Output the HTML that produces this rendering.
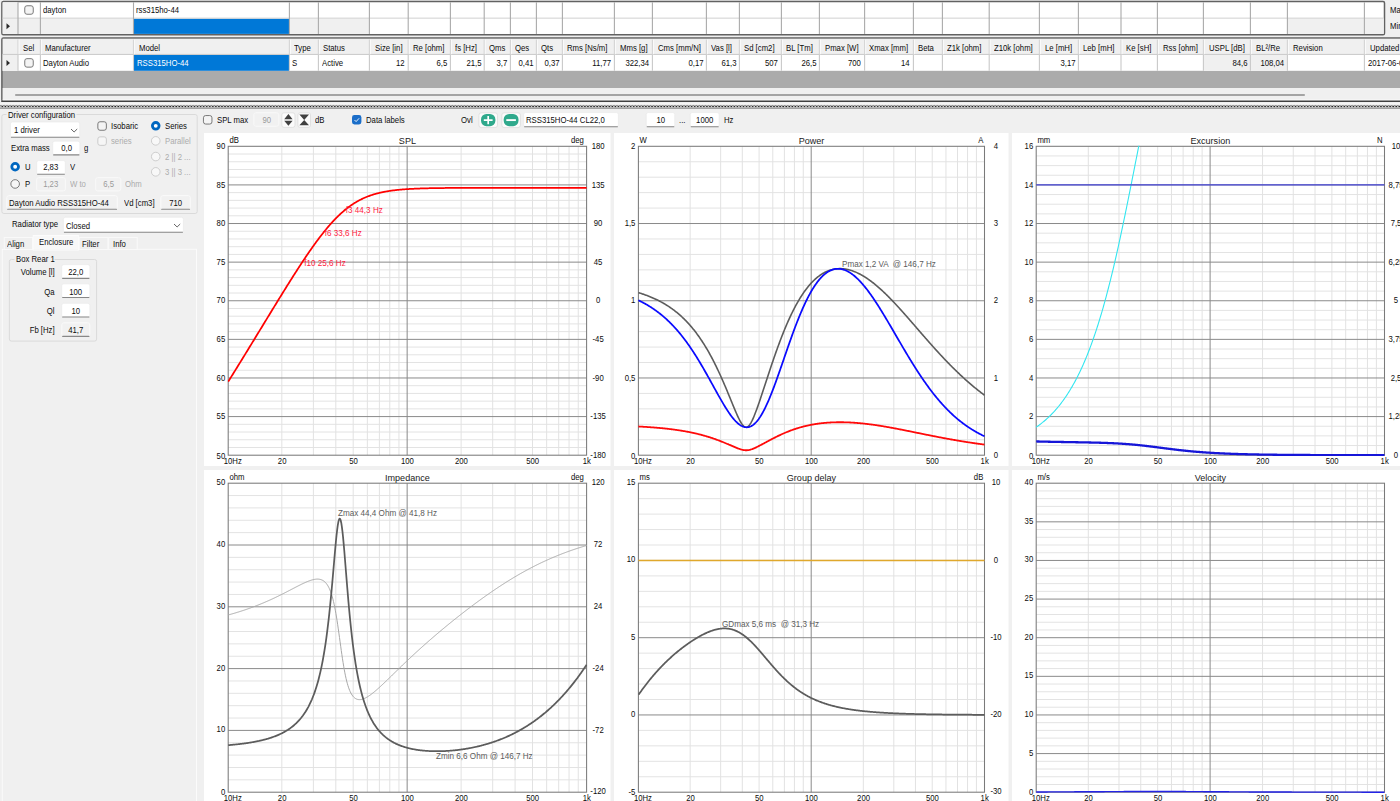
<!DOCTYPE html><html><head><meta charset="utf-8"><title>Loudspeaker enclosure simulation</title><style>
html,body{margin:0;padding:0;}
body{width:1400px;height:801px;overflow:hidden;background:#f0f0f0;position:relative;font-family:"Liberation Sans",sans-serif;font-size:9.5px;color:#0c0c0c;}
div,span,svg{position:absolute;box-sizing:border-box;}
.t{white-space:nowrap;line-height:10px;height:10px;transform:scaleX(0.815);transform-origin:0 0;}
.tr{transform-origin:100% 0;}
</style></head><body>
<svg style="left:0;top:0" width="1400" height="801"><rect x="1.9" y="1.5" width="1382.6" height="33.2" fill="#fff" rx="1.5" stroke="#626262" stroke-width="1.5"/><rect x="2.65" y="18.2" width="1381.1" height="15.7" fill="#f0f0f0"/><rect x="369.9" y="18.2" width="917.5" height="15.7" fill="#fff"/><rect x="2.65" y="2.25" width="15.4" height="16" fill="#f0f0f0"/><rect x="134" y="18.7" width="155" height="15.2" fill="#0078d7"/><rect x="2.65" y="17.6" width="1381.1" height="1.1" fill="#d4d4d4"/><rect x="17.45" y="2.25" width="1.1" height="31.7" fill="#aaaaaa"/><rect x="39.85" y="2.25" width="1.1" height="31.7" fill="#aaaaaa"/><rect x="132.95" y="2.25" width="1.1" height="31.7" fill="#aaaaaa"/><rect x="288.85" y="2.25" width="1.1" height="31.7" fill="#aaaaaa"/><rect x="317.85" y="2.25" width="1.1" height="31.7" fill="#aaaaaa"/><rect x="368.85" y="2.25" width="1.1" height="31.7" fill="#aaaaaa"/><rect x="407.65" y="2.25" width="1.1" height="31.7" fill="#aaaaaa"/><rect x="449.85" y="2.25" width="1.1" height="31.7" fill="#aaaaaa"/><rect x="483.65" y="2.25" width="1.1" height="31.7" fill="#aaaaaa"/><rect x="509.85" y="2.25" width="1.1" height="31.7" fill="#aaaaaa"/><rect x="535.85" y="2.25" width="1.1" height="31.7" fill="#aaaaaa"/><rect x="561.85" y="2.25" width="1.1" height="31.7" fill="#aaaaaa"/><rect x="613.85" y="2.25" width="1.1" height="31.7" fill="#aaaaaa"/><rect x="651.85" y="2.25" width="1.1" height="31.7" fill="#aaaaaa"/><rect x="705.85" y="2.25" width="1.1" height="31.7" fill="#aaaaaa"/><rect x="738.85" y="2.25" width="1.1" height="31.7" fill="#aaaaaa"/><rect x="780.85" y="2.25" width="1.1" height="31.7" fill="#aaaaaa"/><rect x="818.85" y="2.25" width="1.1" height="31.7" fill="#aaaaaa"/><rect x="864.05" y="2.25" width="1.1" height="31.7" fill="#aaaaaa"/><rect x="912.85" y="2.25" width="1.1" height="31.7" fill="#aaaaaa"/><rect x="941.85" y="2.25" width="1.1" height="31.7" fill="#aaaaaa"/><rect x="988.65" y="2.25" width="1.1" height="31.7" fill="#aaaaaa"/><rect x="1038.85" y="2.25" width="1.1" height="31.7" fill="#aaaaaa"/><rect x="1077.85" y="2.25" width="1.1" height="31.7" fill="#aaaaaa"/><rect x="1120.45" y="2.25" width="1.1" height="31.7" fill="#aaaaaa"/><rect x="1156.85" y="2.25" width="1.1" height="31.7" fill="#aaaaaa"/><rect x="1202.85" y="2.25" width="1.1" height="31.7" fill="#aaaaaa"/><rect x="1249.85" y="2.25" width="1.1" height="31.7" fill="#aaaaaa"/><rect x="1286.85" y="2.25" width="1.1" height="31.7" fill="#aaaaaa"/><rect x="1363.85" y="2.25" width="1.1" height="31.7" fill="#aaaaaa"/><rect x="24.75" y="5.75" width="8.5" height="8.5" fill="#f4f4f4" rx="2.2" stroke="#6c6c6c" stroke-width="0.9"/><path d="M6.5 23.2 L10 26.2 L6.5 29.2 Z" fill="#2b2b2b"/><rect x="1.9" y="38" width="1420" height="63.3" fill="#ababab" rx="1.5" stroke="#626262" stroke-width="1.5"/><rect x="2.65" y="38.75" width="1400" height="15.7" fill="#f0f0f0"/><rect x="2.65" y="54.4" width="1400" height="16.4" fill="#fff"/><rect x="2.65" y="54.4" width="15.4" height="16.4" fill="#f0f0f0"/><rect x="134" y="55" width="155" height="15.8" fill="#0078d7"/><rect x="1203.9" y="55" width="83" height="15.8" fill="#f0f0f0"/><rect x="2.65" y="88" width="1400" height="12.6" fill="#f0f0f0"/><rect x="2.65" y="99.6" width="1400" height="0.9" fill="#fdfdfd"/><rect x="1.2" y="100.6" width="1400" height="1.3" fill="#3e3e3e"/><rect x="15" y="94.3" width="1290" height="1.4" fill="#8b8b8b" rx="0.7"/><rect x="2.65" y="53.9" width="1400" height="1.1" fill="#cdcdcd"/><rect x="17.4" y="39.6" width="1.2" height="14.6" fill="#d6d6d6"/><rect x="18.6" y="39.6" width="0.9" height="14.6" fill="#fbfbfb"/><rect x="17.45" y="55" width="1.1" height="15.8" fill="#c9c9c9"/><rect x="39.8" y="39.6" width="1.2" height="14.6" fill="#d6d6d6"/><rect x="41" y="39.6" width="0.9" height="14.6" fill="#fbfbfb"/><rect x="39.85" y="55" width="1.1" height="15.8" fill="#c9c9c9"/><rect x="132.9" y="39.6" width="1.2" height="14.6" fill="#d6d6d6"/><rect x="134.1" y="39.6" width="0.9" height="14.6" fill="#fbfbfb"/><rect x="132.95" y="55" width="1.1" height="15.8" fill="#c9c9c9"/><rect x="288.8" y="39.6" width="1.2" height="14.6" fill="#d6d6d6"/><rect x="290" y="39.6" width="0.9" height="14.6" fill="#fbfbfb"/><rect x="288.85" y="55" width="1.1" height="15.8" fill="#c9c9c9"/><rect x="317.8" y="39.6" width="1.2" height="14.6" fill="#d6d6d6"/><rect x="319" y="39.6" width="0.9" height="14.6" fill="#fbfbfb"/><rect x="317.85" y="55" width="1.1" height="15.8" fill="#c9c9c9"/><rect x="368.8" y="39.6" width="1.2" height="14.6" fill="#d6d6d6"/><rect x="370" y="39.6" width="0.9" height="14.6" fill="#fbfbfb"/><rect x="368.85" y="55" width="1.1" height="15.8" fill="#c9c9c9"/><rect x="407.6" y="39.6" width="1.2" height="14.6" fill="#d6d6d6"/><rect x="408.8" y="39.6" width="0.9" height="14.6" fill="#fbfbfb"/><rect x="407.65" y="55" width="1.1" height="15.8" fill="#c9c9c9"/><rect x="449.8" y="39.6" width="1.2" height="14.6" fill="#d6d6d6"/><rect x="451" y="39.6" width="0.9" height="14.6" fill="#fbfbfb"/><rect x="449.85" y="55" width="1.1" height="15.8" fill="#c9c9c9"/><rect x="483.6" y="39.6" width="1.2" height="14.6" fill="#d6d6d6"/><rect x="484.8" y="39.6" width="0.9" height="14.6" fill="#fbfbfb"/><rect x="483.65" y="55" width="1.1" height="15.8" fill="#c9c9c9"/><rect x="509.8" y="39.6" width="1.2" height="14.6" fill="#d6d6d6"/><rect x="511" y="39.6" width="0.9" height="14.6" fill="#fbfbfb"/><rect x="509.85" y="55" width="1.1" height="15.8" fill="#c9c9c9"/><rect x="535.8" y="39.6" width="1.2" height="14.6" fill="#d6d6d6"/><rect x="537" y="39.6" width="0.9" height="14.6" fill="#fbfbfb"/><rect x="535.85" y="55" width="1.1" height="15.8" fill="#c9c9c9"/><rect x="561.8" y="39.6" width="1.2" height="14.6" fill="#d6d6d6"/><rect x="563" y="39.6" width="0.9" height="14.6" fill="#fbfbfb"/><rect x="561.85" y="55" width="1.1" height="15.8" fill="#c9c9c9"/><rect x="613.8" y="39.6" width="1.2" height="14.6" fill="#d6d6d6"/><rect x="615" y="39.6" width="0.9" height="14.6" fill="#fbfbfb"/><rect x="613.85" y="55" width="1.1" height="15.8" fill="#c9c9c9"/><rect x="651.8" y="39.6" width="1.2" height="14.6" fill="#d6d6d6"/><rect x="653" y="39.6" width="0.9" height="14.6" fill="#fbfbfb"/><rect x="651.85" y="55" width="1.1" height="15.8" fill="#c9c9c9"/><rect x="705.8" y="39.6" width="1.2" height="14.6" fill="#d6d6d6"/><rect x="707" y="39.6" width="0.9" height="14.6" fill="#fbfbfb"/><rect x="705.85" y="55" width="1.1" height="15.8" fill="#c9c9c9"/><rect x="738.8" y="39.6" width="1.2" height="14.6" fill="#d6d6d6"/><rect x="740" y="39.6" width="0.9" height="14.6" fill="#fbfbfb"/><rect x="738.85" y="55" width="1.1" height="15.8" fill="#c9c9c9"/><rect x="780.8" y="39.6" width="1.2" height="14.6" fill="#d6d6d6"/><rect x="782" y="39.6" width="0.9" height="14.6" fill="#fbfbfb"/><rect x="780.85" y="55" width="1.1" height="15.8" fill="#c9c9c9"/><rect x="818.8" y="39.6" width="1.2" height="14.6" fill="#d6d6d6"/><rect x="820" y="39.6" width="0.9" height="14.6" fill="#fbfbfb"/><rect x="818.85" y="55" width="1.1" height="15.8" fill="#c9c9c9"/><rect x="864" y="39.6" width="1.2" height="14.6" fill="#d6d6d6"/><rect x="865.2" y="39.6" width="0.9" height="14.6" fill="#fbfbfb"/><rect x="864.05" y="55" width="1.1" height="15.8" fill="#c9c9c9"/><rect x="912.8" y="39.6" width="1.2" height="14.6" fill="#d6d6d6"/><rect x="914" y="39.6" width="0.9" height="14.6" fill="#fbfbfb"/><rect x="912.85" y="55" width="1.1" height="15.8" fill="#c9c9c9"/><rect x="941.8" y="39.6" width="1.2" height="14.6" fill="#d6d6d6"/><rect x="943" y="39.6" width="0.9" height="14.6" fill="#fbfbfb"/><rect x="941.85" y="55" width="1.1" height="15.8" fill="#c9c9c9"/><rect x="988.6" y="39.6" width="1.2" height="14.6" fill="#d6d6d6"/><rect x="989.8" y="39.6" width="0.9" height="14.6" fill="#fbfbfb"/><rect x="988.65" y="55" width="1.1" height="15.8" fill="#c9c9c9"/><rect x="1038.8" y="39.6" width="1.2" height="14.6" fill="#d6d6d6"/><rect x="1040" y="39.6" width="0.9" height="14.6" fill="#fbfbfb"/><rect x="1038.85" y="55" width="1.1" height="15.8" fill="#c9c9c9"/><rect x="1077.8" y="39.6" width="1.2" height="14.6" fill="#d6d6d6"/><rect x="1079" y="39.6" width="0.9" height="14.6" fill="#fbfbfb"/><rect x="1077.85" y="55" width="1.1" height="15.8" fill="#c9c9c9"/><rect x="1120.4" y="39.6" width="1.2" height="14.6" fill="#d6d6d6"/><rect x="1121.6" y="39.6" width="0.9" height="14.6" fill="#fbfbfb"/><rect x="1120.45" y="55" width="1.1" height="15.8" fill="#c9c9c9"/><rect x="1156.8" y="39.6" width="1.2" height="14.6" fill="#d6d6d6"/><rect x="1158" y="39.6" width="0.9" height="14.6" fill="#fbfbfb"/><rect x="1156.85" y="55" width="1.1" height="15.8" fill="#c9c9c9"/><rect x="1202.8" y="39.6" width="1.2" height="14.6" fill="#d6d6d6"/><rect x="1204" y="39.6" width="0.9" height="14.6" fill="#fbfbfb"/><rect x="1202.85" y="55" width="1.1" height="15.8" fill="#c9c9c9"/><rect x="1249.8" y="39.6" width="1.2" height="14.6" fill="#d6d6d6"/><rect x="1251" y="39.6" width="0.9" height="14.6" fill="#fbfbfb"/><rect x="1249.85" y="55" width="1.1" height="15.8" fill="#c9c9c9"/><rect x="1286.8" y="39.6" width="1.2" height="14.6" fill="#d6d6d6"/><rect x="1288" y="39.6" width="0.9" height="14.6" fill="#fbfbfb"/><rect x="1286.85" y="55" width="1.1" height="15.8" fill="#c9c9c9"/><rect x="1363.8" y="39.6" width="1.2" height="14.6" fill="#d6d6d6"/><rect x="1365" y="39.6" width="0.9" height="14.6" fill="#fbfbfb"/><rect x="1363.85" y="55" width="1.1" height="15.8" fill="#c9c9c9"/><path d="M6.5 60 L10 63 L6.5 66 Z" fill="#2b2b2b"/><rect x="24.75" y="58.65" width="8.5" height="8.5" fill="#f4f4f4" rx="2.2" stroke="#6c6c6c" stroke-width="0.9"/><rect x="1.9" y="114.5" width="195.3" height="99" fill="none" rx="2" stroke="#dadada" stroke-width="1"/><rect x="6.5" y="110" width="70" height="9" fill="#f0f0f0"/><rect x="10.4" y="121.95" width="69.4" height="15.4" fill="#fff" rx="2" stroke="#e9e9e9" stroke-width="0.7"/><rect x="10.85" y="136.65" width="68.5" height="1.05" fill="#888888" rx="0.5"/><path d="M71 129 L74.1 132 L77.2 129" fill="none" stroke="#555" stroke-width="0.9"/><rect x="97.85" y="121.75" width="8.5" height="8.5" fill="#f4f4f4" rx="2.2" stroke="#6c6c6c" stroke-width="0.9"/><rect x="97.85" y="136.85" width="8.5" height="8.5" fill="#f6f6f6" rx="2.2" stroke="#c6c6c6" stroke-width="0.9"/><circle cx="155.75" cy="125.85" r="3.35" fill="#fff" stroke="#0067c0" stroke-width="2.8"/><circle cx="155.75" cy="140.85" r="4.3" fill="#f8f8f8" stroke="#c8c8c8" stroke-width="0.9"/><circle cx="155.75" cy="156.55" r="4.3" fill="#f8f8f8" stroke="#c8c8c8" stroke-width="0.9"/><circle cx="155.75" cy="171.85" r="4.3" fill="#f8f8f8" stroke="#c8c8c8" stroke-width="0.9"/><rect x="52.7" y="141.15" width="27.2" height="13.9" fill="#fff" rx="2" stroke="#e9e9e9" stroke-width="0.7"/><rect x="53.15" y="154.35" width="26.3" height="1.05" fill="#888888" rx="0.5"/><circle cx="15.15" cy="166.75" r="3.35" fill="#fff" stroke="#0067c0" stroke-width="2.8"/><rect x="36.7" y="160.55" width="28.6" height="13.9" fill="#fff" rx="2" stroke="#e9e9e9" stroke-width="0.7"/><rect x="37.15" y="173.75" width="27.7" height="1.05" fill="#888888" rx="0.5"/><circle cx="15.15" cy="183.95" r="4.3" fill="#f6f6f6" stroke="#6c6c6c" stroke-width="0.9"/><rect x="36.65" y="177.7" width="28.7" height="13.2" fill="#f1f1f1" rx="2" stroke="#f9f9f9" stroke-width="1"/><rect x="95.65" y="177.7" width="25.1" height="13.2" fill="#f1f1f1" rx="2" stroke="#f9f9f9" stroke-width="1"/><rect x="6.85" y="195.7" width="110.5" height="13.6" fill="#f1f1f1" rx="2" stroke="#fafafa" stroke-width="1"/><rect x="7.15" y="208.75" width="109.9" height="1.05" fill="#888888" rx="0.5"/><rect x="160.85" y="195.7" width="29.5" height="13.6" fill="#f1f1f1" rx="2" stroke="#fafafa" stroke-width="1"/><rect x="161.15" y="208.75" width="28.9" height="1.05" fill="#888888" rx="0.5"/><rect x="63.4" y="217.25" width="120" height="15.1" fill="#fff" rx="2" stroke="#e9e9e9" stroke-width="0.7"/><rect x="63.85" y="231.65" width="119.1" height="1.05" fill="#888888" rx="0.5"/><path d="M174 224 L177.1 227 L180.2 224" fill="none" stroke="#555" stroke-width="0.9"/><rect x="2.3" y="249.3" width="194.2" height="560" fill="#f0f0f0" stroke="#fbfbfb" stroke-width="1"/><rect x="4.3" y="237.5" width="28.2" height="12" fill="#efefef" stroke="#f9f9f9" stroke-width="1"/><rect x="79.3" y="237.5" width="28.6" height="12" fill="#efefef" stroke="#f9f9f9" stroke-width="1"/><rect x="108.6" y="237.5" width="28.6" height="12" fill="#efefef" stroke="#f9f9f9" stroke-width="1"/><rect x="33.2" y="235.5" width="45.2" height="14.6" fill="#f8f8f8" stroke="#fcfcfc" stroke-width="1"/><rect x="33.8" y="249" width="44" height="1.6" fill="#f6f6f6"/><rect x="9.4" y="259.5" width="87.2" height="81.6" fill="none" rx="2" stroke="#dadada" stroke-width="1"/><rect x="14.5" y="255" width="40" height="9" fill="#f0f0f0"/><rect x="61.7" y="264.65" width="28.2" height="13.9" fill="#fff" rx="2" stroke="#e9e9e9" stroke-width="0.7"/><rect x="62.15" y="277.85" width="27.3" height="1.05" fill="#888888" rx="0.5"/><rect x="61.7" y="283.85" width="28.2" height="13.9" fill="#fff" rx="2" stroke="#e9e9e9" stroke-width="0.7"/><rect x="62.15" y="297.05" width="27.3" height="1.05" fill="#888888" rx="0.5"/><rect x="61.7" y="303.35" width="28.2" height="13.9" fill="#fff" rx="2" stroke="#e9e9e9" stroke-width="0.7"/><rect x="62.15" y="316.55" width="27.3" height="1.05" fill="#888888" rx="0.5"/><rect x="61.85" y="322.8" width="27.9" height="13.6" fill="#f1f1f1" rx="2" stroke="#fafafa" stroke-width="1"/><rect x="62.15" y="335.85" width="27.3" height="1.05" fill="#888888" rx="0.5"/><rect x="203.45" y="115.55" width="8.5" height="8.5" fill="#f4f4f4" rx="2.2" stroke="#6c6c6c" stroke-width="0.9"/><rect x="253.85" y="112.8" width="24.9" height="13.4" fill="#f1f1f1" rx="2" stroke="#f9f9f9" stroke-width="1"/><rect x="281.8" y="112.8" width="13.2" height="14.6" fill="#fbfbfb" rx="2.2" stroke="#dcdcdc" stroke-width="0.8"/><path d="M284.2 119.2 L288.4 114.1 L292.6 119.2 Z M284.2 120.7 L288.4 125.8 L292.6 120.7 Z" fill="#404040"/><rect x="297.9" y="112.8" width="12.6" height="14.6" fill="#fbfbfb" rx="2.2" stroke="#dcdcdc" stroke-width="0.8"/><path d="M299.4 114.6 L309 114.6 L304.2 119.9 L309 125.2 L299.4 125.2 L304.2 119.9 Z" fill="#404040"/><rect x="352" y="115.1" width="9.4" height="9.4" fill="#1b6ec9" rx="2.4"/><path d="M354.5 120 L356.1 121.6 L359.1 118.3" fill="none" stroke="#fff" stroke-width="0.9"/><rect x="478.9" y="112.8" width="18.6" height="14.8" fill="#fbfbfb" rx="2.4" stroke="#dcdcdc" stroke-width="0.8"/><rect x="481" y="114" width="14.4" height="12.2" fill="#2fa98c" rx="5.4"/><path d="M488.2 116 V124.2 M483.8 120.1 H492.6" fill="none" stroke="#fff" stroke-width="1.7"/><rect x="501.8" y="112.8" width="18.6" height="14.8" fill="#fbfbfb" rx="2.4" stroke="#dcdcdc" stroke-width="0.8"/><rect x="503.7" y="114" width="14.8" height="12.2" fill="#2fa98c" rx="5.4"/><path d="M506.3 120.1 H515.9" fill="none" stroke="#fff" stroke-width="1.9"/><rect x="523.6" y="112.55" width="94.8" height="14.3" fill="#fff" rx="2" stroke="#e9e9e9" stroke-width="0.7"/><rect x="524.05" y="126.15" width="93.9" height="1.05" fill="#888888" rx="0.5"/><rect x="646.2" y="112.55" width="28.6" height="14.3" fill="#fff" rx="2" stroke="#e9e9e9" stroke-width="0.7"/><rect x="646.65" y="126.15" width="27.7" height="1.05" fill="#888888" rx="0.5"/><rect x="690.2" y="112.55" width="29" height="14.3" fill="#fff" rx="2" stroke="#e9e9e9" stroke-width="0.7"/><rect x="690.65" y="126.15" width="28.1" height="1.05" fill="#888888" rx="0.5"/></svg>
<span class="t" style="top:5.2px;left:43px;">dayton</span>
<span class="t" style="top:5.2px;left:136px;">rss315ho-44</span>
<span class="t" style="top:5px;left:1389.5px;">Max</span>
<span class="t" style="top:20.5px;left:1389.5px;">Min</span>
<span class="t" style="top:43.0px;left:23px;">Sel</span>
<span class="t" style="top:43.0px;left:45px;">Manufacturer</span>
<span class="t" style="top:43.0px;left:138.5px;">Model</span>
<span class="t" style="top:43.0px;left:294px;">Type</span>
<span class="t" style="top:43.0px;left:323px;">Status</span>
<span class="t" style="top:43.0px;left:374.5px;">Size [in]</span>
<span class="t" style="top:43.0px;left:413px;">Re [ohm]</span>
<span class="t" style="top:43.0px;left:455px;">fs [Hz]</span>
<span class="t" style="top:43.0px;left:488.5px;">Qms</span>
<span class="t" style="top:43.0px;left:515px;">Qes</span>
<span class="t" style="top:43.0px;left:541px;">Qts</span>
<span class="t" style="top:43.0px;left:567px;">Rms [Ns/m]</span>
<span class="t" style="top:43.0px;left:619.5px;">Mms [g]</span>
<span class="t" style="top:43.0px;left:657.5px;">Cms [mm/N]</span>
<span class="t" style="top:43.0px;left:711px;">Vas [l]</span>
<span class="t" style="top:43.0px;left:744px;">Sd [cm2]</span>
<span class="t" style="top:43.0px;left:786px;">BL [Tm]</span>
<span class="t" style="top:43.0px;left:824.5px;">Pmax [W]</span>
<span class="t" style="top:43.0px;left:869px;">Xmax [mm]</span>
<span class="t" style="top:43.0px;left:918px;">Beta</span>
<span class="t" style="top:43.0px;left:947px;">Z1k [ohm]</span>
<span class="t" style="top:43.0px;left:994px;">Z10k [ohm]</span>
<span class="t" style="top:43.0px;left:1044.5px;">Le [mH]</span>
<span class="t" style="top:43.0px;left:1083px;">Leb [mH]</span>
<span class="t" style="top:43.0px;left:1125.5px;">Ke [sH]</span>
<span class="t" style="top:43.0px;left:1162.5px;">Rss [ohm]</span>
<span class="t" style="top:43.0px;left:1208.5px;">USPL [dB]</span>
<span class="t" style="top:43.0px;left:1255.5px;">BL²/Re</span>
<span class="t" style="top:43.0px;left:1292.5px;">Revision</span>
<span class="t" style="top:43.0px;left:1369.5px;">Updated</span>
<span class="t" style="top:58px;left:43px;">Dayton Audio</span>
<span class="t" style="top:58px;color:#fff;left:136.5px;">RSS315HO-44</span>
<span class="t" style="top:58px;left:292px;">S</span>
<span class="t" style="top:58px;left:321.5px;">Active</span>
<span class="t tr" style="top:58px;right:995px;">12</span>
<span class="t tr" style="top:58px;right:953px;">6,5</span>
<span class="t tr" style="top:58px;right:919px;">21,5</span>
<span class="t tr" style="top:58px;right:893px;">3,7</span>
<span class="t tr" style="top:58px;right:867px;">0,41</span>
<span class="t tr" style="top:58px;right:841px;">0,37</span>
<span class="t tr" style="top:58px;right:789px;">11,77</span>
<span class="t tr" style="top:58px;right:751px;">322,34</span>
<span class="t tr" style="top:58px;right:697px;">0,17</span>
<span class="t tr" style="top:58px;right:664px;">61,3</span>
<span class="t tr" style="top:58px;right:622px;">507</span>
<span class="t tr" style="top:58px;right:584px;">26,5</span>
<span class="t tr" style="top:58px;right:539px;">700</span>
<span class="t tr" style="top:58px;right:490px;">14</span>
<span class="t tr" style="top:58px;right:325px;">3,17</span>
<span class="t tr" style="top:58px;right:153px;">84,6</span>
<span class="t tr" style="top:58px;right:116px;">108,04</span>
<span class="t" style="top:58px;left:1367.5px;">2017-06-08</span>
<svg style="left:0;top:103px" width="1400" height="7"><defs><pattern id="sp" x="0" y="0" width="3.05" height="7" patternUnits="userSpaceOnUse"><path d="M-0.65 3.6 L0.875 2.35 L2.4 3.6 L3.925 2.35" fill="none" stroke="#6a6a6a" stroke-width="0.75"/><circle cx="2.4" cy="3.55" r="0.7" fill="#161616"/></pattern><linearGradient id="sg" x1="0" y1="0" x2="0" y2="1"><stop offset="0" stop-color="#e4e4e4"/><stop offset="0.7" stop-color="#d0d0d0"/><stop offset="1" stop-color="#b8b8b8"/></linearGradient></defs><rect x="0" y="0.6" width="1400" height="1" fill="#fcfcfc"/><rect x="0" y="1.6" width="1400" height="3.2" fill="url(#sg)"/><rect x="0" y="0" width="1400" height="7" fill="url(#sp)"/><rect x="0" y="4.7" width="1400" height="1.1" fill="#8e8e8e"/></svg>
<span class="t" style="top:109.6px;left:8px;">Driver configuration</span>
<span class="t" style="top:125.4px;left:14px;">1 driver</span>
<span class="t" style="top:121.3px;left:111px;">Isobaric</span>
<span class="t" style="top:136.3px;color:#acacac;left:111px;">series</span>
<span class="t" style="top:121.3px;left:165px;">Series</span>
<span class="t" style="top:136.3px;color:#acacac;left:165px;">Parallel</span>
<span class="t" style="top:152px;color:#acacac;left:165px;">2 || 2 ...</span>
<span class="t" style="top:167.3px;color:#acacac;left:165px;">3 || 3 ...</span>
<span class="t" style="top:142.9px;left:10.5px;">Extra mass</span>
<span class="t" style="top:143.2px;left:-56.30px;width:245.40px;text-align:center;transform-origin:122.70px 0;">0,0</span>
<span class="t" style="top:143.2px;left:84px;">g</span>
<span class="t" style="top:162.3px;left:25px;">U</span>
<span class="t" style="top:162.4px;left:-71.70px;width:245.40px;text-align:center;transform-origin:122.70px 0;">2,83</span>
<span class="t" style="top:162.3px;left:70px;">V</span>
<span class="t" style="top:178.8px;left:25px;">P</span>
<span class="t" style="top:178.9px;color:#9a9a9a;left:-71.70px;width:245.40px;text-align:center;transform-origin:122.70px 0;">1,23</span>
<span class="t" style="top:178.6px;color:#acacac;left:70px;">W to</span>
<span class="t" style="top:178.9px;color:#9a9a9a;left:-14.40px;width:245.40px;text-align:center;transform-origin:122.70px 0;">6,5</span>
<span class="t" style="top:178.6px;color:#acacac;left:125px;">Ohm</span>
<span class="t" style="top:198.2px;left:9px;">Dayton Audio RSS315HO-44</span>
<span class="t" style="top:198.2px;left:124px;">Vd [cm3]</span>
<span class="t" style="top:198.2px;left:53.00px;width:245.40px;text-align:center;transform-origin:122.70px 0;">710</span>
<span class="t" style="top:219.2px;left:12px;">Radiator type</span>
<span class="t" style="top:220.5px;left:66px;">Closed</span>
<span class="t" style="top:239.2px;left:7px;">Align</span>
<span class="t" style="top:236.6px;left:39px;">Enclosure</span>
<span class="t" style="top:239.2px;left:82px;">Filter</span>
<span class="t" style="top:239.2px;left:113px;">Info</span>
<span class="t" style="top:254.2px;left:16px;">Box Rear 1</span>
<span class="t tr" style="top:267.3px;right:1345.5px;">Volume [l]</span>
<span class="t" style="top:267.3px;left:-46.90px;width:245.40px;text-align:center;transform-origin:122.70px 0;">22,0</span>
<span class="t tr" style="top:286.5px;right:1345.5px;">Qa</span>
<span class="t" style="top:286.5px;left:-46.90px;width:245.40px;text-align:center;transform-origin:122.70px 0;">100</span>
<span class="t tr" style="top:306px;right:1345.5px;">Ql</span>
<span class="t" style="top:306px;left:-46.90px;width:245.40px;text-align:center;transform-origin:122.70px 0;">10</span>
<span class="t tr" style="top:325.3px;right:1345.5px;">Fb [Hz]</span>
<span class="t" style="top:325.3px;left:-46.90px;width:245.40px;text-align:center;transform-origin:122.70px 0;">41,7</span>
<span class="t" style="top:115.3px;left:217px;">SPL max</span>
<span class="t" style="top:115.3px;color:#9a9a9a;left:143.50px;width:245.40px;text-align:center;transform-origin:122.70px 0;">90</span>
<span class="t" style="top:115.3px;left:315px;">dB</span>
<span class="t" style="top:115.3px;left:366px;">Data labels</span>
<span class="t" style="top:115.3px;left:461px;">Ovl</span>
<span class="t" style="top:115.3px;left:526px;">RSS315HO-44 CL22,0</span>
<span class="t" style="top:115.3px;left:538.30px;width:245.40px;text-align:center;transform-origin:122.70px 0;">10</span>
<span class="t" style="top:115.3px;left:679px;">...</span>
<span class="t" style="top:115.3px;left:582.00px;width:245.40px;text-align:center;transform-origin:122.70px 0;">1000</span>
<span class="t" style="top:115.3px;left:724px;">Hz</span>
<svg style="left:204px;top:133px" width="406.5" height="333" viewBox="204 133 406.5 333" font-family="Liberation Sans, sans-serif" font-size="9.5"><rect x="204" y="133" width="406.5" height="333" fill="#fff"/><path d="M228.2 447.48H586.6M228.2 439.75H586.6M228.2 432.03H586.6M228.2 424.31H586.6M228.2 408.87H586.6M228.2 401.14H586.6M228.2 393.42H586.6M228.2 385.70H586.6M228.2 370.25H586.6M228.2 362.53H586.6M228.2 354.81H586.6M228.2 347.09H586.6M228.2 331.64H586.6M228.2 323.92H586.6M228.2 316.19H586.6M228.2 308.47H586.6M228.2 293.03H586.6M228.2 285.30H586.6M228.2 277.58H586.6M228.2 269.86H586.6M228.2 254.41H586.6M228.2 246.69H586.6M228.2 238.97H586.6M228.2 231.25H586.6M228.2 215.80H586.6M228.2 208.08H586.6M228.2 200.36H586.6M228.2 192.63H586.6M228.2 177.19H586.6M228.2 169.47H586.6M228.2 161.75H586.6M228.2 154.02H586.6" stroke="#e3e3e3" stroke-width="1" fill="none"/><path d="M281.82 146.3V455.2M313.40 146.3V455.2M335.80 146.3V455.2M353.18 146.3V455.2M367.37 146.3V455.2M379.38 146.3V455.2M389.77 146.3V455.2M398.95 146.3V455.2M461.12 146.3V455.2M492.70 146.3V455.2M515.10 146.3V455.2M532.48 146.3V455.2M546.67 146.3V455.2M558.68 146.3V455.2M569.07 146.3V455.2M578.25 146.3V455.2" stroke="#e2e2e2" stroke-width="1" fill="none"/><path d="M228.2 416.59H586.6M228.2 377.98H586.6M228.2 339.36H586.6M228.2 300.75H586.6M228.2 262.14H586.6M228.2 223.53H586.6M228.2 184.91H586.6" stroke="#8a8a8a" stroke-width="1" fill="none"/><path d="M407.15 146.3V455.2" stroke="#8a8a8a" stroke-width="1" fill="none"/><rect x="228.2" y="146.3" width="358.40000000000003" height="308.9" fill="none" stroke="#7a7a7a" stroke-width="1.05"/><clipPath id="c204_133"><rect x="227.7" y="145.8" width="359.40000000000003" height="310.09999999999997"/></clipPath><g clip-path="url(#c204_133)" fill="none" stroke-linejoin="round"><polyline points="228.20,381.66 228.80,380.70 229.40,379.75 229.99,378.79 230.59,377.83 231.19,376.87 231.79,375.91 232.39,374.95 232.99,373.99 233.58,373.02 234.18,372.06 234.78,371.09 235.38,370.13 235.98,369.16 236.58,368.20 237.17,367.23 237.77,366.26 238.37,365.29 238.97,364.33 239.57,363.36 240.17,362.39 240.76,361.42 241.36,360.44 241.96,359.47 242.56,358.50 243.16,357.53 243.76,356.55 244.35,355.58 244.95,354.61 245.55,353.63 246.15,352.66 246.75,351.68 247.35,350.70 247.94,349.73 248.54,348.75 249.14,347.77 249.74,346.80 250.34,345.82 250.94,344.84 251.53,343.86 252.13,342.88 252.73,341.90 253.33,340.92 253.93,339.94 254.53,338.96 255.12,337.98 255.72,337.00 256.32,336.02 256.92,335.04 257.52,334.06 258.12,333.08 258.71,332.10 259.31,331.12 259.91,330.14 260.51,329.16 261.11,328.18 261.71,327.19 262.30,326.21 262.90,325.23 263.50,324.25 264.10,323.27 264.70,322.29 265.30,321.31 265.89,320.33 266.49,319.35 267.09,318.36 267.69,317.38 268.29,316.40 268.89,315.42 269.48,314.44 270.08,313.47 270.68,312.49 271.28,311.51 271.88,310.53 272.48,309.55 273.07,308.57 273.67,307.60 274.27,306.62 274.87,305.64 275.47,304.67 276.07,303.69 276.66,302.72 277.26,301.75 277.86,300.77 278.46,299.80 279.06,298.83 279.66,297.86 280.25,296.89 280.85,295.92 281.45,294.95 282.05,293.99 282.65,293.02 283.25,292.05 283.84,291.09 284.44,290.13 285.04,289.17 285.64,288.20 286.24,287.24 286.84,286.29 287.43,285.33 288.03,284.37 288.63,283.42 289.23,282.47 289.83,281.52 290.43,280.57 291.02,279.62 291.62,278.67 292.22,277.73 292.82,276.78 293.42,275.84 294.02,274.90 294.61,273.97 295.21,273.03 295.81,272.10 296.41,271.17 297.01,270.24 297.61,269.31 298.20,268.39 298.80,267.46 299.40,266.54 300.00,265.63 300.60,264.71 301.20,263.80 301.79,262.89 302.39,261.98 302.99,261.08 303.59,260.18 304.19,259.28 304.79,258.39 305.38,257.50 305.98,256.61 306.58,255.72 307.18,254.84 307.78,253.97 308.38,253.09 308.97,252.22 309.57,251.35 310.17,250.49 310.77,249.63 311.37,248.78 311.97,247.93 312.56,247.08 313.16,246.24 313.76,245.40 314.36,244.57 314.96,243.74 315.56,242.92 316.15,242.10 316.75,241.28 317.35,240.47 317.95,239.67 318.55,238.87 319.15,238.07 319.74,237.29 320.34,236.50 320.94,235.72 321.54,234.95 322.14,234.19 322.74,233.43 323.33,232.67 323.93,231.92 324.53,231.18 325.13,230.44 325.73,229.71 326.33,228.99 326.92,228.27 327.52,227.56 328.12,226.85 328.72,226.16 329.32,225.46 329.92,224.78 330.51,224.10 331.11,223.43 331.71,222.77 332.31,222.11 332.91,221.46 333.51,220.82 334.10,220.18 334.70,219.56 335.30,218.94 335.90,218.32 336.50,217.72 337.10,217.12 337.69,216.53 338.29,215.95 338.89,215.37 339.49,214.80 340.09,214.24 340.69,213.69 341.28,213.15 341.88,212.61 342.48,212.08 343.08,211.56 343.68,211.05 344.28,210.54 344.87,210.04 345.47,209.55 346.07,209.07 346.67,208.59 347.27,208.13 347.87,207.67 348.46,207.22 349.06,206.77 349.66,206.34 350.26,205.91 350.86,205.48 351.46,205.07 352.05,204.66 352.65,204.27 353.25,203.87 353.85,203.49 354.45,203.11 355.05,202.74 355.64,202.38 356.24,202.03 356.84,201.68 357.44,201.34 358.04,201.00 358.64,200.67 359.23,200.35 359.83,200.04 360.43,199.73 361.03,199.43 361.63,199.13 362.23,198.84 362.82,198.56 363.42,198.29 364.02,198.02 364.62,197.75 365.22,197.49 365.82,197.24 366.41,197.00 367.01,196.75 367.61,196.52 368.21,196.29 368.81,196.06 369.41,195.84 370.00,195.63 370.60,195.42 371.20,195.22 371.80,195.02 372.40,194.82 373.00,194.63 373.59,194.45 374.19,194.27 374.79,194.09 375.39,193.92 375.99,193.75 376.59,193.59 377.18,193.43 377.78,193.28 378.38,193.13 378.98,192.98 379.58,192.84 380.18,192.70 380.77,192.56 381.37,192.43 381.97,192.30 382.57,192.17 383.17,192.05 383.77,191.93 384.36,191.82 384.96,191.70 385.56,191.59 386.16,191.49 386.76,191.38 387.36,191.28 387.95,191.18 388.55,191.09 389.15,190.99 389.75,190.90 390.35,190.82 390.95,190.73 391.54,190.65 392.14,190.57 392.74,190.49 393.34,190.41 393.94,190.34 394.54,190.26 395.13,190.19 395.73,190.12 396.33,190.06 396.93,189.99 397.53,189.93 398.13,189.87 398.72,189.81 399.32,189.75 399.92,189.69 400.52,189.64 401.12,189.59 401.72,189.53 402.31,189.48 402.91,189.44 403.51,189.39 404.11,189.34 404.71,189.30 405.31,189.25 405.90,189.21 406.50,189.17 407.10,189.13 407.70,189.09 408.30,189.05 408.90,189.02 409.49,188.98 410.09,188.95 410.69,188.91 411.29,188.88 411.89,188.85 412.49,188.82 413.08,188.79 413.68,188.76 414.28,188.73 414.88,188.70 415.48,188.68 416.08,188.65 416.67,188.63 417.27,188.60 417.87,188.58 418.47,188.56 419.07,188.53 419.67,188.51 420.26,188.49 420.86,188.47 421.46,188.45 422.06,188.43 422.66,188.41 423.26,188.40 423.85,188.38 424.45,188.36 425.05,188.34 425.65,188.33 426.25,188.31 426.85,188.30 427.44,188.28 428.04,188.27 428.64,188.25 429.24,188.24 429.84,188.23 430.44,188.21 431.03,188.20 431.63,188.19 432.23,188.18 432.83,188.17 433.43,188.16 434.03,188.15 434.62,188.13 435.22,188.12 435.82,188.11 436.42,188.11 437.02,188.10 437.62,188.09 438.21,188.08 438.81,188.07 439.41,188.06 440.01,188.05 440.61,188.05 441.21,188.04 441.80,188.03 442.40,188.02 443.00,188.02 443.60,188.01 444.20,188.00 444.80,188.00 445.39,187.99 445.99,187.98 446.59,187.98 447.19,187.97 447.79,187.97 448.39,187.96 448.98,187.96 449.58,187.95 450.18,187.95 450.78,187.94 451.38,187.94 451.98,187.93 452.57,187.93 453.17,187.92 453.77,187.92 454.37,187.92 454.97,187.91 455.57,187.91 456.16,187.91 456.76,187.90 457.36,187.90 457.96,187.90 458.56,187.89 459.16,187.89 459.75,187.89 460.35,187.88 460.95,187.88 461.55,187.88 462.15,187.87 462.75,187.87 463.34,187.87 463.94,187.87 464.54,187.86 465.14,187.86 465.74,187.86 466.34,187.86 466.93,187.85 467.53,187.85 468.13,187.85 468.73,187.85 469.33,187.85 469.93,187.84 470.52,187.84 471.12,187.84 471.72,187.84 472.32,187.84 472.92,187.84 473.52,187.83 474.11,187.83 474.71,187.83 475.31,187.83 475.91,187.83 476.51,187.83 477.11,187.83 477.70,187.82 478.30,187.82 478.90,187.82 479.50,187.82 480.10,187.82 480.70,187.82 481.29,187.82 481.89,187.82 482.49,187.81 483.09,187.81 483.69,187.81 484.29,187.81 484.88,187.81 485.48,187.81 486.08,187.81 486.68,187.81 487.28,187.81 487.88,187.81 488.47,187.81 489.07,187.80 489.67,187.80 490.27,187.80 490.87,187.80 491.47,187.80 492.06,187.80 492.66,187.80 493.26,187.80 493.86,187.80 494.46,187.80 495.06,187.80 495.65,187.80 496.25,187.80 496.85,187.80 497.45,187.80 498.05,187.79 498.65,187.79 499.24,187.79 499.84,187.79 500.44,187.79 501.04,187.79 501.64,187.79 502.24,187.79 502.83,187.79 503.43,187.79 504.03,187.79 504.63,187.79 505.23,187.79 505.83,187.79 506.42,187.79 507.02,187.79 507.62,187.79 508.22,187.79 508.82,187.79 509.42,187.79 510.01,187.79 510.61,187.79 511.21,187.79 511.81,187.79 512.41,187.79 513.01,187.78 513.60,187.78 514.20,187.78 514.80,187.78 515.40,187.78 516.00,187.78 516.60,187.78 517.19,187.78 517.79,187.78 518.39,187.78 518.99,187.78 519.59,187.78 520.19,187.78 520.78,187.78 521.38,187.78 521.98,187.78 522.58,187.78 523.18,187.78 523.78,187.78 524.37,187.78 524.97,187.78 525.57,187.78 526.17,187.78 526.77,187.78 527.37,187.78 527.96,187.78 528.56,187.78 529.16,187.78 529.76,187.78 530.36,187.78 530.96,187.78 531.55,187.78 532.15,187.78 532.75,187.78 533.35,187.78 533.95,187.78 534.55,187.78 535.14,187.78 535.74,187.78 536.34,187.78 536.94,187.78 537.54,187.78 538.14,187.78 538.73,187.78 539.33,187.78 539.93,187.78 540.53,187.78 541.13,187.78 541.73,187.78 542.32,187.78 542.92,187.78 543.52,187.78 544.12,187.78 544.72,187.78 545.32,187.78 545.91,187.78 546.51,187.78 547.11,187.78 547.71,187.78 548.31,187.78 548.91,187.78 549.50,187.78 550.10,187.78 550.70,187.78 551.30,187.78 551.90,187.78 552.50,187.78 553.09,187.78 553.69,187.78 554.29,187.78 554.89,187.78 555.49,187.78 556.09,187.78 556.68,187.78 557.28,187.78 557.88,187.77 558.48,187.77 559.08,187.77 559.68,187.77 560.27,187.77 560.87,187.77 561.47,187.77 562.07,187.77 562.67,187.77 563.27,187.77 563.86,187.77 564.46,187.77 565.06,187.77 565.66,187.77 566.26,187.77 566.86,187.77 567.45,187.77 568.05,187.77 568.65,187.77 569.25,187.77 569.85,187.77 570.45,187.77 571.04,187.77 571.64,187.77 572.24,187.77 572.84,187.77 573.44,187.77 574.04,187.77 574.63,187.77 575.23,187.77 575.83,187.77 576.43,187.77 577.03,187.77 577.63,187.77 578.22,187.77 578.82,187.77 579.42,187.77 580.02,187.77 580.62,187.77 581.22,187.77 581.81,187.77 582.41,187.77 583.01,187.77 583.61,187.77 584.21,187.77 584.81,187.77 585.40,187.77 586.00,187.77 586.60,187.77" stroke="#ff0000" stroke-width="1.75"/></g><text transform="translate(225.20,458.50) scale(0.815,1)" text-anchor="end" fill="#0c0c0c">50</text><text transform="translate(225.20,419.19) scale(0.815,1)" text-anchor="end" fill="#0c0c0c">55</text><text transform="translate(225.20,380.58) scale(0.815,1)" text-anchor="end" fill="#0c0c0c">60</text><text transform="translate(225.20,341.96) scale(0.815,1)" text-anchor="end" fill="#0c0c0c">65</text><text transform="translate(225.20,303.35) scale(0.815,1)" text-anchor="end" fill="#0c0c0c">70</text><text transform="translate(225.20,264.74) scale(0.815,1)" text-anchor="end" fill="#0c0c0c">75</text><text transform="translate(225.20,226.12) scale(0.815,1)" text-anchor="end" fill="#0c0c0c">80</text><text transform="translate(225.20,187.51) scale(0.815,1)" text-anchor="end" fill="#0c0c0c">85</text><text transform="translate(225.20,148.90) scale(0.815,1)" text-anchor="end" fill="#0c0c0c">90</text><text transform="translate(598.10,457.80) scale(0.815,1)" text-anchor="middle" fill="#0c0c0c">-180</text><text transform="translate(598.10,419.19) scale(0.815,1)" text-anchor="middle" fill="#0c0c0c">-135</text><text transform="translate(598.10,380.58) scale(0.815,1)" text-anchor="middle" fill="#0c0c0c">-90</text><text transform="translate(598.10,341.96) scale(0.815,1)" text-anchor="middle" fill="#0c0c0c">-45</text><text transform="translate(598.10,303.35) scale(0.815,1)" text-anchor="middle" fill="#0c0c0c">0</text><text transform="translate(598.10,264.74) scale(0.815,1)" text-anchor="middle" fill="#0c0c0c">45</text><text transform="translate(598.10,226.12) scale(0.815,1)" text-anchor="middle" fill="#0c0c0c">90</text><text transform="translate(598.10,187.51) scale(0.815,1)" text-anchor="middle" fill="#0c0c0c">135</text><text transform="translate(598.10,148.90) scale(0.815,1)" text-anchor="middle" fill="#0c0c0c">180</text><text transform="translate(282.14,464.00) scale(0.815,1)" text-anchor="middle" fill="#0c0c0c">20</text><text transform="translate(353.46,464.00) scale(0.815,1)" text-anchor="middle" fill="#0c0c0c">50</text><text transform="translate(407.40,464.00) scale(0.815,1)" text-anchor="middle" fill="#0c0c0c">100</text><text transform="translate(461.34,464.00) scale(0.815,1)" text-anchor="middle" fill="#0c0c0c">200</text><text transform="translate(532.66,464.00) scale(0.815,1)" text-anchor="middle" fill="#0c0c0c">500</text><text transform="translate(223.70,464.00) scale(0.815,1)" text-anchor="start" fill="#0c0c0c">10Hz</text><text transform="translate(590.90,464.00) scale(0.815,1)" text-anchor="end" fill="#0c0c0c">1k</text><text transform="translate(407.40,143.70) scale(0.954,1)" text-anchor="middle" fill="#1a1a1a">SPL</text><text transform="translate(229.40,142.90) scale(0.815,1)" text-anchor="start" fill="#0c0c0c">dB</text><text transform="translate(583.90,142.90) scale(0.815,1)" text-anchor="end" fill="#0c0c0c">deg</text><text transform="translate(345.80,213.30) scale(0.856,1)" text-anchor="start" fill="#ff2040">f3 44,3 Hz</text><text transform="translate(324.70,235.80) scale(0.856,1)" text-anchor="start" fill="#ff2040">f6 33,6 Hz</text><text transform="translate(304.20,266.00) scale(0.856,1)" text-anchor="start" fill="#ff2040">f10 25,6 Hz</text></svg>
<svg style="left:614px;top:133px" width="394.5" height="333" viewBox="614 133 394.5 333" font-family="Liberation Sans, sans-serif" font-size="9.5"><rect x="614" y="133" width="394.5" height="333" fill="#fff"/><path d="M638.4 439.75H984.5M638.4 424.31H984.5M638.4 408.87H984.5M638.4 393.42H984.5M638.4 362.53H984.5M638.4 347.08H984.5M638.4 331.64H984.5M638.4 316.19H984.5M638.4 285.30H984.5M638.4 269.86H984.5M638.4 254.41H984.5M638.4 238.97H984.5M638.4 208.08H984.5M638.4 192.63H984.5M638.4 177.19H984.5M638.4 161.75H984.5" stroke="#e3e3e3" stroke-width="1" fill="none"/><path d="M690.17 146.3V455.2M720.66 146.3V455.2M742.30 146.3V455.2M759.08 146.3V455.2M772.79 146.3V455.2M784.38 146.3V455.2M794.42 146.3V455.2M803.28 146.3V455.2M863.32 146.3V455.2M893.81 146.3V455.2M915.45 146.3V455.2M932.23 146.3V455.2M945.94 146.3V455.2M957.53 146.3V455.2M967.57 146.3V455.2M976.43 146.3V455.2" stroke="#e2e2e2" stroke-width="1" fill="none"/><path d="M638.4 377.98H984.5M638.4 300.75H984.5M638.4 223.53H984.5" stroke="#8a8a8a" stroke-width="1" fill="none"/><path d="M811.20 146.3V455.2" stroke="#8a8a8a" stroke-width="1" fill="none"/><rect x="638.4" y="146.3" width="346.1" height="308.9" fill="none" stroke="#7a7a7a" stroke-width="1.05"/><clipPath id="c614_133"><rect x="637.9" y="145.8" width="347.1" height="310.09999999999997"/></clipPath><g clip-path="url(#c614_133)" fill="none" stroke-linejoin="round"><polyline points="638.40,426.48 638.98,426.51 639.56,426.54 640.13,426.57 640.71,426.61 641.29,426.64 641.87,426.67 642.44,426.71 643.02,426.74 643.60,426.78 644.18,426.81 644.76,426.85 645.33,426.88 645.91,426.92 646.49,426.96 647.07,427.00 647.64,427.03 648.22,427.07 648.80,427.11 649.38,427.15 649.96,427.19 650.53,427.24 651.11,427.28 651.69,427.32 652.27,427.37 652.84,427.41 653.42,427.45 654.00,427.50 654.58,427.55 655.16,427.59 655.73,427.64 656.31,427.69 656.89,427.74 657.47,427.79 658.05,427.84 658.62,427.89 659.20,427.94 659.78,428.00 660.36,428.05 660.93,428.10 661.51,428.16 662.09,428.22 662.67,428.27 663.25,428.33 663.82,428.39 664.40,428.45 664.98,428.51 665.56,428.57 666.13,428.64 666.71,428.70 667.29,428.76 667.87,428.83 668.45,428.90 669.02,428.96 669.60,429.03 670.18,429.10 670.76,429.17 671.33,429.24 671.91,429.32 672.49,429.39 673.07,429.47 673.65,429.54 674.22,429.62 674.80,429.70 675.38,429.78 675.96,429.86 676.53,429.94 677.11,430.02 677.69,430.11 678.27,430.19 678.85,430.28 679.42,430.37 680.00,430.46 680.58,430.55 681.16,430.64 681.73,430.74 682.31,430.83 682.89,430.93 683.47,431.03 684.05,431.13 684.62,431.23 685.20,431.33 685.78,431.43 686.36,431.54 686.93,431.65 687.51,431.75 688.09,431.86 688.67,431.98 689.25,432.09 689.82,432.20 690.40,432.32 690.98,432.44 691.56,432.56 692.14,432.68 692.71,432.80 693.29,432.93 693.87,433.06 694.45,433.19 695.02,433.32 695.60,433.45 696.18,433.58 696.76,433.72 697.34,433.86 697.91,434.00 698.49,434.14 699.07,434.28 699.65,434.43 700.22,434.58 700.80,434.73 701.38,434.88 701.96,435.03 702.54,435.19 703.11,435.35 703.69,435.51 704.27,435.67 704.85,435.84 705.42,436.00 706.00,436.17 706.58,436.34 707.16,436.52 707.74,436.69 708.31,436.87 708.89,437.05 709.47,437.23 710.05,437.42 710.62,437.60 711.20,437.79 711.78,437.98 712.36,438.18 712.94,438.37 713.51,438.57 714.09,438.77 714.67,438.97 715.25,439.18 715.82,439.38 716.40,439.59 716.98,439.81 717.56,440.02 718.14,440.23 718.71,440.45 719.29,440.67 719.87,440.90 720.45,441.12 721.02,441.35 721.60,441.57 722.18,441.80 722.76,442.04 723.34,442.27 723.91,442.51 724.49,442.74 725.07,442.98 725.65,443.22 726.23,443.47 726.80,443.71 727.38,443.96 727.96,444.20 728.54,444.45 729.11,444.70 729.69,444.94 730.27,445.19 730.85,445.44 731.43,445.69 732.00,445.94 732.58,446.19 733.16,446.44 733.74,446.68 734.31,446.93 734.89,447.17 735.47,447.41 736.05,447.65 736.63,447.88 737.20,448.11 737.78,448.33 738.36,448.55 738.94,448.76 739.51,448.96 740.09,449.16 740.67,449.34 741.25,449.51 741.83,449.67 742.40,449.81 742.98,449.93 743.56,450.04 744.14,450.13 744.71,450.20 745.29,450.24 745.87,450.26 746.45,450.26 747.03,450.23 747.60,450.18 748.18,450.11 748.76,450.02 749.34,449.90 749.91,449.76 750.49,449.61 751.07,449.43 751.65,449.24 752.23,449.04 752.80,448.82 753.38,448.59 753.96,448.35 754.54,448.11 755.11,447.85 755.69,447.58 756.27,447.31 756.85,447.03 757.43,446.75 758.00,446.46 758.58,446.17 759.16,445.87 759.74,445.57 760.32,445.27 760.89,444.97 761.47,444.66 762.05,444.35 762.63,444.05 763.20,443.74 763.78,443.42 764.36,443.11 764.94,442.80 765.52,442.49 766.09,442.18 766.67,441.87 767.25,441.55 767.83,441.24 768.40,440.93 768.98,440.63 769.56,440.32 770.14,440.01 770.72,439.71 771.29,439.40 771.87,439.10 772.45,438.80 773.03,438.50 773.60,438.20 774.18,437.91 774.76,437.61 775.34,437.32 775.92,437.03 776.49,436.75 777.07,436.46 777.65,436.18 778.23,435.90 778.80,435.62 779.38,435.35 779.96,435.08 780.54,434.81 781.12,434.54 781.69,434.28 782.27,434.02 782.85,433.76 783.43,433.50 784.00,433.25 784.58,433.00 785.16,432.75 785.74,432.51 786.32,432.27 786.89,432.03 787.47,431.80 788.05,431.56 788.63,431.34 789.20,431.11 789.78,430.89 790.36,430.67 790.94,430.45 791.52,430.24 792.09,430.03 792.67,429.82 793.25,429.62 793.83,429.42 794.41,429.22 794.98,429.03 795.56,428.83 796.14,428.65 796.72,428.46 797.29,428.28 797.87,428.10 798.45,427.92 799.03,427.75 799.61,427.58 800.18,427.41 800.76,427.25 801.34,427.09 801.92,426.93 802.49,426.78 803.07,426.63 803.65,426.48 804.23,426.33 804.81,426.19 805.38,426.05 805.96,425.91 806.54,425.78 807.12,425.65 807.69,425.52 808.27,425.39 808.85,425.27 809.43,425.15 810.01,425.03 810.58,424.92 811.16,424.80 811.74,424.70 812.32,424.59 812.89,424.49 813.47,424.38 814.05,424.29 814.63,424.19 815.21,424.10 815.78,424.01 816.36,423.92 816.94,423.83 817.52,423.75 818.09,423.67 818.67,423.59 819.25,423.51 819.83,423.44 820.41,423.37 820.98,423.30 821.56,423.23 822.14,423.17 822.72,423.11 823.29,423.05 823.87,422.99 824.45,422.94 825.03,422.88 825.61,422.83 826.18,422.78 826.76,422.74 827.34,422.69 827.92,422.65 828.49,422.61 829.07,422.58 829.65,422.54 830.23,422.51 830.81,422.48 831.38,422.45 831.96,422.42 832.54,422.39 833.12,422.37 833.70,422.35 834.27,422.33 834.85,422.31 835.43,422.30 836.01,422.28 836.58,422.27 837.16,422.26 837.74,422.25 838.32,422.25 838.90,422.24 839.47,422.24 840.05,422.24 840.63,422.24 841.21,422.24 841.78,422.25 842.36,422.26 842.94,422.26 843.52,422.27 844.10,422.29 844.67,422.30 845.25,422.31 845.83,422.33 846.41,422.35 846.98,422.37 847.56,422.39 848.14,422.41 848.72,422.44 849.30,422.46 849.87,422.49 850.45,422.52 851.03,422.55 851.61,422.58 852.18,422.62 852.76,422.65 853.34,422.69 853.92,422.73 854.50,422.77 855.07,422.81 855.65,422.85 856.23,422.90 856.81,422.94 857.38,422.99 857.96,423.04 858.54,423.09 859.12,423.14 859.70,423.19 860.27,423.24 860.85,423.30 861.43,423.35 862.01,423.41 862.58,423.47 863.16,423.53 863.74,423.59 864.32,423.65 864.90,423.72 865.47,423.78 866.05,423.85 866.63,423.92 867.21,423.99 867.79,424.05 868.36,424.13 868.94,424.20 869.52,424.27 870.10,424.34 870.67,424.42 871.25,424.50 871.83,424.57 872.41,424.65 872.99,424.73 873.56,424.81 874.14,424.89 874.72,424.98 875.30,425.06 875.87,425.14 876.45,425.23 877.03,425.32 877.61,425.40 878.19,425.49 878.76,425.58 879.34,425.67 879.92,425.76 880.50,425.85 881.07,425.95 881.65,426.04 882.23,426.13 882.81,426.23 883.39,426.33 883.96,426.42 884.54,426.52 885.12,426.62 885.70,426.72 886.27,426.82 886.85,426.92 887.43,427.02 888.01,427.12 888.59,427.22 889.16,427.32 889.74,427.43 890.32,427.53 890.90,427.64 891.47,427.74 892.05,427.85 892.63,427.96 893.21,428.06 893.79,428.17 894.36,428.28 894.94,428.39 895.52,428.50 896.10,428.61 896.67,428.72 897.25,428.83 897.83,428.94 898.41,429.05 898.99,429.16 899.56,429.27 900.14,429.39 900.72,429.50 901.30,429.61 901.88,429.73 902.45,429.84 903.03,429.96 903.61,430.07 904.19,430.18 904.76,430.30 905.34,430.42 905.92,430.53 906.50,430.65 907.08,430.76 907.65,430.88 908.23,431.00 908.81,431.11 909.39,431.23 909.96,431.35 910.54,431.46 911.12,431.58 911.70,431.70 912.28,431.82 912.85,431.93 913.43,432.05 914.01,432.17 914.59,432.29 915.16,432.41 915.74,432.52 916.32,432.64 916.90,432.76 917.48,432.88 918.05,433.00 918.63,433.11 919.21,433.23 919.79,433.35 920.36,433.47 920.94,433.58 921.52,433.70 922.10,433.82 922.68,433.94 923.25,434.05 923.83,434.17 924.41,434.29 924.99,434.41 925.56,434.52 926.14,434.64 926.72,434.76 927.30,434.87 927.88,434.99 928.45,435.10 929.03,435.22 929.61,435.34 930.19,435.45 930.76,435.57 931.34,435.68 931.92,435.80 932.50,435.91 933.08,436.02 933.65,436.14 934.23,436.25 934.81,436.37 935.39,436.48 935.97,436.59 936.54,436.70 937.12,436.82 937.70,436.93 938.28,437.04 938.85,437.15 939.43,437.26 940.01,437.37 940.59,437.48 941.17,437.59 941.74,437.70 942.32,437.81 942.90,437.92 943.48,438.03 944.05,438.14 944.63,438.24 945.21,438.35 945.79,438.46 946.37,438.56 946.94,438.67 947.52,438.78 948.10,438.88 948.68,438.99 949.25,439.09 949.83,439.19 950.41,439.30 950.99,439.40 951.57,439.50 952.14,439.61 952.72,439.71 953.30,439.81 953.88,439.91 954.45,440.01 955.03,440.11 955.61,440.21 956.19,440.31 956.77,440.41 957.34,440.51 957.92,440.61 958.50,440.70 959.08,440.80 959.65,440.90 960.23,440.99 960.81,441.09 961.39,441.18 961.97,441.28 962.54,441.37 963.12,441.47 963.70,441.56 964.28,441.65 964.85,441.75 965.43,441.84 966.01,441.93 966.59,442.02 967.17,442.11 967.74,442.20 968.32,442.29 968.90,442.38 969.48,442.47 970.06,442.56 970.63,442.64 971.21,442.73 971.79,442.82 972.37,442.90 972.94,442.99 973.52,443.07 974.10,443.16 974.68,443.24 975.26,443.33 975.83,443.41 976.41,443.49 976.99,443.57 977.57,443.66 978.14,443.74 978.72,443.82 979.30,443.90 979.88,443.98 980.46,444.06 981.03,444.14 981.61,444.22 982.19,444.29 982.77,444.37 983.34,444.45 983.92,444.53 984.50,444.60" stroke="#ff0a0a" stroke-width="1.8"/><polyline points="638.40,292.65 638.98,292.82 639.56,293.00 640.13,293.18 640.71,293.36 641.29,293.55 641.87,293.73 642.44,293.93 643.02,294.12 643.60,294.32 644.18,294.52 644.76,294.72 645.33,294.92 645.91,295.13 646.49,295.35 647.07,295.56 647.64,295.78 648.22,296.00 648.80,296.23 649.38,296.46 649.96,296.69 650.53,296.92 651.11,297.16 651.69,297.41 652.27,297.65 652.84,297.90 653.42,298.16 654.00,298.42 654.58,298.68 655.16,298.95 655.73,299.22 656.31,299.49 656.89,299.77 657.47,300.05 658.05,300.34 658.62,300.63 659.20,300.93 659.78,301.23 660.36,301.53 660.93,301.84 661.51,302.15 662.09,302.47 662.67,302.80 663.25,303.13 663.82,303.46 664.40,303.80 664.98,304.14 665.56,304.49 666.13,304.85 666.71,305.21 667.29,305.57 667.87,305.94 668.45,306.32 669.02,306.70 669.60,307.09 670.18,307.48 670.76,307.88 671.33,308.29 671.91,308.70 672.49,309.12 673.07,309.54 673.65,309.98 674.22,310.41 674.80,310.86 675.38,311.31 675.96,311.77 676.53,312.23 677.11,312.70 677.69,313.18 678.27,313.67 678.85,314.16 679.42,314.66 680.00,315.17 680.58,315.68 681.16,316.21 681.73,316.74 682.31,317.27 682.89,317.82 683.47,318.38 684.05,318.94 684.62,319.51 685.20,320.09 685.78,320.68 686.36,321.28 686.93,321.88 687.51,322.50 688.09,323.12 688.67,323.75 689.25,324.39 689.82,325.04 690.40,325.70 690.98,326.37 691.56,327.05 692.14,327.74 692.71,328.44 693.29,329.15 693.87,329.87 694.45,330.60 695.02,331.34 695.60,332.09 696.18,332.85 696.76,333.62 697.34,334.41 697.91,335.20 698.49,336.00 699.07,336.82 699.65,337.64 700.22,338.48 700.80,339.33 701.38,340.19 701.96,341.06 702.54,341.95 703.11,342.84 703.69,343.75 704.27,344.67 704.85,345.60 705.42,346.55 706.00,347.50 706.58,348.47 707.16,349.45 707.74,350.45 708.31,351.45 708.89,352.47 709.47,353.50 710.05,354.55 710.62,355.60 711.20,356.67 711.78,357.75 712.36,358.85 712.94,359.96 713.51,361.08 714.09,362.21 714.67,363.36 715.25,364.52 715.82,365.69 716.40,366.87 716.98,368.07 717.56,369.28 718.14,370.50 718.71,371.73 719.29,372.98 719.87,374.23 720.45,375.50 721.02,376.79 721.60,378.08 722.18,379.38 722.76,380.70 723.34,382.02 723.91,383.36 724.49,384.70 725.07,386.06 725.65,387.42 726.23,388.79 726.80,390.17 727.38,391.56 727.96,392.95 728.54,394.35 729.11,395.75 729.69,397.16 730.27,398.56 730.85,399.98 731.43,401.39 732.00,402.80 732.58,404.20 733.16,405.60 733.74,407.00 734.31,408.38 734.89,409.76 735.47,411.12 736.05,412.46 736.63,413.78 737.20,415.08 737.78,416.34 738.36,417.57 738.94,418.76 739.51,419.91 740.09,421.00 740.67,422.03 741.25,423.00 741.83,423.89 742.40,424.69 742.98,425.40 743.56,426.01 744.14,426.50 744.71,426.88 745.29,427.13 745.87,427.25 746.45,427.24 747.03,427.09 747.60,426.81 748.18,426.40 748.76,425.86 749.34,425.19 749.91,424.42 750.49,423.53 751.07,422.55 751.65,421.48 752.23,420.33 752.80,419.10 753.38,417.81 753.96,416.45 754.54,415.04 755.11,413.58 755.69,412.08 756.27,410.54 756.85,408.97 757.43,407.37 758.00,405.74 758.58,404.08 759.16,402.41 759.74,400.72 760.32,399.01 760.89,397.29 761.47,395.56 762.05,393.81 762.63,392.06 763.20,390.31 763.78,388.55 764.36,386.79 764.94,385.02 765.52,383.26 766.09,381.49 766.67,379.73 767.25,377.97 767.83,376.21 768.40,374.46 768.98,372.71 769.56,370.97 770.14,369.23 770.72,367.51 771.29,365.78 771.87,364.07 772.45,362.37 773.03,360.68 773.60,359.00 774.18,357.33 774.76,355.67 775.34,354.02 775.92,352.38 776.49,350.76 777.07,349.15 777.65,347.55 778.23,345.97 778.80,344.40 779.38,342.85 779.96,341.31 780.54,339.78 781.12,338.27 781.69,336.78 782.27,335.30 782.85,333.84 783.43,332.39 784.00,330.96 784.58,329.55 785.16,328.15 785.74,326.77 786.32,325.41 786.89,324.06 787.47,322.73 788.05,321.42 788.63,320.13 789.20,318.85 789.78,317.59 790.36,316.35 790.94,315.13 791.52,313.92 792.09,312.73 792.67,311.56 793.25,310.41 793.83,309.27 794.41,308.15 794.98,307.05 795.56,305.97 796.14,304.90 796.72,303.85 797.29,302.82 797.87,301.81 798.45,300.82 799.03,299.84 799.61,298.88 800.18,297.93 800.76,297.01 801.34,296.10 801.92,295.20 802.49,294.33 803.07,293.47 803.65,292.63 804.23,291.80 804.81,290.99 805.38,290.20 805.96,289.43 806.54,288.67 807.12,287.92 807.69,287.20 808.27,286.49 808.85,285.79 809.43,285.11 810.01,284.45 810.58,283.80 811.16,283.16 811.74,282.55 812.32,281.94 812.89,281.35 813.47,280.78 814.05,280.22 814.63,279.68 815.21,279.15 815.78,278.64 816.36,278.14 816.94,277.65 817.52,277.18 818.09,276.72 818.67,276.28 819.25,275.85 819.83,275.43 820.41,275.03 820.98,274.64 821.56,274.27 822.14,273.90 822.72,273.55 823.29,273.22 823.87,272.89 824.45,272.58 825.03,272.29 825.61,272.00 826.18,271.73 826.76,271.47 827.34,271.22 827.92,270.98 828.49,270.76 829.07,270.54 829.65,270.34 830.23,270.15 830.81,269.98 831.38,269.81 831.96,269.66 832.54,269.52 833.12,269.38 833.70,269.26 834.27,269.15 834.85,269.06 835.43,268.97 836.01,268.89 836.58,268.83 837.16,268.77 837.74,268.73 838.32,268.69 838.90,268.67 839.47,268.65 840.05,268.65 840.63,268.66 841.21,268.67 841.78,268.70 842.36,268.74 842.94,268.78 843.52,268.84 844.10,268.90 844.67,268.98 845.25,269.06 845.83,269.16 846.41,269.26 846.98,269.37 847.56,269.49 848.14,269.62 848.72,269.76 849.30,269.91 849.87,270.07 850.45,270.23 851.03,270.41 851.61,270.59 852.18,270.78 852.76,270.98 853.34,271.19 853.92,271.41 854.50,271.63 855.07,271.87 855.65,272.11 856.23,272.36 856.81,272.62 857.38,272.88 857.96,273.15 858.54,273.44 859.12,273.72 859.70,274.02 860.27,274.32 860.85,274.63 861.43,274.95 862.01,275.28 862.58,275.61 863.16,275.95 863.74,276.30 864.32,276.65 864.90,277.01 865.47,277.38 866.05,277.75 866.63,278.14 867.21,278.52 867.79,278.92 868.36,279.32 868.94,279.73 869.52,280.14 870.10,280.56 870.67,280.99 871.25,281.42 871.83,281.86 872.41,282.30 872.99,282.75 873.56,283.21 874.14,283.67 874.72,284.14 875.30,284.61 875.87,285.09 876.45,285.57 877.03,286.06 877.61,286.55 878.19,287.05 878.76,287.56 879.34,288.07 879.92,288.58 880.50,289.10 881.07,289.63 881.65,290.16 882.23,290.69 882.81,291.23 883.39,291.77 883.96,292.32 884.54,292.87 885.12,293.42 885.70,293.98 886.27,294.55 886.85,295.12 887.43,295.69 888.01,296.26 888.59,296.84 889.16,297.43 889.74,298.01 890.32,298.60 890.90,299.20 891.47,299.79 892.05,300.39 892.63,301.00 893.21,301.60 893.79,302.21 894.36,302.83 894.94,303.44 895.52,304.06 896.10,304.68 896.67,305.30 897.25,305.93 897.83,306.56 898.41,307.19 898.99,307.82 899.56,308.46 900.14,309.10 900.72,309.74 901.30,310.38 901.88,311.02 902.45,311.67 903.03,312.32 903.61,312.96 904.19,313.61 904.76,314.27 905.34,314.92 905.92,315.58 906.50,316.23 907.08,316.89 907.65,317.55 908.23,318.21 908.81,318.87 909.39,319.53 909.96,320.19 910.54,320.86 911.12,321.52 911.70,322.19 912.28,322.85 912.85,323.52 913.43,324.18 914.01,324.85 914.59,325.52 915.16,326.18 915.74,326.85 916.32,327.52 916.90,328.19 917.48,328.85 918.05,329.52 918.63,330.19 919.21,330.86 919.79,331.52 920.36,332.19 920.94,332.86 921.52,333.52 922.10,334.19 922.68,334.85 923.25,335.52 923.83,336.18 924.41,336.84 924.99,337.51 925.56,338.17 926.14,338.83 926.72,339.49 927.30,340.15 927.88,340.80 928.45,341.46 929.03,342.11 929.61,342.77 930.19,343.42 930.76,344.07 931.34,344.72 931.92,345.37 932.50,346.02 933.08,346.67 933.65,347.31 934.23,347.95 934.81,348.60 935.39,349.24 935.97,349.87 936.54,350.51 937.12,351.14 937.70,351.78 938.28,352.41 938.85,353.04 939.43,353.67 940.01,354.29 940.59,354.92 941.17,355.54 941.74,356.16 942.32,356.77 942.90,357.39 943.48,358.00 944.05,358.62 944.63,359.22 945.21,359.83 945.79,360.44 946.37,361.04 946.94,361.64 947.52,362.24 948.10,362.83 948.68,363.43 949.25,364.02 949.83,364.61 950.41,365.20 950.99,365.78 951.57,366.36 952.14,366.94 952.72,367.52 953.30,368.09 953.88,368.67 954.45,369.23 955.03,369.80 955.61,370.37 956.19,370.93 956.77,371.49 957.34,372.04 957.92,372.60 958.50,373.15 959.08,373.70 959.65,374.25 960.23,374.79 960.81,375.33 961.39,375.87 961.97,376.41 962.54,376.94 963.12,377.47 963.70,378.00 964.28,378.52 964.85,379.05 965.43,379.57 966.01,380.08 966.59,380.60 967.17,381.11 967.74,381.62 968.32,382.13 968.90,382.63 969.48,383.13 970.06,383.63 970.63,384.13 971.21,384.62 971.79,385.11 972.37,385.60 972.94,386.08 973.52,386.57 974.10,387.05 974.68,387.52 975.26,388.00 975.83,388.47 976.41,388.94 976.99,389.40 977.57,389.87 978.14,390.33 978.72,390.78 979.30,391.24 979.88,391.69 980.46,392.14 981.03,392.59 981.61,393.03 982.19,393.48 982.77,393.92 983.34,394.35 983.92,394.79 984.50,395.22" stroke="#5c5c5c" stroke-width="1.6"/><polyline points="638.40,300.29 638.98,300.57 639.56,300.85 640.13,301.13 640.71,301.42 641.29,301.71 641.87,302.01 642.44,302.31 643.02,302.61 643.60,302.92 644.18,303.24 644.76,303.55 645.33,303.88 645.91,304.20 646.49,304.53 647.07,304.87 647.64,305.21 648.22,305.55 648.80,305.90 649.38,306.26 649.96,306.62 650.53,306.98 651.11,307.35 651.69,307.73 652.27,308.11 652.84,308.49 653.42,308.88 654.00,309.28 654.58,309.68 655.16,310.09 655.73,310.50 656.31,310.91 656.89,311.34 657.47,311.77 658.05,312.20 658.62,312.64 659.20,313.09 659.78,313.54 660.36,314.00 660.93,314.46 661.51,314.94 662.09,315.41 662.67,315.90 663.25,316.39 663.82,316.88 664.40,317.38 664.98,317.89 665.56,318.41 666.13,318.93 666.71,319.46 667.29,320.00 667.87,320.54 668.45,321.09 669.02,321.64 669.60,322.21 670.18,322.78 670.76,323.36 671.33,323.94 671.91,324.53 672.49,325.13 673.07,325.74 673.65,326.35 674.22,326.97 674.80,327.60 675.38,328.24 675.96,328.88 676.53,329.54 677.11,330.20 677.69,330.86 678.27,331.54 678.85,332.22 679.42,332.91 680.00,333.61 680.58,334.32 681.16,335.03 681.73,335.75 682.31,336.48 682.89,337.22 683.47,337.97 684.05,338.72 684.62,339.48 685.20,340.25 685.78,341.03 686.36,341.82 686.93,342.61 687.51,343.41 688.09,344.22 688.67,345.04 689.25,345.87 689.82,346.70 690.40,347.55 690.98,348.40 691.56,349.25 692.14,350.12 692.71,350.99 693.29,351.87 693.87,352.76 694.45,353.66 695.02,354.56 695.60,355.47 696.18,356.39 696.76,357.31 697.34,358.25 697.91,359.19 698.49,360.13 699.07,361.09 699.65,362.04 700.22,363.01 700.80,363.98 701.38,364.96 701.96,365.94 702.54,366.93 703.11,367.93 703.69,368.93 704.27,369.94 704.85,370.95 705.42,371.96 706.00,372.98 706.58,374.01 707.16,375.03 707.74,376.06 708.31,377.10 708.89,378.14 709.47,379.18 710.05,380.22 710.62,381.26 711.20,382.31 711.78,383.36 712.36,384.40 712.94,385.45 713.51,386.50 714.09,387.55 714.67,388.60 715.25,389.64 715.82,390.69 716.40,391.73 716.98,392.77 717.56,393.81 718.14,394.84 718.71,395.87 719.29,396.89 719.87,397.91 720.45,398.93 721.02,399.93 721.60,400.93 722.18,401.92 722.76,402.90 723.34,403.88 723.91,404.84 724.49,405.80 725.07,406.74 725.65,407.67 726.23,408.59 726.80,409.50 727.38,410.39 727.96,411.27 728.54,412.13 729.11,412.97 729.69,413.80 730.27,414.62 730.85,415.41 731.43,416.19 732.00,416.94 732.58,417.68 733.16,418.39 733.74,419.08 734.31,419.75 734.89,420.40 735.47,421.02 736.05,421.61 736.63,422.18 737.20,422.73 737.78,423.25 738.36,423.73 738.94,424.19 739.51,424.63 740.09,425.03 740.67,425.40 741.25,425.74 741.83,426.04 742.40,426.32 742.98,426.56 743.56,426.77 744.14,426.94 744.71,427.08 745.29,427.18 745.87,427.25 746.45,427.28 747.03,427.28 747.60,427.24 748.18,427.16 748.76,427.04 749.34,426.88 749.91,426.69 750.49,426.46 751.07,426.19 751.65,425.88 752.23,425.53 752.80,425.15 753.38,424.72 753.96,424.26 754.54,423.76 755.11,423.21 755.69,422.63 756.27,422.01 756.85,421.36 757.43,420.66 758.00,419.93 758.58,419.16 759.16,418.35 759.74,417.51 760.32,416.63 760.89,415.71 761.47,414.76 762.05,413.77 762.63,412.75 763.20,411.70 763.78,410.61 764.36,409.49 764.94,408.34 765.52,407.16 766.09,405.95 766.67,404.71 767.25,403.44 767.83,402.15 768.40,400.82 768.98,399.48 769.56,398.10 770.14,396.71 770.72,395.29 771.29,393.84 771.87,392.38 772.45,390.90 773.03,389.39 773.60,387.87 774.18,386.33 774.76,384.78 775.34,383.21 775.92,381.62 776.49,380.03 777.07,378.42 777.65,376.80 778.23,375.16 778.80,373.52 779.38,371.88 779.96,370.22 780.54,368.56 781.12,366.89 781.69,365.22 782.27,363.54 782.85,361.87 783.43,360.19 784.00,358.51 784.58,356.83 785.16,355.15 785.74,353.47 786.32,351.80 786.89,350.13 787.47,348.47 788.05,346.81 788.63,345.15 789.20,343.51 789.78,341.87 790.36,340.24 790.94,338.61 791.52,337.00 792.09,335.40 792.67,333.81 793.25,332.23 793.83,330.66 794.41,329.11 794.98,327.57 795.56,326.04 796.14,324.52 796.72,323.03 797.29,321.54 797.87,320.08 798.45,318.63 799.03,317.19 799.61,315.78 800.18,314.38 800.76,313.00 801.34,311.63 801.92,310.29 802.49,308.96 803.07,307.66 803.65,306.37 804.23,305.10 804.81,303.86 805.38,302.63 805.96,301.42 806.54,300.24 807.12,299.07 807.69,297.93 808.27,296.81 808.85,295.71 809.43,294.63 810.01,293.57 810.58,292.54 811.16,291.52 811.74,290.53 812.32,289.56 812.89,288.61 813.47,287.69 814.05,286.79 814.63,285.91 815.21,285.05 815.78,284.21 816.36,283.40 816.94,282.61 817.52,281.84 818.09,281.10 818.67,280.37 819.25,279.67 819.83,279.00 820.41,278.34 820.98,277.71 821.56,277.10 822.14,276.51 822.72,275.94 823.29,275.40 823.87,274.88 824.45,274.38 825.03,273.90 825.61,273.45 826.18,273.01 826.76,272.60 827.34,272.21 827.92,271.84 828.49,271.50 829.07,271.17 829.65,270.87 830.23,270.58 830.81,270.32 831.38,270.08 831.96,269.86 832.54,269.66 833.12,269.48 833.70,269.32 834.27,269.19 834.85,269.07 835.43,268.97 836.01,268.89 836.58,268.83 837.16,268.80 837.74,268.78 838.32,268.78 838.90,268.80 839.47,268.84 840.05,268.89 840.63,268.97 841.21,269.07 841.78,269.18 842.36,269.31 842.94,269.46 843.52,269.63 844.10,269.82 844.67,270.02 845.25,270.24 845.83,270.48 846.41,270.73 846.98,271.01 847.56,271.30 848.14,271.60 848.72,271.93 849.30,272.26 849.87,272.62 850.45,272.99 851.03,273.38 851.61,273.78 852.18,274.20 852.76,274.63 853.34,275.08 853.92,275.54 854.50,276.02 855.07,276.51 855.65,277.02 856.23,277.54 856.81,278.07 857.38,278.62 857.96,279.18 858.54,279.75 859.12,280.34 859.70,280.94 860.27,281.56 860.85,282.18 861.43,282.82 862.01,283.47 862.58,284.13 863.16,284.81 863.74,285.49 864.32,286.19 864.90,286.90 865.47,287.61 866.05,288.34 866.63,289.08 867.21,289.83 867.79,290.59 868.36,291.36 868.94,292.14 869.52,292.93 870.10,293.73 870.67,294.54 871.25,295.35 871.83,296.18 872.41,297.01 872.99,297.85 873.56,298.70 874.14,299.55 874.72,300.42 875.30,301.29 875.87,302.17 876.45,303.05 877.03,303.94 877.61,304.84 878.19,305.75 878.76,306.66 879.34,307.57 879.92,308.49 880.50,309.42 881.07,310.35 881.65,311.29 882.23,312.23 882.81,313.18 883.39,314.13 883.96,315.08 884.54,316.04 885.12,317.00 885.70,317.97 886.27,318.94 886.85,319.91 887.43,320.89 888.01,321.86 888.59,322.84 889.16,323.83 889.74,324.81 890.32,325.80 890.90,326.78 891.47,327.77 892.05,328.76 892.63,329.76 893.21,330.75 893.79,331.74 894.36,332.74 894.94,333.73 895.52,334.73 896.10,335.72 896.67,336.72 897.25,337.71 897.83,338.70 898.41,339.70 898.99,340.69 899.56,341.68 900.14,342.67 900.72,343.66 901.30,344.65 901.88,345.63 902.45,346.62 903.03,347.60 903.61,348.58 904.19,349.56 904.76,350.53 905.34,351.51 905.92,352.48 906.50,353.45 907.08,354.41 907.65,355.37 908.23,356.33 908.81,357.29 909.39,358.24 909.96,359.19 910.54,360.13 911.12,361.07 911.70,362.01 912.28,362.94 912.85,363.87 913.43,364.80 914.01,365.72 914.59,366.64 915.16,367.55 915.74,368.46 916.32,369.36 916.90,370.26 917.48,371.15 918.05,372.04 918.63,372.92 919.21,373.80 919.79,374.67 920.36,375.54 920.94,376.41 921.52,377.26 922.10,378.12 922.68,378.96 923.25,379.80 923.83,380.64 924.41,381.47 924.99,382.29 925.56,383.11 926.14,383.93 926.72,384.73 927.30,385.53 927.88,386.33 928.45,387.12 929.03,387.90 929.61,388.68 930.19,389.45 930.76,390.22 931.34,390.98 931.92,391.73 932.50,392.48 933.08,393.22 933.65,393.96 934.23,394.68 934.81,395.41 935.39,396.12 935.97,396.83 936.54,397.54 937.12,398.24 937.70,398.93 938.28,399.62 938.85,400.29 939.43,400.97 940.01,401.64 940.59,402.30 941.17,402.95 941.74,403.60 942.32,404.24 942.90,404.88 943.48,405.51 944.05,406.13 944.63,406.75 945.21,407.36 945.79,407.97 946.37,408.57 946.94,409.16 947.52,409.75 948.10,410.33 948.68,410.91 949.25,411.48 949.83,412.04 950.41,412.60 950.99,413.15 951.57,413.70 952.14,414.24 952.72,414.77 953.30,415.30 953.88,415.82 954.45,416.34 955.03,416.85 955.61,417.36 956.19,417.86 956.77,418.35 957.34,418.84 957.92,419.32 958.50,419.80 959.08,420.27 959.65,420.74 960.23,421.20 960.81,421.66 961.39,422.11 961.97,422.56 962.54,423.00 963.12,423.43 963.70,423.86 964.28,424.29 964.85,424.71 965.43,425.12 966.01,425.54 966.59,425.94 967.17,426.34 967.74,426.74 968.32,427.13 968.90,427.51 969.48,427.89 970.06,428.27 970.63,428.64 971.21,429.01 971.79,429.37 972.37,429.73 972.94,430.09 973.52,430.44 974.10,430.78 974.68,431.12 975.26,431.46 975.83,431.79 976.41,432.12 976.99,432.44 977.57,432.76 978.14,433.08 978.72,433.39 979.30,433.70 979.88,434.00 980.46,434.30 981.03,434.59 981.61,434.89 982.19,435.17 982.77,435.46 983.34,435.74 983.92,436.01 984.50,436.29" stroke="#0a0aff" stroke-width="1.75"/></g><text transform="translate(635.40,458.50) scale(0.815,1)" text-anchor="end" fill="#0c0c0c">0</text><text transform="translate(635.40,380.58) scale(0.815,1)" text-anchor="end" fill="#0c0c0c">0,5</text><text transform="translate(635.40,303.35) scale(0.815,1)" text-anchor="end" fill="#0c0c0c">1</text><text transform="translate(635.40,226.12) scale(0.815,1)" text-anchor="end" fill="#0c0c0c">1,5</text><text transform="translate(635.40,148.90) scale(0.815,1)" text-anchor="end" fill="#0c0c0c">2</text><text transform="translate(996.00,457.80) scale(0.815,1)" text-anchor="middle" fill="#0c0c0c">0</text><text transform="translate(996.00,380.58) scale(0.815,1)" text-anchor="middle" fill="#0c0c0c">1</text><text transform="translate(996.00,303.35) scale(0.815,1)" text-anchor="middle" fill="#0c0c0c">2</text><text transform="translate(996.00,226.12) scale(0.815,1)" text-anchor="middle" fill="#0c0c0c">3</text><text transform="translate(996.00,148.90) scale(0.815,1)" text-anchor="middle" fill="#0c0c0c">4</text><text transform="translate(690.49,464.00) scale(0.815,1)" text-anchor="middle" fill="#0c0c0c">20</text><text transform="translate(759.36,464.00) scale(0.815,1)" text-anchor="middle" fill="#0c0c0c">50</text><text transform="translate(811.45,464.00) scale(0.815,1)" text-anchor="middle" fill="#0c0c0c">100</text><text transform="translate(863.54,464.00) scale(0.815,1)" text-anchor="middle" fill="#0c0c0c">200</text><text transform="translate(932.41,464.00) scale(0.815,1)" text-anchor="middle" fill="#0c0c0c">500</text><text transform="translate(633.90,464.00) scale(0.815,1)" text-anchor="start" fill="#0c0c0c">10Hz</text><text transform="translate(988.80,464.00) scale(0.815,1)" text-anchor="end" fill="#0c0c0c">1k</text><text transform="translate(811.45,143.70) scale(0.954,1)" text-anchor="middle" fill="#1a1a1a">Power</text><text transform="translate(639.60,142.90) scale(0.815,1)" text-anchor="start" fill="#0c0c0c">W</text><text transform="translate(983.30,142.90) scale(0.815,1)" text-anchor="end" fill="#0c0c0c">A</text><text transform="translate(842.00,267.00) scale(0.856,1)" text-anchor="start" fill="#5c5c5c">Pmax 1,2 VA  @ 146,7 Hz</text></svg>
<svg style="left:1012px;top:133px" width="400" height="333" viewBox="1012 133 400 333" font-family="Liberation Sans, sans-serif" font-size="9.5"><rect x="1012" y="133" width="400" height="333" fill="#fff"/><path d="M1036.2 445.55H1384.5M1036.2 435.89H1384.5M1036.2 426.24H1384.5M1036.2 406.93H1384.5M1036.2 397.28H1384.5M1036.2 387.63H1384.5M1036.2 368.32H1384.5M1036.2 358.67H1384.5M1036.2 349.02H1384.5M1036.2 329.71H1384.5M1036.2 320.06H1384.5M1036.2 310.40H1384.5M1036.2 291.10H1384.5M1036.2 281.44H1384.5M1036.2 271.79H1384.5M1036.2 252.48H1384.5M1036.2 242.83H1384.5M1036.2 233.18H1384.5M1036.2 213.87H1384.5M1036.2 204.22H1384.5M1036.2 194.57H1384.5M1036.2 175.26H1384.5M1036.2 165.61H1384.5M1036.2 155.95H1384.5" stroke="#e3e3e3" stroke-width="1" fill="none"/><path d="M1088.30 146.3V455.2M1118.99 146.3V455.2M1140.76 146.3V455.2M1157.65 146.3V455.2M1171.44 146.3V455.2M1183.11 146.3V455.2M1193.21 146.3V455.2M1202.13 146.3V455.2M1262.55 146.3V455.2M1293.24 146.3V455.2M1315.01 146.3V455.2M1331.90 146.3V455.2M1345.69 146.3V455.2M1357.36 146.3V455.2M1367.46 146.3V455.2M1376.38 146.3V455.2" stroke="#e2e2e2" stroke-width="1" fill="none"/><path d="M1036.2 416.59H1384.5M1036.2 377.98H1384.5M1036.2 339.36H1384.5M1036.2 300.75H1384.5M1036.2 262.14H1384.5M1036.2 223.53H1384.5M1036.2 184.91H1384.5" stroke="#8a8a8a" stroke-width="1" fill="none"/><path d="M1210.10 146.3V455.2" stroke="#8a8a8a" stroke-width="1" fill="none"/><rect x="1036.2" y="146.3" width="348.29999999999995" height="308.9" fill="none" stroke="#7a7a7a" stroke-width="1.05"/><clipPath id="c1012_133"><rect x="1035.7" y="145.8" width="349.29999999999995" height="310.09999999999997"/></clipPath><g clip-path="url(#c1012_133)" fill="none" stroke-linejoin="round"><polyline points="1036.20,427.20 1036.78,426.80 1037.36,426.39 1037.94,425.98 1038.53,425.56 1039.11,425.13 1039.69,424.70 1040.27,424.26 1040.85,423.81 1041.43,423.36 1042.01,422.89 1042.60,422.43 1043.18,421.95 1043.76,421.47 1044.34,420.98 1044.92,420.48 1045.50,419.98 1046.08,419.47 1046.67,418.95 1047.25,418.42 1047.83,417.88 1048.41,417.34 1048.99,416.79 1049.57,416.23 1050.16,415.66 1050.74,415.08 1051.32,414.49 1051.90,413.90 1052.48,413.29 1053.06,412.68 1053.64,412.06 1054.23,411.43 1054.81,410.78 1055.39,410.13 1055.97,409.47 1056.55,408.80 1057.13,408.12 1057.71,407.43 1058.30,406.73 1058.88,406.01 1059.46,405.29 1060.04,404.56 1060.62,403.81 1061.20,403.06 1061.78,402.29 1062.37,401.51 1062.95,400.72 1063.53,399.92 1064.11,399.10 1064.69,398.28 1065.27,397.44 1065.85,396.59 1066.44,395.72 1067.02,394.85 1067.60,393.96 1068.18,393.06 1068.76,392.14 1069.34,391.21 1069.93,390.27 1070.51,389.31 1071.09,388.34 1071.67,387.35 1072.25,386.36 1072.83,385.34 1073.41,384.31 1074.00,383.27 1074.58,382.21 1075.16,381.13 1075.74,380.05 1076.32,378.94 1076.90,377.82 1077.48,376.68 1078.07,375.53 1078.65,374.36 1079.23,373.17 1079.81,371.96 1080.39,370.74 1080.97,369.50 1081.55,368.25 1082.14,366.98 1082.72,365.68 1083.30,364.37 1083.88,363.05 1084.46,361.70 1085.04,360.33 1085.62,358.95 1086.21,357.55 1086.79,356.13 1087.37,354.68 1087.95,353.22 1088.53,351.74 1089.11,350.24 1089.70,348.72 1090.28,347.18 1090.86,345.62 1091.44,344.03 1092.02,342.43 1092.60,340.80 1093.18,339.16 1093.77,337.49 1094.35,335.80 1094.93,334.09 1095.51,332.36 1096.09,330.60 1096.67,328.83 1097.25,327.03 1097.84,325.21 1098.42,323.36 1099.00,321.50 1099.58,319.61 1100.16,317.70 1100.74,315.76 1101.32,313.80 1101.91,311.82 1102.49,309.82 1103.07,307.79 1103.65,305.74 1104.23,303.66 1104.81,301.57 1105.39,299.45 1105.98,297.30 1106.56,295.13 1107.14,292.94 1107.72,290.73 1108.30,288.49 1108.88,286.23 1109.47,283.95 1110.05,281.64 1110.63,279.31 1111.21,276.96 1111.79,274.58 1112.37,272.18 1112.95,269.76 1113.54,267.32 1114.12,264.86 1114.70,262.37 1115.28,259.86 1115.86,257.34 1116.44,254.79 1117.02,252.22 1117.61,249.63 1118.19,247.01 1118.77,244.38 1119.35,241.73 1119.93,239.07 1120.51,236.38 1121.09,233.67 1121.68,230.95 1122.26,228.21 1122.84,225.46 1123.42,222.69 1124.00,219.90 1124.58,217.10 1125.16,214.28 1125.75,211.45 1126.33,208.61 1126.91,205.75 1127.49,202.89 1128.07,200.01 1128.65,197.12 1129.24,194.22 1129.82,191.32 1130.40,188.40 1130.98,185.48 1131.56,182.55 1132.14,179.62 1132.72,176.68 1133.31,173.74 1133.89,170.80 1134.47,167.85 1135.05,164.90 1135.63,161.95 1136.21,159.01 1136.79,156.06 1137.38,153.12 1137.96,150.18 1138.54,147.24 1139.12,144.32 1139.70,141.39 1140.28,138.48 1140.86,135.57 1141.45,132.67 1142.03,129.78 1142.61,126.90 1143.19,124.04 1143.77,121.19 1144.35,118.35 1144.93,115.52 1145.52,112.71 1146.10,109.92 1146.68,107.15 1147.26,104.39 1147.84,101.66 1148.42,98.94 1149.01,96.24 1149.59,93.57 1150.17,90.91 1150.75,88.28 1151.33,85.68 1151.91,83.10 1152.49,80.54 1153.08,78.01 1153.66,75.50 1154.24,73.02 1154.82,70.57 1155.40,68.15 1155.98,65.75 1156.56,63.39 1157.15,61.05 1157.73,58.74 1158.31,56.47 1158.89,54.22 1159.47,52.00 1160.05,49.82 1160.63,47.66 1161.22,45.54 1161.80,43.45 1162.38,41.39 1162.96,39.36 1163.54,37.37 1164.12,35.40 1164.70,33.47 1165.29,31.57 1165.87,29.71 1166.45,27.87 1167.03,26.07 1167.61,24.30 1168.19,22.56 1168.77,20.85 1169.36,19.18 1169.94,17.54 1170.52,15.92 1171.10,14.34 1171.68,12.79 1172.26,11.27 1172.85,9.79 1173.43,8.33 1174.01,6.90 1174.59,5.50 1175.17,4.13 1175.75,2.79 1176.33,1.48 1176.92,0.19 1177.50,-1.06 1178.08,-2.29 1178.66,-3.49 1179.24,-4.67 1179.82,-5.82 1180.40,-6.94 1180.99,-8.03 1181.57,-9.10 1182.15,-10.15 1182.73,-11.17 1183.31,-12.17 1183.89,-13.14 1184.47,-14.09 1185.06,-15.02 1185.64,-15.92 1186.22,-16.81 1186.80,-17.67 1187.38,-18.51 1187.96,-19.33 1188.54,-20.13 1189.13,-20.91 1189.71,-21.66 1190.29,-22.40 1190.87,-23.13 1191.45,-23.83 1192.03,-24.51 1192.62,-25.18 1193.20,-25.83 1193.78,-26.46 1194.36,-27.08 1194.94,-27.68 1195.52,-28.27 1196.10,-28.84 1196.69,-29.39 1197.27,-29.93 1197.85,-30.45 1198.43,-30.97 1199.01,-31.46 1199.59,-31.95 1200.17,-32.42 1200.76,-32.88 1201.34,-33.32 1201.92,-33.76 1202.50,-34.18 1203.08,-34.59 1203.66,-34.99 1204.24,-35.38 1204.83,-35.76 1205.41,-36.12 1205.99,-36.48 1206.57,-36.83 1207.15,-37.17 1207.73,-37.50 1208.31,-37.82 1208.90,-38.13 1209.48,-38.43 1210.06,-38.72 1210.64,-39.01 1211.22,-39.28 1211.80,-39.55 1212.39,-39.82 1212.97,-40.07 1213.55,-40.32 1214.13,-40.56 1214.71,-40.79 1215.29,-41.02 1215.87,-41.24 1216.46,-41.45 1217.04,-41.66 1217.62,-41.86 1218.20,-42.06 1218.78,-42.25 1219.36,-42.44 1219.94,-42.62 1220.53,-42.79 1221.11,-42.96 1221.69,-43.13 1222.27,-43.29 1222.85,-43.45 1223.43,-43.60 1224.01,-43.75 1224.60,-43.89 1225.18,-44.03 1225.76,-44.16 1226.34,-44.29 1226.92,-44.42 1227.50,-44.55 1228.08,-44.67 1228.67,-44.78 1229.25,-44.90 1229.83,-45.01 1230.41,-45.11 1230.99,-45.22 1231.57,-45.32 1232.16,-45.42 1232.74,-45.51 1233.32,-45.61 1233.90,-45.70 1234.48,-45.78 1235.06,-45.87 1235.64,-45.95 1236.23,-46.03 1236.81,-46.11 1237.39,-46.18 1237.97,-46.26 1238.55,-46.33 1239.13,-46.40 1239.71,-46.47 1240.30,-46.53 1240.88,-46.59 1241.46,-46.66 1242.04,-46.72 1242.62,-46.77 1243.20,-46.83 1243.78,-46.89 1244.37,-46.94 1244.95,-46.99 1245.53,-47.04 1246.11,-47.09 1246.69,-47.14 1247.27,-47.18 1247.85,-47.23 1248.44,-47.27 1249.02,-47.32 1249.60,-47.36 1250.18,-47.40 1250.76,-47.44 1251.34,-47.47 1251.93,-47.51 1252.51,-47.55 1253.09,-47.58 1253.67,-47.61 1254.25,-47.65 1254.83,-47.68 1255.41,-47.71 1256.00,-47.74 1256.58,-47.77 1257.16,-47.80 1257.74,-47.82 1258.32,-47.85 1258.90,-47.88 1259.48,-47.90 1260.07,-47.93 1260.65,-47.95 1261.23,-47.97 1261.81,-48.00 1262.39,-48.02 1262.97,-48.04 1263.55,-48.06 1264.14,-48.08 1264.72,-48.10 1265.30,-48.12 1265.88,-48.14 1266.46,-48.15 1267.04,-48.17 1267.62,-48.19 1268.21,-48.21 1268.79,-48.22 1269.37,-48.24 1269.95,-48.25 1270.53,-48.27 1271.11,-48.28 1271.69,-48.30 1272.28,-48.31 1272.86,-48.32 1273.44,-48.34 1274.02,-48.35 1274.60,-48.36 1275.18,-48.37 1275.77,-48.38 1276.35,-48.39 1276.93,-48.41 1277.51,-48.42 1278.09,-48.43 1278.67,-48.44 1279.25,-48.45 1279.84,-48.46 1280.42,-48.46 1281.00,-48.47 1281.58,-48.48 1282.16,-48.49 1282.74,-48.50 1283.32,-48.51 1283.91,-48.52 1284.49,-48.52 1285.07,-48.53 1285.65,-48.54 1286.23,-48.54 1286.81,-48.55 1287.39,-48.56 1287.98,-48.56 1288.56,-48.57 1289.14,-48.58 1289.72,-48.58 1290.30,-48.59 1290.88,-48.59 1291.46,-48.60 1292.05,-48.61 1292.63,-48.61 1293.21,-48.62 1293.79,-48.62 1294.37,-48.63 1294.95,-48.63 1295.54,-48.63 1296.12,-48.64 1296.70,-48.64 1297.28,-48.65 1297.86,-48.65 1298.44,-48.66 1299.02,-48.66 1299.61,-48.66 1300.19,-48.67 1300.77,-48.67 1301.35,-48.67 1301.93,-48.68 1302.51,-48.68 1303.09,-48.68 1303.68,-48.69 1304.26,-48.69 1304.84,-48.69 1305.42,-48.70 1306.00,-48.70 1306.58,-48.70 1307.16,-48.71 1307.75,-48.71 1308.33,-48.71 1308.91,-48.71 1309.49,-48.72 1310.07,-48.72 1310.65,-48.72 1311.23,-48.72 1311.82,-48.72 1312.40,-48.73 1312.98,-48.73 1313.56,-48.73 1314.14,-48.73 1314.72,-48.74 1315.31,-48.74 1315.89,-48.74 1316.47,-48.74 1317.05,-48.74 1317.63,-48.74 1318.21,-48.75 1318.79,-48.75 1319.38,-48.75 1319.96,-48.75 1320.54,-48.75 1321.12,-48.75 1321.70,-48.76 1322.28,-48.76 1322.86,-48.76 1323.45,-48.76 1324.03,-48.76 1324.61,-48.76 1325.19,-48.76 1325.77,-48.77 1326.35,-48.77 1326.93,-48.77 1327.52,-48.77 1328.10,-48.77 1328.68,-48.77 1329.26,-48.77 1329.84,-48.77 1330.42,-48.77 1331.00,-48.78 1331.59,-48.78 1332.17,-48.78 1332.75,-48.78 1333.33,-48.78 1333.91,-48.78 1334.49,-48.78 1335.08,-48.78 1335.66,-48.78 1336.24,-48.78 1336.82,-48.78 1337.40,-48.79 1337.98,-48.79 1338.56,-48.79 1339.15,-48.79 1339.73,-48.79 1340.31,-48.79 1340.89,-48.79 1341.47,-48.79 1342.05,-48.79 1342.63,-48.79 1343.22,-48.79 1343.80,-48.79 1344.38,-48.79 1344.96,-48.79 1345.54,-48.79 1346.12,-48.80 1346.70,-48.80 1347.29,-48.80 1347.87,-48.80 1348.45,-48.80 1349.03,-48.80 1349.61,-48.80 1350.19,-48.80 1350.77,-48.80 1351.36,-48.80 1351.94,-48.80 1352.52,-48.80 1353.10,-48.80 1353.68,-48.80 1354.26,-48.80 1354.85,-48.80 1355.43,-48.80 1356.01,-48.80 1356.59,-48.80 1357.17,-48.80 1357.75,-48.80 1358.33,-48.80 1358.92,-48.81 1359.50,-48.81 1360.08,-48.81 1360.66,-48.81 1361.24,-48.81 1361.82,-48.81 1362.40,-48.81 1362.99,-48.81 1363.57,-48.81 1364.15,-48.81 1364.73,-48.81 1365.31,-48.81 1365.89,-48.81 1366.47,-48.81 1367.06,-48.81 1367.64,-48.81 1368.22,-48.81 1368.80,-48.81 1369.38,-48.81 1369.96,-48.81 1370.54,-48.81 1371.13,-48.81 1371.71,-48.81 1372.29,-48.81 1372.87,-48.81 1373.45,-48.81 1374.03,-48.81 1374.62,-48.81 1375.20,-48.81 1375.78,-48.81 1376.36,-48.81 1376.94,-48.81 1377.52,-48.81 1378.10,-48.81 1378.69,-48.81 1379.27,-48.81 1379.85,-48.81 1380.43,-48.81 1381.01,-48.81 1381.59,-48.81 1382.17,-48.82 1382.76,-48.82 1383.34,-48.82 1383.92,-48.82 1384.50,-48.82" stroke="#32e6f0" stroke-width="1.1"/><polyline points="1036.20,184.91 1036.78,184.91 1037.36,184.91 1037.94,184.91 1038.53,184.91 1039.11,184.91 1039.69,184.91 1040.27,184.91 1040.85,184.91 1041.43,184.91 1042.01,184.91 1042.60,184.91 1043.18,184.91 1043.76,184.91 1044.34,184.91 1044.92,184.91 1045.50,184.91 1046.08,184.91 1046.67,184.91 1047.25,184.91 1047.83,184.91 1048.41,184.91 1048.99,184.91 1049.57,184.91 1050.16,184.91 1050.74,184.91 1051.32,184.91 1051.90,184.91 1052.48,184.91 1053.06,184.91 1053.64,184.91 1054.23,184.91 1054.81,184.91 1055.39,184.91 1055.97,184.91 1056.55,184.91 1057.13,184.91 1057.71,184.91 1058.30,184.91 1058.88,184.91 1059.46,184.91 1060.04,184.91 1060.62,184.91 1061.20,184.91 1061.78,184.91 1062.37,184.91 1062.95,184.91 1063.53,184.91 1064.11,184.91 1064.69,184.91 1065.27,184.91 1065.85,184.91 1066.44,184.91 1067.02,184.91 1067.60,184.91 1068.18,184.91 1068.76,184.91 1069.34,184.91 1069.93,184.91 1070.51,184.91 1071.09,184.91 1071.67,184.91 1072.25,184.91 1072.83,184.91 1073.41,184.91 1074.00,184.91 1074.58,184.91 1075.16,184.91 1075.74,184.91 1076.32,184.91 1076.90,184.91 1077.48,184.91 1078.07,184.91 1078.65,184.91 1079.23,184.91 1079.81,184.91 1080.39,184.91 1080.97,184.91 1081.55,184.91 1082.14,184.91 1082.72,184.91 1083.30,184.91 1083.88,184.91 1084.46,184.91 1085.04,184.91 1085.62,184.91 1086.21,184.91 1086.79,184.91 1087.37,184.91 1087.95,184.91 1088.53,184.91 1089.11,184.91 1089.70,184.91 1090.28,184.91 1090.86,184.91 1091.44,184.91 1092.02,184.91 1092.60,184.91 1093.18,184.91 1093.77,184.91 1094.35,184.91 1094.93,184.91 1095.51,184.91 1096.09,184.91 1096.67,184.91 1097.25,184.91 1097.84,184.91 1098.42,184.91 1099.00,184.91 1099.58,184.91 1100.16,184.91 1100.74,184.91 1101.32,184.91 1101.91,184.91 1102.49,184.91 1103.07,184.91 1103.65,184.91 1104.23,184.91 1104.81,184.91 1105.39,184.91 1105.98,184.91 1106.56,184.91 1107.14,184.91 1107.72,184.91 1108.30,184.91 1108.88,184.91 1109.47,184.91 1110.05,184.91 1110.63,184.91 1111.21,184.91 1111.79,184.91 1112.37,184.91 1112.95,184.91 1113.54,184.91 1114.12,184.91 1114.70,184.91 1115.28,184.91 1115.86,184.91 1116.44,184.91 1117.02,184.91 1117.61,184.91 1118.19,184.91 1118.77,184.91 1119.35,184.91 1119.93,184.91 1120.51,184.91 1121.09,184.91 1121.68,184.91 1122.26,184.91 1122.84,184.91 1123.42,184.91 1124.00,184.91 1124.58,184.91 1125.16,184.91 1125.75,184.91 1126.33,184.91 1126.91,184.91 1127.49,184.91 1128.07,184.91 1128.65,184.91 1129.24,184.91 1129.82,184.91 1130.40,184.91 1130.98,184.91 1131.56,184.91 1132.14,184.91 1132.72,184.91 1133.31,184.91 1133.89,184.91 1134.47,184.91 1135.05,184.91 1135.63,184.91 1136.21,184.91 1136.79,184.91 1137.38,184.91 1137.96,184.91 1138.54,184.91 1139.12,184.91 1139.70,184.91 1140.28,184.91 1140.86,184.91 1141.45,184.91 1142.03,184.91 1142.61,184.91 1143.19,184.91 1143.77,184.91 1144.35,184.91 1144.93,184.91 1145.52,184.91 1146.10,184.91 1146.68,184.91 1147.26,184.91 1147.84,184.91 1148.42,184.91 1149.01,184.91 1149.59,184.91 1150.17,184.91 1150.75,184.91 1151.33,184.91 1151.91,184.91 1152.49,184.91 1153.08,184.91 1153.66,184.91 1154.24,184.91 1154.82,184.91 1155.40,184.91 1155.98,184.91 1156.56,184.91 1157.15,184.91 1157.73,184.91 1158.31,184.91 1158.89,184.91 1159.47,184.91 1160.05,184.91 1160.63,184.91 1161.22,184.91 1161.80,184.91 1162.38,184.91 1162.96,184.91 1163.54,184.91 1164.12,184.91 1164.70,184.91 1165.29,184.91 1165.87,184.91 1166.45,184.91 1167.03,184.91 1167.61,184.91 1168.19,184.91 1168.77,184.91 1169.36,184.91 1169.94,184.91 1170.52,184.91 1171.10,184.91 1171.68,184.91 1172.26,184.91 1172.85,184.91 1173.43,184.91 1174.01,184.91 1174.59,184.91 1175.17,184.91 1175.75,184.91 1176.33,184.91 1176.92,184.91 1177.50,184.91 1178.08,184.91 1178.66,184.91 1179.24,184.91 1179.82,184.91 1180.40,184.91 1180.99,184.91 1181.57,184.91 1182.15,184.91 1182.73,184.91 1183.31,184.91 1183.89,184.91 1184.47,184.91 1185.06,184.91 1185.64,184.91 1186.22,184.91 1186.80,184.91 1187.38,184.91 1187.96,184.91 1188.54,184.91 1189.13,184.91 1189.71,184.91 1190.29,184.91 1190.87,184.91 1191.45,184.91 1192.03,184.91 1192.62,184.91 1193.20,184.91 1193.78,184.91 1194.36,184.91 1194.94,184.91 1195.52,184.91 1196.10,184.91 1196.69,184.91 1197.27,184.91 1197.85,184.91 1198.43,184.91 1199.01,184.91 1199.59,184.91 1200.17,184.91 1200.76,184.91 1201.34,184.91 1201.92,184.91 1202.50,184.91 1203.08,184.91 1203.66,184.91 1204.24,184.91 1204.83,184.91 1205.41,184.91 1205.99,184.91 1206.57,184.91 1207.15,184.91 1207.73,184.91 1208.31,184.91 1208.90,184.91 1209.48,184.91 1210.06,184.91 1210.64,184.91 1211.22,184.91 1211.80,184.91 1212.39,184.91 1212.97,184.91 1213.55,184.91 1214.13,184.91 1214.71,184.91 1215.29,184.91 1215.87,184.91 1216.46,184.91 1217.04,184.91 1217.62,184.91 1218.20,184.91 1218.78,184.91 1219.36,184.91 1219.94,184.91 1220.53,184.91 1221.11,184.91 1221.69,184.91 1222.27,184.91 1222.85,184.91 1223.43,184.91 1224.01,184.91 1224.60,184.91 1225.18,184.91 1225.76,184.91 1226.34,184.91 1226.92,184.91 1227.50,184.91 1228.08,184.91 1228.67,184.91 1229.25,184.91 1229.83,184.91 1230.41,184.91 1230.99,184.91 1231.57,184.91 1232.16,184.91 1232.74,184.91 1233.32,184.91 1233.90,184.91 1234.48,184.91 1235.06,184.91 1235.64,184.91 1236.23,184.91 1236.81,184.91 1237.39,184.91 1237.97,184.91 1238.55,184.91 1239.13,184.91 1239.71,184.91 1240.30,184.91 1240.88,184.91 1241.46,184.91 1242.04,184.91 1242.62,184.91 1243.20,184.91 1243.78,184.91 1244.37,184.91 1244.95,184.91 1245.53,184.91 1246.11,184.91 1246.69,184.91 1247.27,184.91 1247.85,184.91 1248.44,184.91 1249.02,184.91 1249.60,184.91 1250.18,184.91 1250.76,184.91 1251.34,184.91 1251.93,184.91 1252.51,184.91 1253.09,184.91 1253.67,184.91 1254.25,184.91 1254.83,184.91 1255.41,184.91 1256.00,184.91 1256.58,184.91 1257.16,184.91 1257.74,184.91 1258.32,184.91 1258.90,184.91 1259.48,184.91 1260.07,184.91 1260.65,184.91 1261.23,184.91 1261.81,184.91 1262.39,184.91 1262.97,184.91 1263.55,184.91 1264.14,184.91 1264.72,184.91 1265.30,184.91 1265.88,184.91 1266.46,184.91 1267.04,184.91 1267.62,184.91 1268.21,184.91 1268.79,184.91 1269.37,184.91 1269.95,184.91 1270.53,184.91 1271.11,184.91 1271.69,184.91 1272.28,184.91 1272.86,184.91 1273.44,184.91 1274.02,184.91 1274.60,184.91 1275.18,184.91 1275.77,184.91 1276.35,184.91 1276.93,184.91 1277.51,184.91 1278.09,184.91 1278.67,184.91 1279.25,184.91 1279.84,184.91 1280.42,184.91 1281.00,184.91 1281.58,184.91 1282.16,184.91 1282.74,184.91 1283.32,184.91 1283.91,184.91 1284.49,184.91 1285.07,184.91 1285.65,184.91 1286.23,184.91 1286.81,184.91 1287.39,184.91 1287.98,184.91 1288.56,184.91 1289.14,184.91 1289.72,184.91 1290.30,184.91 1290.88,184.91 1291.46,184.91 1292.05,184.91 1292.63,184.91 1293.21,184.91 1293.79,184.91 1294.37,184.91 1294.95,184.91 1295.54,184.91 1296.12,184.91 1296.70,184.91 1297.28,184.91 1297.86,184.91 1298.44,184.91 1299.02,184.91 1299.61,184.91 1300.19,184.91 1300.77,184.91 1301.35,184.91 1301.93,184.91 1302.51,184.91 1303.09,184.91 1303.68,184.91 1304.26,184.91 1304.84,184.91 1305.42,184.91 1306.00,184.91 1306.58,184.91 1307.16,184.91 1307.75,184.91 1308.33,184.91 1308.91,184.91 1309.49,184.91 1310.07,184.91 1310.65,184.91 1311.23,184.91 1311.82,184.91 1312.40,184.91 1312.98,184.91 1313.56,184.91 1314.14,184.91 1314.72,184.91 1315.31,184.91 1315.89,184.91 1316.47,184.91 1317.05,184.91 1317.63,184.91 1318.21,184.91 1318.79,184.91 1319.38,184.91 1319.96,184.91 1320.54,184.91 1321.12,184.91 1321.70,184.91 1322.28,184.91 1322.86,184.91 1323.45,184.91 1324.03,184.91 1324.61,184.91 1325.19,184.91 1325.77,184.91 1326.35,184.91 1326.93,184.91 1327.52,184.91 1328.10,184.91 1328.68,184.91 1329.26,184.91 1329.84,184.91 1330.42,184.91 1331.00,184.91 1331.59,184.91 1332.17,184.91 1332.75,184.91 1333.33,184.91 1333.91,184.91 1334.49,184.91 1335.08,184.91 1335.66,184.91 1336.24,184.91 1336.82,184.91 1337.40,184.91 1337.98,184.91 1338.56,184.91 1339.15,184.91 1339.73,184.91 1340.31,184.91 1340.89,184.91 1341.47,184.91 1342.05,184.91 1342.63,184.91 1343.22,184.91 1343.80,184.91 1344.38,184.91 1344.96,184.91 1345.54,184.91 1346.12,184.91 1346.70,184.91 1347.29,184.91 1347.87,184.91 1348.45,184.91 1349.03,184.91 1349.61,184.91 1350.19,184.91 1350.77,184.91 1351.36,184.91 1351.94,184.91 1352.52,184.91 1353.10,184.91 1353.68,184.91 1354.26,184.91 1354.85,184.91 1355.43,184.91 1356.01,184.91 1356.59,184.91 1357.17,184.91 1357.75,184.91 1358.33,184.91 1358.92,184.91 1359.50,184.91 1360.08,184.91 1360.66,184.91 1361.24,184.91 1361.82,184.91 1362.40,184.91 1362.99,184.91 1363.57,184.91 1364.15,184.91 1364.73,184.91 1365.31,184.91 1365.89,184.91 1366.47,184.91 1367.06,184.91 1367.64,184.91 1368.22,184.91 1368.80,184.91 1369.38,184.91 1369.96,184.91 1370.54,184.91 1371.13,184.91 1371.71,184.91 1372.29,184.91 1372.87,184.91 1373.45,184.91 1374.03,184.91 1374.62,184.91 1375.20,184.91 1375.78,184.91 1376.36,184.91 1376.94,184.91 1377.52,184.91 1378.10,184.91 1378.69,184.91 1379.27,184.91 1379.85,184.91 1380.43,184.91 1381.01,184.91 1381.59,184.91 1382.17,184.91 1382.76,184.91 1383.34,184.91 1383.92,184.91 1384.50,184.91" stroke="#4444d8" stroke-width="1.4"/><polyline points="1036.20,441.45 1036.78,441.47 1037.36,441.48 1037.94,441.50 1038.53,441.51 1039.11,441.52 1039.69,441.54 1040.27,441.55 1040.85,441.57 1041.43,441.58 1042.01,441.59 1042.60,441.61 1043.18,441.62 1043.76,441.64 1044.34,441.65 1044.92,441.66 1045.50,441.67 1046.08,441.69 1046.67,441.70 1047.25,441.71 1047.83,441.72 1048.41,441.74 1048.99,441.75 1049.57,441.76 1050.16,441.77 1050.74,441.78 1051.32,441.80 1051.90,441.81 1052.48,441.82 1053.06,441.83 1053.64,441.84 1054.23,441.85 1054.81,441.86 1055.39,441.87 1055.97,441.89 1056.55,441.90 1057.13,441.91 1057.71,441.92 1058.30,441.93 1058.88,441.94 1059.46,441.95 1060.04,441.96 1060.62,441.97 1061.20,441.98 1061.78,441.99 1062.37,442.00 1062.95,442.01 1063.53,442.02 1064.11,442.03 1064.69,442.04 1065.27,442.05 1065.85,442.06 1066.44,442.07 1067.02,442.08 1067.60,442.09 1068.18,442.10 1068.76,442.11 1069.34,442.12 1069.93,442.13 1070.51,442.14 1071.09,442.15 1071.67,442.16 1072.25,442.17 1072.83,442.18 1073.41,442.19 1074.00,442.20 1074.58,442.21 1075.16,442.22 1075.74,442.23 1076.32,442.24 1076.90,442.25 1077.48,442.26 1078.07,442.27 1078.65,442.28 1079.23,442.29 1079.81,442.30 1080.39,442.31 1080.97,442.32 1081.55,442.33 1082.14,442.34 1082.72,442.35 1083.30,442.36 1083.88,442.37 1084.46,442.38 1085.04,442.40 1085.62,442.41 1086.21,442.42 1086.79,442.43 1087.37,442.44 1087.95,442.45 1088.53,442.47 1089.11,442.48 1089.70,442.49 1090.28,442.50 1090.86,442.52 1091.44,442.53 1092.02,442.54 1092.60,442.56 1093.18,442.57 1093.77,442.58 1094.35,442.60 1094.93,442.61 1095.51,442.63 1096.09,442.64 1096.67,442.66 1097.25,442.67 1097.84,442.69 1098.42,442.71 1099.00,442.72 1099.58,442.74 1100.16,442.76 1100.74,442.77 1101.32,442.79 1101.91,442.81 1102.49,442.83 1103.07,442.85 1103.65,442.87 1104.23,442.89 1104.81,442.91 1105.39,442.93 1105.98,442.95 1106.56,442.97 1107.14,442.99 1107.72,443.01 1108.30,443.03 1108.88,443.06 1109.47,443.08 1110.05,443.11 1110.63,443.13 1111.21,443.16 1111.79,443.18 1112.37,443.21 1112.95,443.23 1113.54,443.26 1114.12,443.29 1114.70,443.32 1115.28,443.35 1115.86,443.38 1116.44,443.41 1117.02,443.44 1117.61,443.47 1118.19,443.50 1118.77,443.54 1119.35,443.57 1119.93,443.60 1120.51,443.64 1121.09,443.67 1121.68,443.71 1122.26,443.75 1122.84,443.79 1123.42,443.82 1124.00,443.86 1124.58,443.90 1125.16,443.94 1125.75,443.99 1126.33,444.03 1126.91,444.07 1127.49,444.12 1128.07,444.16 1128.65,444.21 1129.24,444.25 1129.82,444.30 1130.40,444.35 1130.98,444.39 1131.56,444.44 1132.14,444.49 1132.72,444.55 1133.31,444.60 1133.89,444.65 1134.47,444.70 1135.05,444.76 1135.63,444.81 1136.21,444.87 1136.79,444.92 1137.38,444.98 1137.96,445.04 1138.54,445.10 1139.12,445.16 1139.70,445.22 1140.28,445.28 1140.86,445.34 1141.45,445.40 1142.03,445.47 1142.61,445.53 1143.19,445.59 1143.77,445.66 1144.35,445.73 1144.93,445.79 1145.52,445.86 1146.10,445.93 1146.68,445.99 1147.26,446.06 1147.84,446.13 1148.42,446.20 1149.01,446.27 1149.59,446.34 1150.17,446.41 1150.75,446.49 1151.33,446.56 1151.91,446.63 1152.49,446.70 1153.08,446.78 1153.66,446.85 1154.24,446.92 1154.82,447.00 1155.40,447.07 1155.98,447.15 1156.56,447.22 1157.15,447.30 1157.73,447.37 1158.31,447.45 1158.89,447.52 1159.47,447.60 1160.05,447.67 1160.63,447.75 1161.22,447.82 1161.80,447.90 1162.38,447.97 1162.96,448.05 1163.54,448.12 1164.12,448.20 1164.70,448.27 1165.29,448.35 1165.87,448.42 1166.45,448.50 1167.03,448.57 1167.61,448.65 1168.19,448.72 1168.77,448.80 1169.36,448.87 1169.94,448.94 1170.52,449.01 1171.10,449.09 1171.68,449.16 1172.26,449.23 1172.85,449.30 1173.43,449.37 1174.01,449.44 1174.59,449.51 1175.17,449.58 1175.75,449.65 1176.33,449.72 1176.92,449.79 1177.50,449.86 1178.08,449.93 1178.66,449.99 1179.24,450.06 1179.82,450.12 1180.40,450.19 1180.99,450.25 1181.57,450.32 1182.15,450.38 1182.73,450.45 1183.31,450.51 1183.89,450.57 1184.47,450.63 1185.06,450.69 1185.64,450.75 1186.22,450.81 1186.80,450.87 1187.38,450.93 1187.96,450.99 1188.54,451.04 1189.13,451.10 1189.71,451.16 1190.29,451.21 1190.87,451.27 1191.45,451.32 1192.03,451.38 1192.62,451.43 1193.20,451.48 1193.78,451.53 1194.36,451.58 1194.94,451.64 1195.52,451.69 1196.10,451.74 1196.69,451.78 1197.27,451.83 1197.85,451.88 1198.43,451.93 1199.01,451.97 1199.59,452.02 1200.17,452.07 1200.76,452.11 1201.34,452.15 1201.92,452.20 1202.50,452.24 1203.08,452.28 1203.66,452.33 1204.24,452.37 1204.83,452.41 1205.41,452.45 1205.99,452.49 1206.57,452.53 1207.15,452.57 1207.73,452.61 1208.31,452.64 1208.90,452.68 1209.48,452.72 1210.06,452.76 1210.64,452.79 1211.22,452.83 1211.80,452.86 1212.39,452.90 1212.97,452.93 1213.55,452.96 1214.13,453.00 1214.71,453.03 1215.29,453.06 1215.87,453.09 1216.46,453.12 1217.04,453.16 1217.62,453.19 1218.20,453.22 1218.78,453.25 1219.36,453.27 1219.94,453.30 1220.53,453.33 1221.11,453.36 1221.69,453.39 1222.27,453.41 1222.85,453.44 1223.43,453.47 1224.01,453.49 1224.60,453.52 1225.18,453.54 1225.76,453.57 1226.34,453.59 1226.92,453.62 1227.50,453.64 1228.08,453.66 1228.67,453.69 1229.25,453.71 1229.83,453.73 1230.41,453.75 1230.99,453.78 1231.57,453.80 1232.16,453.82 1232.74,453.84 1233.32,453.86 1233.90,453.88 1234.48,453.90 1235.06,453.92 1235.64,453.94 1236.23,453.96 1236.81,453.98 1237.39,454.00 1237.97,454.01 1238.55,454.03 1239.13,454.05 1239.71,454.07 1240.30,454.08 1240.88,454.10 1241.46,454.12 1242.04,454.13 1242.62,454.15 1243.20,454.17 1243.78,454.18 1244.37,454.20 1244.95,454.21 1245.53,454.23 1246.11,454.24 1246.69,454.26 1247.27,454.27 1247.85,454.28 1248.44,454.30 1249.02,454.31 1249.60,454.33 1250.18,454.34 1250.76,454.35 1251.34,454.36 1251.93,454.38 1252.51,454.39 1253.09,454.40 1253.67,454.41 1254.25,454.43 1254.83,454.44 1255.41,454.45 1256.00,454.46 1256.58,454.47 1257.16,454.48 1257.74,454.49 1258.32,454.51 1258.90,454.52 1259.48,454.53 1260.07,454.54 1260.65,454.55 1261.23,454.56 1261.81,454.57 1262.39,454.58 1262.97,454.59 1263.55,454.59 1264.14,454.60 1264.72,454.61 1265.30,454.62 1265.88,454.63 1266.46,454.64 1267.04,454.65 1267.62,454.66 1268.21,454.66 1268.79,454.67 1269.37,454.68 1269.95,454.69 1270.53,454.70 1271.11,454.70 1271.69,454.71 1272.28,454.72 1272.86,454.73 1273.44,454.73 1274.02,454.74 1274.60,454.75 1275.18,454.75 1275.77,454.76 1276.35,454.77 1276.93,454.77 1277.51,454.78 1278.09,454.79 1278.67,454.79 1279.25,454.80 1279.84,454.81 1280.42,454.81 1281.00,454.82 1281.58,454.82 1282.16,454.83 1282.74,454.84 1283.32,454.84 1283.91,454.85 1284.49,454.85 1285.07,454.86 1285.65,454.86 1286.23,454.87 1286.81,454.87 1287.39,454.88 1287.98,454.88 1288.56,454.89 1289.14,454.89 1289.72,454.90 1290.30,454.90 1290.88,454.91 1291.46,454.91 1292.05,454.91 1292.63,454.92 1293.21,454.92 1293.79,454.93 1294.37,454.93 1294.95,454.94 1295.54,454.94 1296.12,454.94 1296.70,454.95 1297.28,454.95 1297.86,454.96 1298.44,454.96 1299.02,454.96 1299.61,454.97 1300.19,454.97 1300.77,454.97 1301.35,454.98 1301.93,454.98 1302.51,454.98 1303.09,454.99 1303.68,454.99 1304.26,454.99 1304.84,455.00 1305.42,455.00 1306.00,455.00 1306.58,455.01 1307.16,455.01 1307.75,455.01 1308.33,455.01 1308.91,455.02 1309.49,455.02 1310.07,455.02 1310.65,455.03 1311.23,455.03 1311.82,455.03 1312.40,455.03 1312.98,455.04 1313.56,455.04 1314.14,455.04 1314.72,455.04 1315.31,455.05 1315.89,455.05 1316.47,455.05 1317.05,455.05 1317.63,455.05 1318.21,455.06 1318.79,455.06 1319.38,455.06 1319.96,455.06 1320.54,455.07 1321.12,455.07 1321.70,455.07 1322.28,455.07 1322.86,455.07 1323.45,455.08 1324.03,455.08 1324.61,455.08 1325.19,455.08 1325.77,455.08 1326.35,455.08 1326.93,455.09 1327.52,455.09 1328.10,455.09 1328.68,455.09 1329.26,455.09 1329.84,455.09 1330.42,455.10 1331.00,455.10 1331.59,455.10 1332.17,455.10 1332.75,455.10 1333.33,455.10 1333.91,455.11 1334.49,455.11 1335.08,455.11 1335.66,455.11 1336.24,455.11 1336.82,455.11 1337.40,455.11 1337.98,455.12 1338.56,455.12 1339.15,455.12 1339.73,455.12 1340.31,455.12 1340.89,455.12 1341.47,455.12 1342.05,455.12 1342.63,455.13 1343.22,455.13 1343.80,455.13 1344.38,455.13 1344.96,455.13 1345.54,455.13 1346.12,455.13 1346.70,455.13 1347.29,455.13 1347.87,455.13 1348.45,455.14 1349.03,455.14 1349.61,455.14 1350.19,455.14 1350.77,455.14 1351.36,455.14 1351.94,455.14 1352.52,455.14 1353.10,455.14 1353.68,455.14 1354.26,455.14 1354.85,455.15 1355.43,455.15 1356.01,455.15 1356.59,455.15 1357.17,455.15 1357.75,455.15 1358.33,455.15 1358.92,455.15 1359.50,455.15 1360.08,455.15 1360.66,455.15 1361.24,455.15 1361.82,455.15 1362.40,455.16 1362.99,455.16 1363.57,455.16 1364.15,455.16 1364.73,455.16 1365.31,455.16 1365.89,455.16 1366.47,455.16 1367.06,455.16 1367.64,455.16 1368.22,455.16 1368.80,455.16 1369.38,455.16 1369.96,455.16 1370.54,455.16 1371.13,455.16 1371.71,455.17 1372.29,455.17 1372.87,455.17 1373.45,455.17 1374.03,455.17 1374.62,455.17 1375.20,455.17 1375.78,455.17 1376.36,455.17 1376.94,455.17 1377.52,455.17 1378.10,455.17 1378.69,455.17 1379.27,455.17 1379.85,455.17 1380.43,455.17 1381.01,455.17 1381.59,455.17 1382.17,455.17 1382.76,455.17 1383.34,455.17 1383.92,455.17 1384.50,455.18" stroke="#1616d8" stroke-width="2.3"/></g><text transform="translate(1033.20,458.50) scale(0.815,1)" text-anchor="end" fill="#0c0c0c">0</text><text transform="translate(1033.20,419.19) scale(0.815,1)" text-anchor="end" fill="#0c0c0c">2</text><text transform="translate(1033.20,380.58) scale(0.815,1)" text-anchor="end" fill="#0c0c0c">4</text><text transform="translate(1033.20,341.96) scale(0.815,1)" text-anchor="end" fill="#0c0c0c">6</text><text transform="translate(1033.20,303.35) scale(0.815,1)" text-anchor="end" fill="#0c0c0c">8</text><text transform="translate(1033.20,264.74) scale(0.815,1)" text-anchor="end" fill="#0c0c0c">10</text><text transform="translate(1033.20,226.12) scale(0.815,1)" text-anchor="end" fill="#0c0c0c">12</text><text transform="translate(1033.20,187.51) scale(0.815,1)" text-anchor="end" fill="#0c0c0c">14</text><text transform="translate(1033.20,148.90) scale(0.815,1)" text-anchor="end" fill="#0c0c0c">16</text><text transform="translate(1396.00,457.80) scale(0.815,1)" text-anchor="middle" fill="#0c0c0c">0</text><text transform="translate(1396.00,419.19) scale(0.815,1)" text-anchor="middle" fill="#0c0c0c">1,25</text><text transform="translate(1396.00,380.58) scale(0.815,1)" text-anchor="middle" fill="#0c0c0c">2,5</text><text transform="translate(1396.00,341.96) scale(0.815,1)" text-anchor="middle" fill="#0c0c0c">3,75</text><text transform="translate(1396.00,303.35) scale(0.815,1)" text-anchor="middle" fill="#0c0c0c">5</text><text transform="translate(1396.00,264.74) scale(0.815,1)" text-anchor="middle" fill="#0c0c0c">6,25</text><text transform="translate(1396.00,226.12) scale(0.815,1)" text-anchor="middle" fill="#0c0c0c">7,5</text><text transform="translate(1396.00,187.51) scale(0.815,1)" text-anchor="middle" fill="#0c0c0c">8,75</text><text transform="translate(1396.00,148.90) scale(0.815,1)" text-anchor="middle" fill="#0c0c0c">10</text><text transform="translate(1088.62,464.00) scale(0.815,1)" text-anchor="middle" fill="#0c0c0c">20</text><text transform="translate(1157.93,464.00) scale(0.815,1)" text-anchor="middle" fill="#0c0c0c">50</text><text transform="translate(1210.35,464.00) scale(0.815,1)" text-anchor="middle" fill="#0c0c0c">100</text><text transform="translate(1262.77,464.00) scale(0.815,1)" text-anchor="middle" fill="#0c0c0c">200</text><text transform="translate(1332.08,464.00) scale(0.815,1)" text-anchor="middle" fill="#0c0c0c">500</text><text transform="translate(1031.70,464.00) scale(0.815,1)" text-anchor="start" fill="#0c0c0c">10Hz</text><text transform="translate(1388.80,464.00) scale(0.815,1)" text-anchor="end" fill="#0c0c0c">1k</text><text transform="translate(1210.35,143.70) scale(0.954,1)" text-anchor="middle" fill="#1a1a1a">Excursion</text><text transform="translate(1037.40,142.90) scale(0.815,1)" text-anchor="start" fill="#0c0c0c">mm</text><text transform="translate(1382.50,142.90) scale(0.815,1)" text-anchor="end" fill="#0c0c0c">N</text></svg>
<svg style="left:204px;top:470px" width="406.5" height="340" viewBox="204 470 406.5 340" font-family="Liberation Sans, sans-serif" font-size="9.5"><rect x="204" y="470" width="406.5" height="340" fill="#fff"/><path d="M228.2 779.84H586.6M228.2 767.48H586.6M228.2 755.12H586.6M228.2 742.76H586.6M228.2 718.04H586.6M228.2 705.68H586.6M228.2 693.32H586.6M228.2 680.96H586.6M228.2 656.24H586.6M228.2 643.88H586.6M228.2 631.52H586.6M228.2 619.16H586.6M228.2 594.44H586.6M228.2 582.08H586.6M228.2 569.72H586.6M228.2 557.36H586.6M228.2 532.64H586.6M228.2 520.28H586.6M228.2 507.92H586.6M228.2 495.56H586.6" stroke="#e3e3e3" stroke-width="1" fill="none"/><path d="M281.82 483.2V792.2M313.40 483.2V792.2M335.80 483.2V792.2M353.18 483.2V792.2M367.37 483.2V792.2M379.38 483.2V792.2M389.77 483.2V792.2M398.95 483.2V792.2M461.12 483.2V792.2M492.70 483.2V792.2M515.10 483.2V792.2M532.48 483.2V792.2M546.67 483.2V792.2M558.68 483.2V792.2M569.07 483.2V792.2M578.25 483.2V792.2" stroke="#e2e2e2" stroke-width="1" fill="none"/><path d="M228.2 730.40H586.6M228.2 668.60H586.6M228.2 606.80H586.6M228.2 545.00H586.6" stroke="#8a8a8a" stroke-width="1" fill="none"/><path d="M407.15 483.2V792.2" stroke="#8a8a8a" stroke-width="1" fill="none"/><rect x="228.2" y="483.2" width="358.40000000000003" height="309.00000000000006" fill="none" stroke="#7a7a7a" stroke-width="1.05"/><clipPath id="c204_470"><rect x="227.7" y="482.7" width="359.40000000000003" height="310.20000000000005"/></clipPath><g clip-path="url(#c204_470)" fill="none" stroke-linejoin="round"><polyline points="228.20,614.98 228.80,614.82 229.40,614.65 229.99,614.49 230.59,614.32 231.19,614.15 231.79,613.98 232.39,613.81 232.99,613.63 233.58,613.46 234.18,613.29 234.78,613.11 235.38,612.93 235.98,612.75 236.58,612.57 237.17,612.39 237.77,612.20 238.37,612.02 238.97,611.83 239.57,611.64 240.17,611.45 240.76,611.26 241.36,611.07 241.96,610.87 242.56,610.68 243.16,610.48 243.76,610.28 244.35,610.08 244.95,609.88 245.55,609.68 246.15,609.47 246.75,609.27 247.35,609.06 247.94,608.85 248.54,608.64 249.14,608.42 249.74,608.21 250.34,607.99 250.94,607.78 251.53,607.56 252.13,607.34 252.73,607.12 253.33,606.89 253.93,606.67 254.53,606.44 255.12,606.21 255.72,605.98 256.32,605.75 256.92,605.52 257.52,605.28 258.12,605.04 258.71,604.81 259.31,604.57 259.91,604.32 260.51,604.08 261.11,603.83 261.71,603.59 262.30,603.34 262.90,603.09 263.50,602.84 264.10,602.58 264.70,602.33 265.30,602.07 265.89,601.81 266.49,601.55 267.09,601.29 267.69,601.03 268.29,600.76 268.89,600.50 269.48,600.23 270.08,599.96 270.68,599.69 271.28,599.41 271.88,599.14 272.48,598.86 273.07,598.58 273.67,598.30 274.27,598.02 274.87,597.74 275.47,597.45 276.07,597.17 276.66,596.88 277.26,596.59 277.86,596.30 278.46,596.01 279.06,595.72 279.66,595.42 280.25,595.13 280.85,594.83 281.45,594.53 282.05,594.23 282.65,593.93 283.25,593.63 283.84,593.32 284.44,593.02 285.04,592.71 285.64,592.41 286.24,592.10 286.84,591.79 287.43,591.48 288.03,591.17 288.63,590.86 289.23,590.55 289.83,590.24 290.43,589.93 291.02,589.62 291.62,589.31 292.22,589.00 292.82,588.68 293.42,588.37 294.02,588.06 294.61,587.75 295.21,587.44 295.81,587.13 296.41,586.82 297.01,586.51 297.61,586.21 298.20,585.90 298.80,585.60 299.40,585.30 300.00,585.00 300.60,584.70 301.20,584.40 301.79,584.11 302.39,583.82 302.99,583.54 303.59,583.26 304.19,582.98 304.79,582.71 305.38,582.44 305.98,582.18 306.58,581.92 307.18,581.67 307.78,581.43 308.38,581.19 308.97,580.96 309.57,580.75 310.17,580.54 310.77,580.34 311.37,580.15 311.97,579.97 312.56,579.81 313.16,579.66 313.76,579.53 314.36,579.41 314.96,579.31 315.56,579.22 316.15,579.16 316.75,579.12 317.35,579.10 317.95,579.11 318.55,579.15 319.15,579.22 319.74,579.32 320.34,579.45 320.94,579.62 321.54,579.83 322.14,580.09 322.74,580.40 323.33,580.76 323.93,581.17 324.53,581.65 325.13,582.20 325.73,582.82 326.33,583.52 326.92,584.31 327.52,585.19 328.12,586.18 328.72,587.29 329.32,588.51 329.92,589.88 330.51,591.38 331.11,593.05 331.71,594.89 332.31,596.91 332.91,599.12 333.51,601.55 334.10,604.19 334.70,607.06 335.30,610.16 335.90,613.49 336.50,617.04 337.10,620.81 337.69,624.77 338.29,628.89 338.89,633.14 339.49,637.48 340.09,641.85 340.69,646.21 341.28,650.51 341.88,654.69 342.48,658.73 343.08,662.59 343.68,666.24 344.28,669.66 344.87,672.85 345.47,675.80 346.07,678.52 346.67,681.01 347.27,683.28 347.87,685.35 348.46,687.22 349.06,688.90 349.66,690.42 350.26,691.77 350.86,692.98 351.46,694.06 352.05,695.01 352.65,695.85 353.25,696.58 353.85,697.21 354.45,697.76 355.05,698.22 355.64,698.61 356.24,698.93 356.84,699.18 357.44,699.38 358.04,699.51 358.64,699.60 359.23,699.64 359.83,699.64 360.43,699.60 361.03,699.51 361.63,699.40 362.23,699.25 362.82,699.07 363.42,698.86 364.02,698.63 364.62,698.37 365.22,698.09 365.82,697.79 366.41,697.46 367.01,697.12 367.61,696.76 368.21,696.39 368.81,696.00 369.41,695.59 370.00,695.18 370.60,694.75 371.20,694.30 371.80,693.85 372.40,693.39 373.00,692.91 373.59,692.43 374.19,691.94 374.79,691.44 375.39,690.94 375.99,690.43 376.59,689.91 377.18,689.38 377.78,688.85 378.38,688.32 378.98,687.78 379.58,687.24 380.18,686.69 380.77,686.14 381.37,685.58 381.97,685.02 382.57,684.46 383.17,683.89 383.77,683.33 384.36,682.76 384.96,682.19 385.56,681.61 386.16,681.04 386.76,680.46 387.36,679.89 387.95,679.31 388.55,678.73 389.15,678.15 389.75,677.56 390.35,676.98 390.95,676.40 391.54,675.82 392.14,675.23 392.74,674.65 393.34,674.07 393.94,673.48 394.54,672.90 395.13,672.32 395.73,671.74 396.33,671.15 396.93,670.57 397.53,669.99 398.13,669.41 398.72,668.83 399.32,668.25 399.92,667.67 400.52,667.09 401.12,666.51 401.72,665.94 402.31,665.36 402.91,664.79 403.51,664.21 404.11,663.64 404.71,663.07 405.31,662.50 405.90,661.93 406.50,661.36 407.10,660.79 407.70,660.22 408.30,659.66 408.90,659.09 409.49,658.53 410.09,657.97 410.69,657.41 411.29,656.85 411.89,656.29 412.49,655.73 413.08,655.17 413.68,654.62 414.28,654.07 414.88,653.51 415.48,652.96 416.08,652.41 416.67,651.86 417.27,651.32 417.87,650.77 418.47,650.23 419.07,649.68 419.67,649.14 420.26,648.60 420.86,648.06 421.46,647.52 422.06,646.98 422.66,646.45 423.26,645.91 423.85,645.38 424.45,644.84 425.05,644.31 425.65,643.78 426.25,643.25 426.85,642.72 427.44,642.20 428.04,641.67 428.64,641.15 429.24,640.63 429.84,640.10 430.44,639.58 431.03,639.06 431.63,638.54 432.23,638.03 432.83,637.51 433.43,636.99 434.03,636.48 434.62,635.97 435.22,635.46 435.82,634.95 436.42,634.44 437.02,633.93 437.62,633.42 438.21,632.91 438.81,632.41 439.41,631.90 440.01,631.40 440.61,630.90 441.21,630.40 441.80,629.90 442.40,629.40 443.00,628.90 443.60,628.40 444.20,627.91 444.80,627.41 445.39,626.92 445.99,626.42 446.59,625.93 447.19,625.44 447.79,624.95 448.39,624.46 448.98,623.97 449.58,623.49 450.18,623.00 450.78,622.51 451.38,622.03 451.98,621.55 452.57,621.06 453.17,620.58 453.77,620.10 454.37,619.62 454.97,619.14 455.57,618.67 456.16,618.19 456.76,617.72 457.36,617.24 457.96,616.77 458.56,616.30 459.16,615.82 459.75,615.35 460.35,614.88 460.95,614.41 461.55,613.95 462.15,613.48 462.75,613.01 463.34,612.55 463.94,612.09 464.54,611.62 465.14,611.16 465.74,610.70 466.34,610.24 466.93,609.78 467.53,609.33 468.13,608.87 468.73,608.41 469.33,607.96 469.93,607.50 470.52,607.05 471.12,606.60 471.72,606.15 472.32,605.70 472.92,605.25 473.52,604.81 474.11,604.36 474.71,603.91 475.31,603.47 475.91,603.03 476.51,602.59 477.11,602.14 477.70,601.70 478.30,601.27 478.90,600.83 479.50,600.39 480.10,599.96 480.70,599.52 481.29,599.09 481.89,598.66 482.49,598.23 483.09,597.80 483.69,597.37 484.29,596.94 484.88,596.52 485.48,596.09 486.08,595.67 486.68,595.25 487.28,594.83 487.88,594.41 488.47,593.99 489.07,593.57 489.67,593.16 490.27,592.74 490.87,592.33 491.47,591.92 492.06,591.50 492.66,591.10 493.26,590.69 493.86,590.28 494.46,589.87 495.06,589.47 495.65,589.07 496.25,588.67 496.85,588.27 497.45,587.87 498.05,587.47 498.65,587.07 499.24,586.68 499.84,586.29 500.44,585.89 501.04,585.50 501.64,585.11 502.24,584.73 502.83,584.34 503.43,583.96 504.03,583.57 504.63,583.19 505.23,582.81 505.83,582.43 506.42,582.05 507.02,581.68 507.62,581.30 508.22,580.93 508.82,580.56 509.42,580.19 510.01,579.82 510.61,579.45 511.21,579.09 511.81,578.72 512.41,578.36 513.01,578.00 513.60,577.64 514.20,577.28 514.80,576.92 515.40,576.57 516.00,576.22 516.60,575.86 517.19,575.51 517.79,575.17 518.39,574.82 518.99,574.47 519.59,574.13 520.19,573.79 520.78,573.45 521.38,573.11 521.98,572.77 522.58,572.43 523.18,572.10 523.78,571.77 524.37,571.44 524.97,571.11 525.57,570.78 526.17,570.45 526.77,570.13 527.37,569.80 527.96,569.48 528.56,569.16 529.16,568.84 529.76,568.53 530.36,568.21 530.96,567.90 531.55,567.59 532.15,567.28 532.75,566.97 533.35,566.66 533.95,566.36 534.55,566.05 535.14,565.75 535.74,565.45 536.34,565.15 536.94,564.85 537.54,564.56 538.14,564.26 538.73,563.97 539.33,563.68 539.93,563.39 540.53,563.10 541.13,562.82 541.73,562.53 542.32,562.25 542.92,561.97 543.52,561.69 544.12,561.41 544.72,561.14 545.32,560.86 545.91,560.59 546.51,560.32 547.11,560.05 547.71,559.78 548.31,559.51 548.91,559.24 549.50,558.98 550.10,558.72 550.70,558.46 551.30,558.20 551.90,557.94 552.50,557.68 553.09,557.43 553.69,557.18 554.29,556.93 554.89,556.68 555.49,556.43 556.09,556.18 556.68,555.94 557.28,555.69 557.88,555.45 558.48,555.21 559.08,554.97 559.68,554.73 560.27,554.50 560.87,554.26 561.47,554.03 562.07,553.80 562.67,553.56 563.27,553.34 563.86,553.11 564.46,552.88 565.06,552.66 565.66,552.43 566.26,552.21 566.86,551.99 567.45,551.77 568.05,551.56 568.65,551.34 569.25,551.13 569.85,550.91 570.45,550.70 571.04,550.49 571.64,550.28 572.24,550.07 572.84,549.87 573.44,549.66 574.04,549.46 574.63,549.26 575.23,549.06 575.83,548.86 576.43,548.66 577.03,548.46 577.63,548.27 578.22,548.07 578.82,547.88 579.42,547.69 580.02,547.50 580.62,547.31 581.22,547.12 581.81,546.93 582.41,546.75 583.01,546.56 583.61,546.38 584.21,546.20 584.81,546.02 585.40,545.84 586.00,545.66 586.60,545.49" stroke="#a8a8a8" stroke-width="1.0"/><polyline points="228.20,745.17 228.80,745.12 229.40,745.07 229.99,745.02 230.59,744.96 231.19,744.91 231.79,744.86 232.39,744.80 232.99,744.74 233.58,744.68 234.18,744.63 234.78,744.57 235.38,744.50 235.98,744.44 236.58,744.38 237.17,744.31 237.77,744.25 238.37,744.18 238.97,744.11 239.57,744.04 240.17,743.97 240.76,743.90 241.36,743.83 241.96,743.75 242.56,743.68 243.16,743.60 243.76,743.52 244.35,743.44 244.95,743.36 245.55,743.28 246.15,743.19 246.75,743.11 247.35,743.02 247.94,742.93 248.54,742.84 249.14,742.74 249.74,742.65 250.34,742.55 250.94,742.45 251.53,742.35 252.13,742.25 252.73,742.15 253.33,742.04 253.93,741.93 254.53,741.82 255.12,741.71 255.72,741.59 256.32,741.48 256.92,741.36 257.52,741.23 258.12,741.11 258.71,740.98 259.31,740.85 259.91,740.72 260.51,740.59 261.11,740.45 261.71,740.31 262.30,740.16 262.90,740.02 263.50,739.87 264.10,739.72 264.70,739.56 265.30,739.40 265.89,739.24 266.49,739.07 267.09,738.90 267.69,738.73 268.29,738.55 268.89,738.37 269.48,738.19 270.08,738.00 270.68,737.81 271.28,737.61 271.88,737.41 272.48,737.20 273.07,736.99 273.67,736.77 274.27,736.55 274.87,736.33 275.47,736.10 276.07,735.86 276.66,735.62 277.26,735.37 277.86,735.12 278.46,734.86 279.06,734.59 279.66,734.32 280.25,734.04 280.85,733.76 281.45,733.47 282.05,733.17 282.65,732.86 283.25,732.55 283.84,732.22 284.44,731.89 285.04,731.55 285.64,731.20 286.24,730.85 286.84,730.48 287.43,730.10 288.03,729.72 288.63,729.32 289.23,728.91 289.83,728.50 290.43,728.07 291.02,727.62 291.62,727.17 292.22,726.70 292.82,726.22 293.42,725.73 294.02,725.22 294.61,724.70 295.21,724.16 295.81,723.61 296.41,723.04 297.01,722.45 297.61,721.84 298.20,721.22 298.80,720.57 299.40,719.91 300.00,719.22 300.60,718.52 301.20,717.79 301.79,717.03 302.39,716.25 302.99,715.45 303.59,714.61 304.19,713.75 304.79,712.86 305.38,711.94 305.98,710.98 306.58,709.99 307.18,708.97 307.78,707.90 308.38,706.80 308.97,705.65 309.57,704.47 310.17,703.23 310.77,701.95 311.37,700.61 311.97,699.23 312.56,697.78 313.16,696.28 313.76,694.71 314.36,693.08 314.96,691.37 315.56,689.59 316.15,687.74 316.75,685.80 317.35,683.77 317.95,681.64 318.55,679.42 319.15,677.09 319.74,674.65 320.34,672.09 320.94,669.40 321.54,666.58 322.14,663.62 322.74,660.50 323.33,657.22 323.93,653.77 324.53,650.15 325.13,646.33 325.73,642.30 326.33,638.07 326.92,633.61 327.52,628.91 328.12,623.97 328.72,618.79 329.32,613.34 329.92,607.64 330.51,601.68 331.11,595.47 331.71,589.04 332.31,582.39 332.91,575.59 333.51,568.67 334.10,561.71 334.70,554.81 335.30,548.08 335.90,541.65 336.50,535.69 337.10,530.35 337.69,525.83 338.29,522.28 338.89,519.86 339.49,518.68 340.09,518.81 340.69,520.24 341.28,522.94 341.88,526.81 342.48,531.70 343.08,537.44 343.68,543.86 344.28,550.78 344.87,558.04 345.47,565.47 346.07,572.97 346.67,580.43 347.27,587.76 347.87,594.91 348.46,601.84 349.06,608.50 349.66,614.90 350.26,621.01 350.86,626.84 351.46,632.38 352.05,637.65 352.65,642.65 353.25,647.40 353.85,651.89 354.45,656.16 355.05,660.20 355.64,664.03 356.24,667.67 356.84,671.12 357.44,674.39 358.04,677.50 358.64,680.46 359.23,683.27 359.83,685.94 360.43,688.49 361.03,690.91 361.63,693.22 362.23,695.42 362.82,697.52 363.42,699.53 364.02,701.44 364.62,703.28 365.22,705.03 365.82,706.71 366.41,708.31 367.01,709.85 367.61,711.32 368.21,712.74 368.81,714.09 369.41,715.40 370.00,716.65 370.60,717.85 371.20,719.01 371.80,720.12 372.40,721.19 373.00,722.22 373.59,723.21 374.19,724.16 374.79,725.08 375.39,725.97 375.99,726.82 376.59,727.65 377.18,728.44 377.78,729.21 378.38,729.95 378.98,730.67 379.58,731.36 380.18,732.03 380.77,732.68 381.37,733.30 381.97,733.91 382.57,734.49 383.17,735.06 383.77,735.60 384.36,736.13 384.96,736.65 385.56,737.14 386.16,737.63 386.76,738.09 387.36,738.54 387.95,738.98 388.55,739.40 389.15,739.82 389.75,740.21 390.35,740.60 390.95,740.97 391.54,741.34 392.14,741.69 392.74,742.03 393.34,742.36 393.94,742.68 394.54,743.00 395.13,743.30 395.73,743.59 396.33,743.88 396.93,744.15 397.53,744.42 398.13,744.68 398.72,744.93 399.32,745.18 399.92,745.41 400.52,745.65 401.12,745.87 401.72,746.09 402.31,746.30 402.91,746.50 403.51,746.70 404.11,746.89 404.71,747.08 405.31,747.26 405.90,747.43 406.50,747.60 407.10,747.76 407.70,747.92 408.30,748.08 408.90,748.23 409.49,748.37 410.09,748.51 410.69,748.65 411.29,748.78 411.89,748.90 412.49,749.03 413.08,749.14 413.68,749.26 414.28,749.37 414.88,749.47 415.48,749.58 416.08,749.68 416.67,749.77 417.27,749.86 417.87,749.95 418.47,750.03 419.07,750.12 419.67,750.19 420.26,750.27 420.86,750.34 421.46,750.41 422.06,750.47 422.66,750.53 423.26,750.59 423.85,750.65 424.45,750.70 425.05,750.75 425.65,750.80 426.25,750.85 426.85,750.89 427.44,750.93 428.04,750.96 428.64,751.00 429.24,751.03 429.84,751.06 430.44,751.09 431.03,751.11 431.63,751.13 432.23,751.15 432.83,751.17 433.43,751.18 434.03,751.20 434.62,751.21 435.22,751.21 435.82,751.22 436.42,751.22 437.02,751.22 437.62,751.22 438.21,751.22 438.81,751.21 439.41,751.20 440.01,751.19 440.61,751.18 441.21,751.17 441.80,751.15 442.40,751.13 443.00,751.11 443.60,751.09 444.20,751.06 444.80,751.04 445.39,751.01 445.99,750.98 446.59,750.94 447.19,750.91 447.79,750.87 448.39,750.83 448.98,750.79 449.58,750.75 450.18,750.70 450.78,750.66 451.38,750.61 451.98,750.56 452.57,750.50 453.17,750.45 453.77,750.39 454.37,750.33 454.97,750.27 455.57,750.21 456.16,750.14 456.76,750.08 457.36,750.01 457.96,749.94 458.56,749.86 459.16,749.79 459.75,749.71 460.35,749.63 460.95,749.55 461.55,749.47 462.15,749.39 462.75,749.30 463.34,749.21 463.94,749.12 464.54,749.03 465.14,748.93 465.74,748.83 466.34,748.74 466.93,748.64 467.53,748.53 468.13,748.43 468.73,748.32 469.33,748.21 469.93,748.10 470.52,747.99 471.12,747.87 471.72,747.75 472.32,747.63 472.92,747.51 473.52,747.39 474.11,747.26 474.71,747.13 475.31,747.00 475.91,746.87 476.51,746.74 477.11,746.60 477.70,746.46 478.30,746.32 478.90,746.18 479.50,746.03 480.10,745.88 480.70,745.73 481.29,745.58 481.89,745.42 482.49,745.27 483.09,745.11 483.69,744.95 484.29,744.78 484.88,744.62 485.48,744.45 486.08,744.28 486.68,744.10 487.28,743.93 487.88,743.75 488.47,743.57 489.07,743.38 489.67,743.20 490.27,743.01 490.87,742.82 491.47,742.63 492.06,742.43 492.66,742.23 493.26,742.03 493.86,741.83 494.46,741.62 495.06,741.41 495.65,741.20 496.25,740.99 496.85,740.77 497.45,740.55 498.05,740.33 498.65,740.10 499.24,739.88 499.84,739.65 500.44,739.41 501.04,739.18 501.64,738.94 502.24,738.70 502.83,738.45 503.43,738.21 504.03,737.96 504.63,737.71 505.23,737.45 505.83,737.19 506.42,736.93 507.02,736.66 507.62,736.40 508.22,736.13 508.82,735.85 509.42,735.58 510.01,735.30 510.61,735.01 511.21,734.73 511.81,734.44 512.41,734.15 513.01,733.85 513.60,733.55 514.20,733.25 514.80,732.95 515.40,732.64 516.00,732.33 516.60,732.01 517.19,731.70 517.79,731.37 518.39,731.05 518.99,730.72 519.59,730.39 520.19,730.05 520.78,729.72 521.38,729.37 521.98,729.03 522.58,728.68 523.18,728.33 523.78,727.97 524.37,727.61 524.97,727.25 525.57,726.88 526.17,726.51 526.77,726.14 527.37,725.76 527.96,725.38 528.56,724.99 529.16,724.60 529.76,724.21 530.36,723.81 530.96,723.41 531.55,723.00 532.15,722.60 532.75,722.18 533.35,721.77 533.95,721.34 534.55,720.92 535.14,720.49 535.74,720.06 536.34,719.62 536.94,719.18 537.54,718.73 538.14,718.28 538.73,717.83 539.33,717.37 539.93,716.91 540.53,716.44 541.13,715.97 541.73,715.50 542.32,715.02 542.92,714.53 543.52,714.04 544.12,713.55 544.72,713.05 545.32,712.55 545.91,712.04 546.51,711.53 547.11,711.01 547.71,710.49 548.31,709.97 548.91,709.44 549.50,708.90 550.10,708.36 550.70,707.82 551.30,707.27 551.90,706.71 552.50,706.15 553.09,705.59 553.69,705.02 554.29,704.44 554.89,703.86 555.49,703.27 556.09,702.68 556.68,702.09 557.28,701.49 557.88,700.88 558.48,700.27 559.08,699.65 559.68,699.03 560.27,698.40 560.87,697.77 561.47,697.13 562.07,696.49 562.67,695.84 563.27,695.18 563.86,694.52 564.46,693.85 565.06,693.18 565.66,692.50 566.26,691.82 566.86,691.13 567.45,690.43 568.05,689.73 568.65,689.02 569.25,688.31 569.85,687.58 570.45,686.86 571.04,686.13 571.64,685.39 572.24,684.64 572.84,683.89 573.44,683.13 574.04,682.37 574.63,681.60 575.23,680.82 575.83,680.04 576.43,679.25 577.03,678.45 577.63,677.65 578.22,676.84 578.82,676.02 579.42,675.19 580.02,674.36 580.62,673.53 581.22,672.68 581.81,671.83 582.41,670.97 583.01,670.10 583.61,669.23 584.21,668.35 584.81,667.46 585.40,666.57 586.00,665.66 586.60,664.75" stroke="#5c5c5c" stroke-width="1.75"/></g><text transform="translate(225.20,795.10) scale(0.815,1)" text-anchor="end" fill="#0c0c0c">0</text><text transform="translate(225.20,732.40) scale(0.815,1)" text-anchor="end" fill="#0c0c0c">10</text><text transform="translate(225.20,670.60) scale(0.815,1)" text-anchor="end" fill="#0c0c0c">20</text><text transform="translate(225.20,608.80) scale(0.815,1)" text-anchor="end" fill="#0c0c0c">30</text><text transform="translate(225.20,547.00) scale(0.815,1)" text-anchor="end" fill="#0c0c0c">40</text><text transform="translate(225.20,485.20) scale(0.815,1)" text-anchor="end" fill="#0c0c0c">50</text><text transform="translate(598.10,794.30) scale(0.815,1)" text-anchor="middle" fill="#0c0c0c">-120</text><text transform="translate(598.10,732.50) scale(0.815,1)" text-anchor="middle" fill="#0c0c0c">-72</text><text transform="translate(598.10,670.70) scale(0.815,1)" text-anchor="middle" fill="#0c0c0c">-24</text><text transform="translate(598.10,608.90) scale(0.815,1)" text-anchor="middle" fill="#0c0c0c">24</text><text transform="translate(598.10,547.10) scale(0.815,1)" text-anchor="middle" fill="#0c0c0c">72</text><text transform="translate(598.10,485.30) scale(0.815,1)" text-anchor="middle" fill="#0c0c0c">120</text><text transform="translate(282.14,801.00) scale(0.815,1)" text-anchor="middle" fill="#0c0c0c">20</text><text transform="translate(353.46,801.00) scale(0.815,1)" text-anchor="middle" fill="#0c0c0c">50</text><text transform="translate(407.40,801.00) scale(0.815,1)" text-anchor="middle" fill="#0c0c0c">100</text><text transform="translate(461.34,801.00) scale(0.815,1)" text-anchor="middle" fill="#0c0c0c">200</text><text transform="translate(532.66,801.00) scale(0.815,1)" text-anchor="middle" fill="#0c0c0c">500</text><text transform="translate(223.70,801.00) scale(0.815,1)" text-anchor="start" fill="#0c0c0c">10Hz</text><text transform="translate(590.90,801.00) scale(0.815,1)" text-anchor="end" fill="#0c0c0c">1k</text><text transform="translate(407.40,480.60) scale(0.954,1)" text-anchor="middle" fill="#1a1a1a">Impedance</text><text transform="translate(229.40,479.80) scale(0.815,1)" text-anchor="start" fill="#0c0c0c">ohm</text><text transform="translate(583.90,479.80) scale(0.815,1)" text-anchor="end" fill="#0c0c0c">deg</text><text transform="translate(338.00,516.00) scale(0.856,1)" text-anchor="start" fill="#5c5c5c">Zmax 44,4 Ohm @ 41,8 Hz</text><text transform="translate(436.00,759.00) scale(0.856,1)" text-anchor="start" fill="#5c5c5c">Zmin 6,6 Ohm @ 146,7 Hz</text></svg>
<svg style="left:614px;top:470px" width="394.5" height="340" viewBox="614 470 394.5 340" font-family="Liberation Sans, sans-serif" font-size="9.5"><rect x="614" y="470" width="394.5" height="340" fill="#fff"/><path d="M638.4 776.75H984.5M638.4 761.30H984.5M638.4 745.85H984.5M638.4 730.40H984.5M638.4 699.50H984.5M638.4 684.05H984.5M638.4 668.60H984.5M638.4 653.15H984.5M638.4 622.25H984.5M638.4 606.80H984.5M638.4 591.35H984.5M638.4 575.90H984.5M638.4 545.00H984.5M638.4 529.55H984.5M638.4 514.10H984.5M638.4 498.65H984.5" stroke="#e3e3e3" stroke-width="1" fill="none"/><path d="M690.17 483.2V792.2M720.66 483.2V792.2M742.30 483.2V792.2M759.08 483.2V792.2M772.79 483.2V792.2M784.38 483.2V792.2M794.42 483.2V792.2M803.28 483.2V792.2M863.32 483.2V792.2M893.81 483.2V792.2M915.45 483.2V792.2M932.23 483.2V792.2M945.94 483.2V792.2M957.53 483.2V792.2M967.57 483.2V792.2M976.43 483.2V792.2" stroke="#e2e2e2" stroke-width="1" fill="none"/><path d="M638.4 714.95H984.5M638.4 637.70H984.5M638.4 560.45H984.5" stroke="#8a8a8a" stroke-width="1" fill="none"/><path d="M811.20 483.2V792.2" stroke="#8a8a8a" stroke-width="1" fill="none"/><rect x="638.4" y="483.2" width="346.1" height="309.00000000000006" fill="none" stroke="#7a7a7a" stroke-width="1.05"/><clipPath id="c614_470"><rect x="637.9" y="482.7" width="347.1" height="310.20000000000005"/></clipPath><g clip-path="url(#c614_470)" fill="none" stroke-linejoin="round"><polyline points="638.40,560.45 638.98,560.45 639.56,560.45 640.13,560.45 640.71,560.45 641.29,560.45 641.87,560.45 642.44,560.45 643.02,560.45 643.60,560.45 644.18,560.45 644.76,560.45 645.33,560.45 645.91,560.45 646.49,560.45 647.07,560.45 647.64,560.45 648.22,560.45 648.80,560.45 649.38,560.45 649.96,560.45 650.53,560.45 651.11,560.45 651.69,560.45 652.27,560.45 652.84,560.45 653.42,560.45 654.00,560.45 654.58,560.45 655.16,560.45 655.73,560.45 656.31,560.45 656.89,560.45 657.47,560.45 658.05,560.45 658.62,560.45 659.20,560.45 659.78,560.45 660.36,560.45 660.93,560.45 661.51,560.45 662.09,560.45 662.67,560.45 663.25,560.45 663.82,560.45 664.40,560.45 664.98,560.45 665.56,560.45 666.13,560.45 666.71,560.45 667.29,560.45 667.87,560.45 668.45,560.45 669.02,560.45 669.60,560.45 670.18,560.45 670.76,560.45 671.33,560.45 671.91,560.45 672.49,560.45 673.07,560.45 673.65,560.45 674.22,560.45 674.80,560.45 675.38,560.45 675.96,560.45 676.53,560.45 677.11,560.45 677.69,560.45 678.27,560.45 678.85,560.45 679.42,560.45 680.00,560.45 680.58,560.45 681.16,560.45 681.73,560.45 682.31,560.45 682.89,560.45 683.47,560.45 684.05,560.45 684.62,560.45 685.20,560.45 685.78,560.45 686.36,560.45 686.93,560.45 687.51,560.45 688.09,560.45 688.67,560.45 689.25,560.45 689.82,560.45 690.40,560.45 690.98,560.45 691.56,560.45 692.14,560.45 692.71,560.45 693.29,560.45 693.87,560.45 694.45,560.45 695.02,560.45 695.60,560.45 696.18,560.45 696.76,560.45 697.34,560.45 697.91,560.45 698.49,560.45 699.07,560.45 699.65,560.45 700.22,560.45 700.80,560.45 701.38,560.45 701.96,560.45 702.54,560.45 703.11,560.45 703.69,560.45 704.27,560.45 704.85,560.45 705.42,560.45 706.00,560.45 706.58,560.45 707.16,560.45 707.74,560.45 708.31,560.45 708.89,560.45 709.47,560.45 710.05,560.45 710.62,560.45 711.20,560.45 711.78,560.45 712.36,560.45 712.94,560.45 713.51,560.45 714.09,560.45 714.67,560.45 715.25,560.45 715.82,560.45 716.40,560.45 716.98,560.45 717.56,560.45 718.14,560.45 718.71,560.45 719.29,560.45 719.87,560.45 720.45,560.45 721.02,560.45 721.60,560.45 722.18,560.45 722.76,560.45 723.34,560.45 723.91,560.45 724.49,560.45 725.07,560.45 725.65,560.45 726.23,560.45 726.80,560.45 727.38,560.45 727.96,560.45 728.54,560.45 729.11,560.45 729.69,560.45 730.27,560.45 730.85,560.45 731.43,560.45 732.00,560.45 732.58,560.45 733.16,560.45 733.74,560.45 734.31,560.45 734.89,560.45 735.47,560.45 736.05,560.45 736.63,560.45 737.20,560.45 737.78,560.45 738.36,560.45 738.94,560.45 739.51,560.45 740.09,560.45 740.67,560.45 741.25,560.45 741.83,560.45 742.40,560.45 742.98,560.45 743.56,560.45 744.14,560.45 744.71,560.45 745.29,560.45 745.87,560.45 746.45,560.45 747.03,560.45 747.60,560.45 748.18,560.45 748.76,560.45 749.34,560.45 749.91,560.45 750.49,560.45 751.07,560.45 751.65,560.45 752.23,560.45 752.80,560.45 753.38,560.45 753.96,560.45 754.54,560.45 755.11,560.45 755.69,560.45 756.27,560.45 756.85,560.45 757.43,560.45 758.00,560.45 758.58,560.45 759.16,560.45 759.74,560.45 760.32,560.45 760.89,560.45 761.47,560.45 762.05,560.45 762.63,560.45 763.20,560.45 763.78,560.45 764.36,560.45 764.94,560.45 765.52,560.45 766.09,560.45 766.67,560.45 767.25,560.45 767.83,560.45 768.40,560.45 768.98,560.45 769.56,560.45 770.14,560.45 770.72,560.45 771.29,560.45 771.87,560.45 772.45,560.45 773.03,560.45 773.60,560.45 774.18,560.45 774.76,560.45 775.34,560.45 775.92,560.45 776.49,560.45 777.07,560.45 777.65,560.45 778.23,560.45 778.80,560.45 779.38,560.45 779.96,560.45 780.54,560.45 781.12,560.45 781.69,560.45 782.27,560.45 782.85,560.45 783.43,560.45 784.00,560.45 784.58,560.45 785.16,560.45 785.74,560.45 786.32,560.45 786.89,560.45 787.47,560.45 788.05,560.45 788.63,560.45 789.20,560.45 789.78,560.45 790.36,560.45 790.94,560.45 791.52,560.45 792.09,560.45 792.67,560.45 793.25,560.45 793.83,560.45 794.41,560.45 794.98,560.45 795.56,560.45 796.14,560.45 796.72,560.45 797.29,560.45 797.87,560.45 798.45,560.45 799.03,560.45 799.61,560.45 800.18,560.45 800.76,560.45 801.34,560.45 801.92,560.45 802.49,560.45 803.07,560.45 803.65,560.45 804.23,560.45 804.81,560.45 805.38,560.45 805.96,560.45 806.54,560.45 807.12,560.45 807.69,560.45 808.27,560.45 808.85,560.45 809.43,560.45 810.01,560.45 810.58,560.45 811.16,560.45 811.74,560.45 812.32,560.45 812.89,560.45 813.47,560.45 814.05,560.45 814.63,560.45 815.21,560.45 815.78,560.45 816.36,560.45 816.94,560.45 817.52,560.45 818.09,560.45 818.67,560.45 819.25,560.45 819.83,560.45 820.41,560.45 820.98,560.45 821.56,560.45 822.14,560.45 822.72,560.45 823.29,560.45 823.87,560.45 824.45,560.45 825.03,560.45 825.61,560.45 826.18,560.45 826.76,560.45 827.34,560.45 827.92,560.45 828.49,560.45 829.07,560.45 829.65,560.45 830.23,560.45 830.81,560.45 831.38,560.45 831.96,560.45 832.54,560.45 833.12,560.45 833.70,560.45 834.27,560.45 834.85,560.45 835.43,560.45 836.01,560.45 836.58,560.45 837.16,560.45 837.74,560.45 838.32,560.45 838.90,560.45 839.47,560.45 840.05,560.45 840.63,560.45 841.21,560.45 841.78,560.45 842.36,560.45 842.94,560.45 843.52,560.45 844.10,560.45 844.67,560.45 845.25,560.45 845.83,560.45 846.41,560.45 846.98,560.45 847.56,560.45 848.14,560.45 848.72,560.45 849.30,560.45 849.87,560.45 850.45,560.45 851.03,560.45 851.61,560.45 852.18,560.45 852.76,560.45 853.34,560.45 853.92,560.45 854.50,560.45 855.07,560.45 855.65,560.45 856.23,560.45 856.81,560.45 857.38,560.45 857.96,560.45 858.54,560.45 859.12,560.45 859.70,560.45 860.27,560.45 860.85,560.45 861.43,560.45 862.01,560.45 862.58,560.45 863.16,560.45 863.74,560.45 864.32,560.45 864.90,560.45 865.47,560.45 866.05,560.45 866.63,560.45 867.21,560.45 867.79,560.45 868.36,560.45 868.94,560.45 869.52,560.45 870.10,560.45 870.67,560.45 871.25,560.45 871.83,560.45 872.41,560.45 872.99,560.45 873.56,560.45 874.14,560.45 874.72,560.45 875.30,560.45 875.87,560.45 876.45,560.45 877.03,560.45 877.61,560.45 878.19,560.45 878.76,560.45 879.34,560.45 879.92,560.45 880.50,560.45 881.07,560.45 881.65,560.45 882.23,560.45 882.81,560.45 883.39,560.45 883.96,560.45 884.54,560.45 885.12,560.45 885.70,560.45 886.27,560.45 886.85,560.45 887.43,560.45 888.01,560.45 888.59,560.45 889.16,560.45 889.74,560.45 890.32,560.45 890.90,560.45 891.47,560.45 892.05,560.45 892.63,560.45 893.21,560.45 893.79,560.45 894.36,560.45 894.94,560.45 895.52,560.45 896.10,560.45 896.67,560.45 897.25,560.45 897.83,560.45 898.41,560.45 898.99,560.45 899.56,560.45 900.14,560.45 900.72,560.45 901.30,560.45 901.88,560.45 902.45,560.45 903.03,560.45 903.61,560.45 904.19,560.45 904.76,560.45 905.34,560.45 905.92,560.45 906.50,560.45 907.08,560.45 907.65,560.45 908.23,560.45 908.81,560.45 909.39,560.45 909.96,560.45 910.54,560.45 911.12,560.45 911.70,560.45 912.28,560.45 912.85,560.45 913.43,560.45 914.01,560.45 914.59,560.45 915.16,560.45 915.74,560.45 916.32,560.45 916.90,560.45 917.48,560.45 918.05,560.45 918.63,560.45 919.21,560.45 919.79,560.45 920.36,560.45 920.94,560.45 921.52,560.45 922.10,560.45 922.68,560.45 923.25,560.45 923.83,560.45 924.41,560.45 924.99,560.45 925.56,560.45 926.14,560.45 926.72,560.45 927.30,560.45 927.88,560.45 928.45,560.45 929.03,560.45 929.61,560.45 930.19,560.45 930.76,560.45 931.34,560.45 931.92,560.45 932.50,560.45 933.08,560.45 933.65,560.45 934.23,560.45 934.81,560.45 935.39,560.45 935.97,560.45 936.54,560.45 937.12,560.45 937.70,560.45 938.28,560.45 938.85,560.45 939.43,560.45 940.01,560.45 940.59,560.45 941.17,560.45 941.74,560.45 942.32,560.45 942.90,560.45 943.48,560.45 944.05,560.45 944.63,560.45 945.21,560.45 945.79,560.45 946.37,560.45 946.94,560.45 947.52,560.45 948.10,560.45 948.68,560.45 949.25,560.45 949.83,560.45 950.41,560.45 950.99,560.45 951.57,560.45 952.14,560.45 952.72,560.45 953.30,560.45 953.88,560.45 954.45,560.45 955.03,560.45 955.61,560.45 956.19,560.45 956.77,560.45 957.34,560.45 957.92,560.45 958.50,560.45 959.08,560.45 959.65,560.45 960.23,560.45 960.81,560.45 961.39,560.45 961.97,560.45 962.54,560.45 963.12,560.45 963.70,560.45 964.28,560.45 964.85,560.45 965.43,560.45 966.01,560.45 966.59,560.45 967.17,560.45 967.74,560.45 968.32,560.45 968.90,560.45 969.48,560.45 970.06,560.45 970.63,560.45 971.21,560.45 971.79,560.45 972.37,560.45 972.94,560.45 973.52,560.45 974.10,560.45 974.68,560.45 975.26,560.45 975.83,560.45 976.41,560.45 976.99,560.45 977.57,560.45 978.14,560.45 978.72,560.45 979.30,560.45 979.88,560.45 980.46,560.45 981.03,560.45 981.61,560.45 982.19,560.45 982.77,560.45 983.34,560.45 983.92,560.45 984.50,560.45" stroke="#e0a82c" stroke-width="1.45"/><polyline points="638.40,694.55 638.98,694.14 639.56,693.32 640.13,692.50 640.71,691.70 641.29,690.89 641.87,690.10 642.44,689.31 643.02,688.52 643.60,687.74 644.18,686.97 644.76,686.20 645.33,685.44 645.91,684.69 646.49,683.94 647.07,683.20 647.64,682.46 648.22,681.73 648.80,681.01 649.38,680.29 649.96,679.57 650.53,678.87 651.11,678.17 651.69,677.47 652.27,676.78 652.84,676.10 653.42,675.42 654.00,674.75 654.58,674.08 655.16,673.42 655.73,672.76 656.31,672.11 656.89,671.47 657.47,670.83 658.05,670.19 658.62,669.56 659.20,668.94 659.78,668.32 660.36,667.71 660.93,667.10 661.51,666.50 662.09,665.90 662.67,665.31 663.25,664.72 663.82,664.14 664.40,663.56 664.98,662.99 665.56,662.42 666.13,661.85 666.71,661.29 667.29,660.74 667.87,660.19 668.45,659.65 669.02,659.11 669.60,658.57 670.18,658.04 670.76,657.51 671.33,656.99 671.91,656.47 672.49,655.96 673.07,655.45 673.65,654.94 674.22,654.44 674.80,653.94 675.38,653.45 675.96,652.96 676.53,652.48 677.11,652.00 677.69,651.52 678.27,651.05 678.85,650.58 679.42,650.12 680.00,649.66 680.58,649.20 681.16,648.75 681.73,648.30 682.31,647.85 682.89,647.41 683.47,646.97 684.05,646.54 684.62,646.11 685.20,645.68 685.78,645.26 686.36,644.84 686.93,644.43 687.51,644.02 688.09,643.61 688.67,643.21 689.25,642.81 689.82,642.42 690.40,642.03 690.98,641.64 691.56,641.25 692.14,640.88 692.71,640.50 693.29,640.13 693.87,639.76 694.45,639.40 695.02,639.04 695.60,638.68 696.18,638.33 696.76,637.99 697.34,637.65 697.91,637.31 698.49,636.98 699.07,636.65 699.65,636.32 700.22,636.00 700.80,635.69 701.38,635.38 701.96,635.08 702.54,634.78 703.11,634.48 703.69,634.19 704.27,633.91 704.85,633.63 705.42,633.36 706.00,633.09 706.58,632.83 707.16,632.57 707.74,632.32 708.31,632.08 708.89,631.84 709.47,631.61 710.05,631.39 710.62,631.17 711.20,630.96 711.78,630.76 712.36,630.56 712.94,630.37 713.51,630.19 714.09,630.02 714.67,629.85 715.25,629.70 715.82,629.55 716.40,629.41 716.98,629.27 717.56,629.15 718.14,629.03 718.71,628.93 719.29,628.83 719.87,628.75 720.45,628.67 721.02,628.60 721.60,628.54 722.18,628.50 722.76,628.46 723.34,628.43 723.91,628.42 724.49,628.41 725.07,628.42 725.65,628.44 726.23,628.47 726.80,628.51 727.38,628.56 727.96,628.63 728.54,628.70 729.11,628.79 729.69,628.89 730.27,629.01 730.85,629.13 731.43,629.27 732.00,629.42 732.58,629.59 733.16,629.77 733.74,629.96 734.31,630.16 734.89,630.38 735.47,630.61 736.05,630.86 736.63,631.11 737.20,631.38 737.78,631.67 738.36,631.96 738.94,632.28 739.51,632.60 740.09,632.94 740.67,633.29 741.25,633.65 741.83,634.03 742.40,634.42 742.98,634.82 743.56,635.23 744.14,635.66 744.71,636.10 745.29,636.55 745.87,637.01 746.45,637.49 747.03,637.97 747.60,638.47 748.18,638.98 748.76,639.50 749.34,640.03 749.91,640.57 750.49,641.12 751.07,641.68 751.65,642.24 752.23,642.82 752.80,643.41 753.38,644.00 753.96,644.61 754.54,645.22 755.11,645.83 755.69,646.46 756.27,647.09 756.85,647.72 757.43,648.37 758.00,649.02 758.58,649.67 759.16,650.33 759.74,650.99 760.32,651.65 760.89,652.32 761.47,653.00 762.05,653.67 762.63,654.35 763.20,655.03 763.78,655.71 764.36,656.39 764.94,657.08 765.52,657.76 766.09,658.45 766.67,659.13 767.25,659.81 767.83,660.50 768.40,661.18 768.98,661.86 769.56,662.54 770.14,663.22 770.72,663.89 771.29,664.57 771.87,665.24 772.45,665.90 773.03,666.57 773.60,667.23 774.18,667.88 774.76,668.54 775.34,669.19 775.92,669.83 776.49,670.47 777.07,671.10 777.65,671.73 778.23,672.36 778.80,672.98 779.38,673.59 779.96,674.20 780.54,674.81 781.12,675.40 781.69,676.00 782.27,676.58 782.85,677.16 783.43,677.74 784.00,678.30 784.58,678.87 785.16,679.42 785.74,679.97 786.32,680.51 786.89,681.05 787.47,681.58 788.05,682.10 788.63,682.62 789.20,683.13 789.78,683.63 790.36,684.13 790.94,684.62 791.52,685.11 792.09,685.58 792.67,686.05 793.25,686.52 793.83,686.98 794.41,687.43 794.98,687.87 795.56,688.31 796.14,688.75 796.72,689.17 797.29,689.59 797.87,690.01 798.45,690.42 799.03,690.82 799.61,691.21 800.18,691.60 800.76,691.99 801.34,692.36 801.92,692.74 802.49,693.10 803.07,693.46 803.65,693.82 804.23,694.17 804.81,694.51 805.38,694.85 805.96,695.18 806.54,695.51 807.12,695.83 807.69,696.15 808.27,696.46 808.85,696.77 809.43,697.07 810.01,697.37 810.58,697.66 811.16,697.95 811.74,698.23 812.32,698.51 812.89,698.78 813.47,699.05 814.05,699.31 814.63,699.57 815.21,699.83 815.78,700.08 816.36,700.33 816.94,700.57 817.52,700.81 818.09,701.04 818.67,701.27 819.25,701.50 819.83,701.72 820.41,701.94 820.98,702.16 821.56,702.37 822.14,702.58 822.72,702.78 823.29,702.99 823.87,703.18 824.45,703.38 825.03,703.57 825.61,703.76 826.18,703.94 826.76,704.12 827.34,704.30 827.92,704.48 828.49,704.65 829.07,704.82 829.65,704.99 830.23,705.15 830.81,705.31 831.38,705.47 831.96,705.63 832.54,705.78 833.12,705.93 833.70,706.08 834.27,706.22 834.85,706.37 835.43,706.51 836.01,706.64 836.58,706.78 837.16,706.91 837.74,707.05 838.32,707.17 838.90,707.30 839.47,707.43 840.05,707.55 840.63,707.67 841.21,707.79 841.78,707.90 842.36,708.02 842.94,708.13 843.52,708.24 844.10,708.35 844.67,708.46 845.25,708.56 845.83,708.67 846.41,708.77 846.98,708.87 847.56,708.97 848.14,709.06 848.72,709.16 849.30,709.25 849.87,709.34 850.45,709.43 851.03,709.52 851.61,709.61 852.18,709.70 852.76,709.78 853.34,709.86 853.92,709.94 854.50,710.02 855.07,710.10 855.65,710.18 856.23,710.26 856.81,710.33 857.38,710.41 857.96,710.48 858.54,710.55 859.12,710.62 859.70,710.69 860.27,710.76 860.85,710.82 861.43,710.89 862.01,710.96 862.58,711.02 863.16,711.08 863.74,711.14 864.32,711.20 864.90,711.26 865.47,711.32 866.05,711.38 866.63,711.44 867.21,711.49 867.79,711.55 868.36,711.60 868.94,711.65 869.52,711.71 870.10,711.76 870.67,711.81 871.25,711.86 871.83,711.91 872.41,711.95 872.99,712.00 873.56,712.05 874.14,712.09 874.72,712.14 875.30,712.18 875.87,712.23 876.45,712.27 877.03,712.31 877.61,712.35 878.19,712.39 878.76,712.43 879.34,712.47 879.92,712.51 880.50,712.55 881.07,712.59 881.65,712.63 882.23,712.66 882.81,712.70 883.39,712.73 883.96,712.77 884.54,712.80 885.12,712.84 885.70,712.87 886.27,712.90 886.85,712.93 887.43,712.96 888.01,713.00 888.59,713.03 889.16,713.06 889.74,713.09 890.32,713.11 890.90,713.14 891.47,713.17 892.05,713.20 892.63,713.23 893.21,713.25 893.79,713.28 894.36,713.31 894.94,713.33 895.52,713.36 896.10,713.38 896.67,713.41 897.25,713.43 897.83,713.45 898.41,713.48 898.99,713.50 899.56,713.52 900.14,713.54 900.72,713.57 901.30,713.59 901.88,713.61 902.45,713.63 903.03,713.65 903.61,713.67 904.19,713.69 904.76,713.71 905.34,713.73 905.92,713.75 906.50,713.77 907.08,713.78 907.65,713.80 908.23,713.82 908.81,713.84 909.39,713.86 909.96,713.87 910.54,713.89 911.12,713.91 911.70,713.92 912.28,713.94 912.85,713.95 913.43,713.97 914.01,713.98 914.59,714.00 915.16,714.01 915.74,714.03 916.32,714.04 916.90,714.06 917.48,714.07 918.05,714.08 918.63,714.10 919.21,714.11 919.79,714.12 920.36,714.14 920.94,714.15 921.52,714.16 922.10,714.17 922.68,714.18 923.25,714.20 923.83,714.21 924.41,714.22 924.99,714.23 925.56,714.24 926.14,714.25 926.72,714.26 927.30,714.27 927.88,714.28 928.45,714.29 929.03,714.30 929.61,714.31 930.19,714.32 930.76,714.33 931.34,714.34 931.92,714.35 932.50,714.36 933.08,714.37 933.65,714.38 934.23,714.39 934.81,714.40 935.39,714.41 935.97,714.41 936.54,714.42 937.12,714.43 937.70,714.44 938.28,714.45 938.85,714.45 939.43,714.46 940.01,714.47 940.59,714.48 941.17,714.48 941.74,714.49 942.32,714.50 942.90,714.50 943.48,714.51 944.05,714.52 944.63,714.53 945.21,714.53 945.79,714.54 946.37,714.54 946.94,714.55 947.52,714.56 948.10,714.56 948.68,714.57 949.25,714.57 949.83,714.58 950.41,714.59 950.99,714.59 951.57,714.60 952.14,714.60 952.72,714.61 953.30,714.61 953.88,714.62 954.45,714.62 955.03,714.63 955.61,714.63 956.19,714.64 956.77,714.64 957.34,714.65 957.92,714.65 958.50,714.66 959.08,714.66 959.65,714.67 960.23,714.67 960.81,714.67 961.39,714.68 961.97,714.68 962.54,714.69 963.12,714.69 963.70,714.69 964.28,714.70 964.85,714.70 965.43,714.71 966.01,714.71 966.59,714.71 967.17,714.72 967.74,714.72 968.32,714.72 968.90,714.73 969.48,714.73 970.06,714.73 970.63,714.74 971.21,714.74 971.79,714.74 972.37,714.75 972.94,714.75 973.52,714.75 974.10,714.76 974.68,714.76 975.26,714.76 975.83,714.77 976.41,714.77 976.99,714.77 977.57,714.77 978.14,714.78 978.72,714.78 979.30,714.78 979.88,714.78 980.46,714.79 981.03,714.79 981.61,714.79 982.19,714.79 982.77,714.80 983.34,714.80 983.92,714.80 984.50,714.80" stroke="#5c5c5c" stroke-width="1.75"/></g><text transform="translate(635.40,795.10) scale(0.815,1)" text-anchor="end" fill="#0c0c0c">-5</text><text transform="translate(635.40,716.95) scale(0.815,1)" text-anchor="end" fill="#0c0c0c">0</text><text transform="translate(635.40,639.70) scale(0.815,1)" text-anchor="end" fill="#0c0c0c">5</text><text transform="translate(635.40,562.45) scale(0.815,1)" text-anchor="end" fill="#0c0c0c">10</text><text transform="translate(635.40,485.20) scale(0.815,1)" text-anchor="end" fill="#0c0c0c">15</text><text transform="translate(996.00,794.30) scale(0.815,1)" text-anchor="middle" fill="#0c0c0c">-30</text><text transform="translate(996.00,717.05) scale(0.815,1)" text-anchor="middle" fill="#0c0c0c">-20</text><text transform="translate(996.00,639.80) scale(0.815,1)" text-anchor="middle" fill="#0c0c0c">-10</text><text transform="translate(996.00,562.55) scale(0.815,1)" text-anchor="middle" fill="#0c0c0c">0</text><text transform="translate(996.00,485.30) scale(0.815,1)" text-anchor="middle" fill="#0c0c0c">10</text><text transform="translate(690.49,801.00) scale(0.815,1)" text-anchor="middle" fill="#0c0c0c">20</text><text transform="translate(759.36,801.00) scale(0.815,1)" text-anchor="middle" fill="#0c0c0c">50</text><text transform="translate(811.45,801.00) scale(0.815,1)" text-anchor="middle" fill="#0c0c0c">100</text><text transform="translate(863.54,801.00) scale(0.815,1)" text-anchor="middle" fill="#0c0c0c">200</text><text transform="translate(932.41,801.00) scale(0.815,1)" text-anchor="middle" fill="#0c0c0c">500</text><text transform="translate(633.90,801.00) scale(0.815,1)" text-anchor="start" fill="#0c0c0c">10Hz</text><text transform="translate(988.80,801.00) scale(0.815,1)" text-anchor="end" fill="#0c0c0c">1k</text><text transform="translate(811.45,480.60) scale(0.954,1)" text-anchor="middle" fill="#1a1a1a">Group delay</text><text transform="translate(639.60,479.80) scale(0.815,1)" text-anchor="start" fill="#0c0c0c">ms</text><text transform="translate(983.30,479.80) scale(0.815,1)" text-anchor="end" fill="#0c0c0c">dB</text><text transform="translate(722.00,626.50) scale(0.856,1)" text-anchor="start" fill="#5c5c5c">GDmax 5,6 ms  @ 31,3 Hz</text></svg>
<svg style="left:1012px;top:470px" width="400" height="340" viewBox="1012 470 400 340" font-family="Liberation Sans, sans-serif" font-size="9.5"><rect x="1012" y="470" width="400" height="340" fill="#fff"/><path d="M1036.2 784.48H1384.5M1036.2 776.75H1384.5M1036.2 769.03H1384.5M1036.2 761.30H1384.5M1036.2 745.85H1384.5M1036.2 738.12H1384.5M1036.2 730.40H1384.5M1036.2 722.68H1384.5M1036.2 707.23H1384.5M1036.2 699.50H1384.5M1036.2 691.77H1384.5M1036.2 684.05H1384.5M1036.2 668.60H1384.5M1036.2 660.88H1384.5M1036.2 653.15H1384.5M1036.2 645.42H1384.5M1036.2 629.98H1384.5M1036.2 622.25H1384.5M1036.2 614.53H1384.5M1036.2 606.80H1384.5M1036.2 591.35H1384.5M1036.2 583.62H1384.5M1036.2 575.90H1384.5M1036.2 568.17H1384.5M1036.2 552.73H1384.5M1036.2 545.00H1384.5M1036.2 537.27H1384.5M1036.2 529.55H1384.5M1036.2 514.10H1384.5M1036.2 506.38H1384.5M1036.2 498.65H1384.5M1036.2 490.93H1384.5" stroke="#e3e3e3" stroke-width="1" fill="none"/><path d="M1088.30 483.2V792.2M1118.99 483.2V792.2M1140.76 483.2V792.2M1157.65 483.2V792.2M1171.44 483.2V792.2M1183.11 483.2V792.2M1193.21 483.2V792.2M1202.13 483.2V792.2M1262.55 483.2V792.2M1293.24 483.2V792.2M1315.01 483.2V792.2M1331.90 483.2V792.2M1345.69 483.2V792.2M1357.36 483.2V792.2M1367.46 483.2V792.2M1376.38 483.2V792.2" stroke="#e2e2e2" stroke-width="1" fill="none"/><path d="M1036.2 753.58H1384.5M1036.2 714.95H1384.5M1036.2 676.33H1384.5M1036.2 637.70H1384.5M1036.2 599.08H1384.5M1036.2 560.45H1384.5M1036.2 521.83H1384.5" stroke="#8a8a8a" stroke-width="1" fill="none"/><path d="M1210.10 483.2V792.2" stroke="#8a8a8a" stroke-width="1" fill="none"/><rect x="1036.2" y="483.2" width="348.29999999999995" height="309.00000000000006" fill="none" stroke="#7a7a7a" stroke-width="1.05"/><clipPath id="c1012_470"><rect x="1035.7" y="482.7" width="349.29999999999995" height="310.20000000000005"/></clipPath><g clip-path="url(#c1012_470)" fill="none" stroke-linejoin="round"><polyline points="1036.20,791.96 1036.78,791.96 1037.36,791.95 1037.94,791.95 1038.53,791.95 1039.11,791.95 1039.69,791.95 1040.27,791.95 1040.85,791.94 1041.43,791.94 1042.01,791.94 1042.60,791.94 1043.18,791.94 1043.76,791.94 1044.34,791.93 1044.92,791.93 1045.50,791.93 1046.08,791.93 1046.67,791.93 1047.25,791.93 1047.83,791.92 1048.41,791.92 1048.99,791.92 1049.57,791.92 1050.16,791.92 1050.74,791.91 1051.32,791.91 1051.90,791.91 1052.48,791.91 1053.06,791.91 1053.64,791.90 1054.23,791.90 1054.81,791.90 1055.39,791.90 1055.97,791.90 1056.55,791.89 1057.13,791.89 1057.71,791.89 1058.30,791.89 1058.88,791.89 1059.46,791.88 1060.04,791.88 1060.62,791.88 1061.20,791.88 1061.78,791.88 1062.37,791.87 1062.95,791.87 1063.53,791.87 1064.11,791.87 1064.69,791.86 1065.27,791.86 1065.85,791.86 1066.44,791.86 1067.02,791.85 1067.60,791.85 1068.18,791.85 1068.76,791.85 1069.34,791.85 1069.93,791.84 1070.51,791.84 1071.09,791.84 1071.67,791.84 1072.25,791.83 1072.83,791.83 1073.41,791.83 1074.00,791.83 1074.58,791.82 1075.16,791.82 1075.74,791.82 1076.32,791.82 1076.90,791.81 1077.48,791.81 1078.07,791.81 1078.65,791.80 1079.23,791.80 1079.81,791.80 1080.39,791.80 1080.97,791.79 1081.55,791.79 1082.14,791.79 1082.72,791.79 1083.30,791.78 1083.88,791.78 1084.46,791.78 1085.04,791.78 1085.62,791.77 1086.21,791.77 1086.79,791.77 1087.37,791.76 1087.95,791.76 1088.53,791.76 1089.11,791.76 1089.70,791.75 1090.28,791.75 1090.86,791.75 1091.44,791.74 1092.02,791.74 1092.60,791.74 1093.18,791.73 1093.77,791.73 1094.35,791.73 1094.93,791.73 1095.51,791.72 1096.09,791.72 1096.67,791.72 1097.25,791.71 1097.84,791.71 1098.42,791.71 1099.00,791.70 1099.58,791.70 1100.16,791.70 1100.74,791.70 1101.32,791.69 1101.91,791.69 1102.49,791.69 1103.07,791.68 1103.65,791.68 1104.23,791.68 1104.81,791.67 1105.39,791.67 1105.98,791.67 1106.56,791.66 1107.14,791.66 1107.72,791.66 1108.30,791.65 1108.88,791.65 1109.47,791.65 1110.05,791.64 1110.63,791.64 1111.21,791.64 1111.79,791.64 1112.37,791.63 1112.95,791.63 1113.54,791.63 1114.12,791.62 1114.70,791.62 1115.28,791.62 1115.86,791.61 1116.44,791.61 1117.02,791.61 1117.61,791.60 1118.19,791.60 1118.77,791.60 1119.35,791.60 1119.93,791.59 1120.51,791.59 1121.09,791.59 1121.68,791.58 1122.26,791.58 1122.84,791.58 1123.42,791.58 1124.00,791.57 1124.58,791.57 1125.16,791.57 1125.75,791.56 1126.33,791.56 1126.91,791.56 1127.49,791.56 1128.07,791.55 1128.65,791.55 1129.24,791.55 1129.82,791.55 1130.40,791.54 1130.98,791.54 1131.56,791.54 1132.14,791.54 1132.72,791.53 1133.31,791.53 1133.89,791.53 1134.47,791.53 1135.05,791.52 1135.63,791.52 1136.21,791.52 1136.79,791.52 1137.38,791.52 1137.96,791.51 1138.54,791.51 1139.12,791.51 1139.70,791.51 1140.28,791.51 1140.86,791.50 1141.45,791.50 1142.03,791.50 1142.61,791.50 1143.19,791.50 1143.77,791.50 1144.35,791.50 1144.93,791.49 1145.52,791.49 1146.10,791.49 1146.68,791.49 1147.26,791.49 1147.84,791.49 1148.42,791.49 1149.01,791.49 1149.59,791.49 1150.17,791.49 1150.75,791.49 1151.33,791.49 1151.91,791.48 1152.49,791.48 1153.08,791.48 1153.66,791.48 1154.24,791.48 1154.82,791.48 1155.40,791.48 1155.98,791.48 1156.56,791.48 1157.15,791.48 1157.73,791.48 1158.31,791.48 1158.89,791.49 1159.47,791.49 1160.05,791.49 1160.63,791.49 1161.22,791.49 1161.80,791.49 1162.38,791.49 1162.96,791.49 1163.54,791.49 1164.12,791.49 1164.70,791.49 1165.29,791.49 1165.87,791.50 1166.45,791.50 1167.03,791.50 1167.61,791.50 1168.19,791.50 1168.77,791.50 1169.36,791.51 1169.94,791.51 1170.52,791.51 1171.10,791.51 1171.68,791.51 1172.26,791.51 1172.85,791.52 1173.43,791.52 1174.01,791.52 1174.59,791.52 1175.17,791.53 1175.75,791.53 1176.33,791.53 1176.92,791.53 1177.50,791.53 1178.08,791.54 1178.66,791.54 1179.24,791.54 1179.82,791.55 1180.40,791.55 1180.99,791.55 1181.57,791.55 1182.15,791.56 1182.73,791.56 1183.31,791.56 1183.89,791.56 1184.47,791.57 1185.06,791.57 1185.64,791.57 1186.22,791.58 1186.80,791.58 1187.38,791.58 1187.96,791.59 1188.54,791.59 1189.13,791.59 1189.71,791.60 1190.29,791.60 1190.87,791.60 1191.45,791.61 1192.03,791.61 1192.62,791.61 1193.20,791.62 1193.78,791.62 1194.36,791.62 1194.94,791.63 1195.52,791.63 1196.10,791.63 1196.69,791.64 1197.27,791.64 1197.85,791.64 1198.43,791.65 1199.01,791.65 1199.59,791.65 1200.17,791.66 1200.76,791.66 1201.34,791.66 1201.92,791.67 1202.50,791.67 1203.08,791.67 1203.66,791.68 1204.24,791.68 1204.83,791.69 1205.41,791.69 1205.99,791.69 1206.57,791.70 1207.15,791.70 1207.73,791.70 1208.31,791.71 1208.90,791.71 1209.48,791.71 1210.06,791.72 1210.64,791.72 1211.22,791.72 1211.80,791.73 1212.39,791.73 1212.97,791.73 1213.55,791.74 1214.13,791.74 1214.71,791.74 1215.29,791.75 1215.87,791.75 1216.46,791.75 1217.04,791.76 1217.62,791.76 1218.20,791.77 1218.78,791.77 1219.36,791.77 1219.94,791.78 1220.53,791.78 1221.11,791.78 1221.69,791.79 1222.27,791.79 1222.85,791.79 1223.43,791.80 1224.01,791.80 1224.60,791.80 1225.18,791.81 1225.76,791.81 1226.34,791.81 1226.92,791.81 1227.50,791.82 1228.08,791.82 1228.67,791.82 1229.25,791.83 1229.83,791.83 1230.41,791.83 1230.99,791.84 1231.57,791.84 1232.16,791.84 1232.74,791.85 1233.32,791.85 1233.90,791.85 1234.48,791.86 1235.06,791.86 1235.64,791.86 1236.23,791.86 1236.81,791.87 1237.39,791.87 1237.97,791.87 1238.55,791.88 1239.13,791.88 1239.71,791.88 1240.30,791.89 1240.88,791.89 1241.46,791.89 1242.04,791.89 1242.62,791.90 1243.20,791.90 1243.78,791.90 1244.37,791.90 1244.95,791.91 1245.53,791.91 1246.11,791.91 1246.69,791.92 1247.27,791.92 1247.85,791.92 1248.44,791.92 1249.02,791.93 1249.60,791.93 1250.18,791.93 1250.76,791.93 1251.34,791.94 1251.93,791.94 1252.51,791.94 1253.09,791.94 1253.67,791.95 1254.25,791.95 1254.83,791.95 1255.41,791.95 1256.00,791.96 1256.58,791.96 1257.16,791.96 1257.74,791.96 1258.32,791.97 1258.90,791.97 1259.48,791.97 1260.07,791.97 1260.65,791.98 1261.23,791.98 1261.81,791.98 1262.39,791.98 1262.97,791.98 1263.55,791.99 1264.14,791.99 1264.72,791.99 1265.30,791.99 1265.88,792.00 1266.46,792.00 1267.04,792.00 1267.62,792.00 1268.21,792.00 1268.79,792.01 1269.37,792.01 1269.95,792.01 1270.53,792.01 1271.11,792.01 1271.69,792.02 1272.28,792.02 1272.86,792.02 1273.44,792.02 1274.02,792.02 1274.60,792.03 1275.18,792.03 1275.77,792.03 1276.35,792.03 1276.93,792.03 1277.51,792.04 1278.09,792.04 1278.67,792.04 1279.25,792.04 1279.84,792.04 1280.42,792.04 1281.00,792.05 1281.58,792.05 1282.16,792.05 1282.74,792.05 1283.32,792.05 1283.91,792.05 1284.49,792.06 1285.07,792.06 1285.65,792.06 1286.23,792.06 1286.81,792.06 1287.39,792.06 1287.98,792.07 1288.56,792.07 1289.14,792.07 1289.72,792.07 1290.30,792.07 1290.88,792.07 1291.46,792.07 1292.05,792.08 1292.63,792.08 1293.21,792.08 1293.79,792.08 1294.37,792.08 1294.95,792.08 1295.54,792.09 1296.12,792.09 1296.70,792.09 1297.28,792.09 1297.86,792.09 1298.44,792.09 1299.02,792.09 1299.61,792.09 1300.19,792.10 1300.77,792.10 1301.35,792.10 1301.93,792.10 1302.51,792.10 1303.09,792.10 1303.68,792.10 1304.26,792.10 1304.84,792.11 1305.42,792.11 1306.00,792.11 1306.58,792.11 1307.16,792.11 1307.75,792.11 1308.33,792.11 1308.91,792.11 1309.49,792.11 1310.07,792.12 1310.65,792.12 1311.23,792.12 1311.82,792.12 1312.40,792.12 1312.98,792.12 1313.56,792.12 1314.14,792.12 1314.72,792.12 1315.31,792.13 1315.89,792.13 1316.47,792.13 1317.05,792.13 1317.63,792.13 1318.21,792.13 1318.79,792.13 1319.38,792.13 1319.96,792.13 1320.54,792.13 1321.12,792.13 1321.70,792.14 1322.28,792.14 1322.86,792.14 1323.45,792.14 1324.03,792.14 1324.61,792.14 1325.19,792.14 1325.77,792.14 1326.35,792.14 1326.93,792.14 1327.52,792.14 1328.10,792.14 1328.68,792.14 1329.26,792.15 1329.84,792.15 1330.42,792.15 1331.00,792.15 1331.59,792.15 1332.17,792.15 1332.75,792.15 1333.33,792.15 1333.91,792.15 1334.49,792.15 1335.08,792.15 1335.66,792.15 1336.24,792.15 1336.82,792.15 1337.40,792.16 1337.98,792.16 1338.56,792.16 1339.15,792.16 1339.73,792.16 1340.31,792.16 1340.89,792.16 1341.47,792.16 1342.05,792.16 1342.63,792.16 1343.22,792.16 1343.80,792.16 1344.38,792.16 1344.96,792.16 1345.54,792.16 1346.12,792.16 1346.70,792.16 1347.29,792.16 1347.87,792.17 1348.45,792.17 1349.03,792.17 1349.61,792.17 1350.19,792.17 1350.77,792.17 1351.36,792.17 1351.94,792.17 1352.52,792.17 1353.10,792.17 1353.68,792.17 1354.26,792.17 1354.85,792.17 1355.43,792.17 1356.01,792.17 1356.59,792.17 1357.17,792.17 1357.75,792.17 1358.33,792.17 1358.92,792.17 1359.50,792.17 1360.08,792.17 1360.66,792.17 1361.24,792.17 1361.82,792.18 1362.40,792.18 1362.99,792.18 1363.57,792.18 1364.15,792.18 1364.73,792.18 1365.31,792.18 1365.89,792.18 1366.47,792.18 1367.06,792.18 1367.64,792.18 1368.22,792.18 1368.80,792.18 1369.38,792.18 1369.96,792.18 1370.54,792.18 1371.13,792.18 1371.71,792.18 1372.29,792.18 1372.87,792.18 1373.45,792.18 1374.03,792.18 1374.62,792.18 1375.20,792.18 1375.78,792.18 1376.36,792.18 1376.94,792.18 1377.52,792.18 1378.10,792.18 1378.69,792.18 1379.27,792.18 1379.85,792.18 1380.43,792.18 1381.01,792.18 1381.59,792.19 1382.17,792.19 1382.76,792.19 1383.34,792.19 1383.92,792.19 1384.50,792.19" stroke="#2424e6" stroke-width="1.4"/></g><text transform="translate(1033.20,795.10) scale(0.815,1)" text-anchor="end" fill="#0c0c0c">0</text><text transform="translate(1033.20,755.58) scale(0.815,1)" text-anchor="end" fill="#0c0c0c">5</text><text transform="translate(1033.20,716.95) scale(0.815,1)" text-anchor="end" fill="#0c0c0c">10</text><text transform="translate(1033.20,678.33) scale(0.815,1)" text-anchor="end" fill="#0c0c0c">15</text><text transform="translate(1033.20,639.70) scale(0.815,1)" text-anchor="end" fill="#0c0c0c">20</text><text transform="translate(1033.20,601.08) scale(0.815,1)" text-anchor="end" fill="#0c0c0c">25</text><text transform="translate(1033.20,562.45) scale(0.815,1)" text-anchor="end" fill="#0c0c0c">30</text><text transform="translate(1033.20,523.83) scale(0.815,1)" text-anchor="end" fill="#0c0c0c">35</text><text transform="translate(1033.20,485.20) scale(0.815,1)" text-anchor="end" fill="#0c0c0c">40</text><text transform="translate(1088.62,801.00) scale(0.815,1)" text-anchor="middle" fill="#0c0c0c">20</text><text transform="translate(1157.93,801.00) scale(0.815,1)" text-anchor="middle" fill="#0c0c0c">50</text><text transform="translate(1210.35,801.00) scale(0.815,1)" text-anchor="middle" fill="#0c0c0c">100</text><text transform="translate(1262.77,801.00) scale(0.815,1)" text-anchor="middle" fill="#0c0c0c">200</text><text transform="translate(1332.08,801.00) scale(0.815,1)" text-anchor="middle" fill="#0c0c0c">500</text><text transform="translate(1031.70,801.00) scale(0.815,1)" text-anchor="start" fill="#0c0c0c">10Hz</text><text transform="translate(1388.80,801.00) scale(0.815,1)" text-anchor="end" fill="#0c0c0c">1k</text><text transform="translate(1210.35,480.60) scale(0.954,1)" text-anchor="middle" fill="#1a1a1a">Velocity</text><text transform="translate(1037.40,479.80) scale(0.815,1)" text-anchor="start" fill="#0c0c0c">m/s</text></svg>
</body></html>
